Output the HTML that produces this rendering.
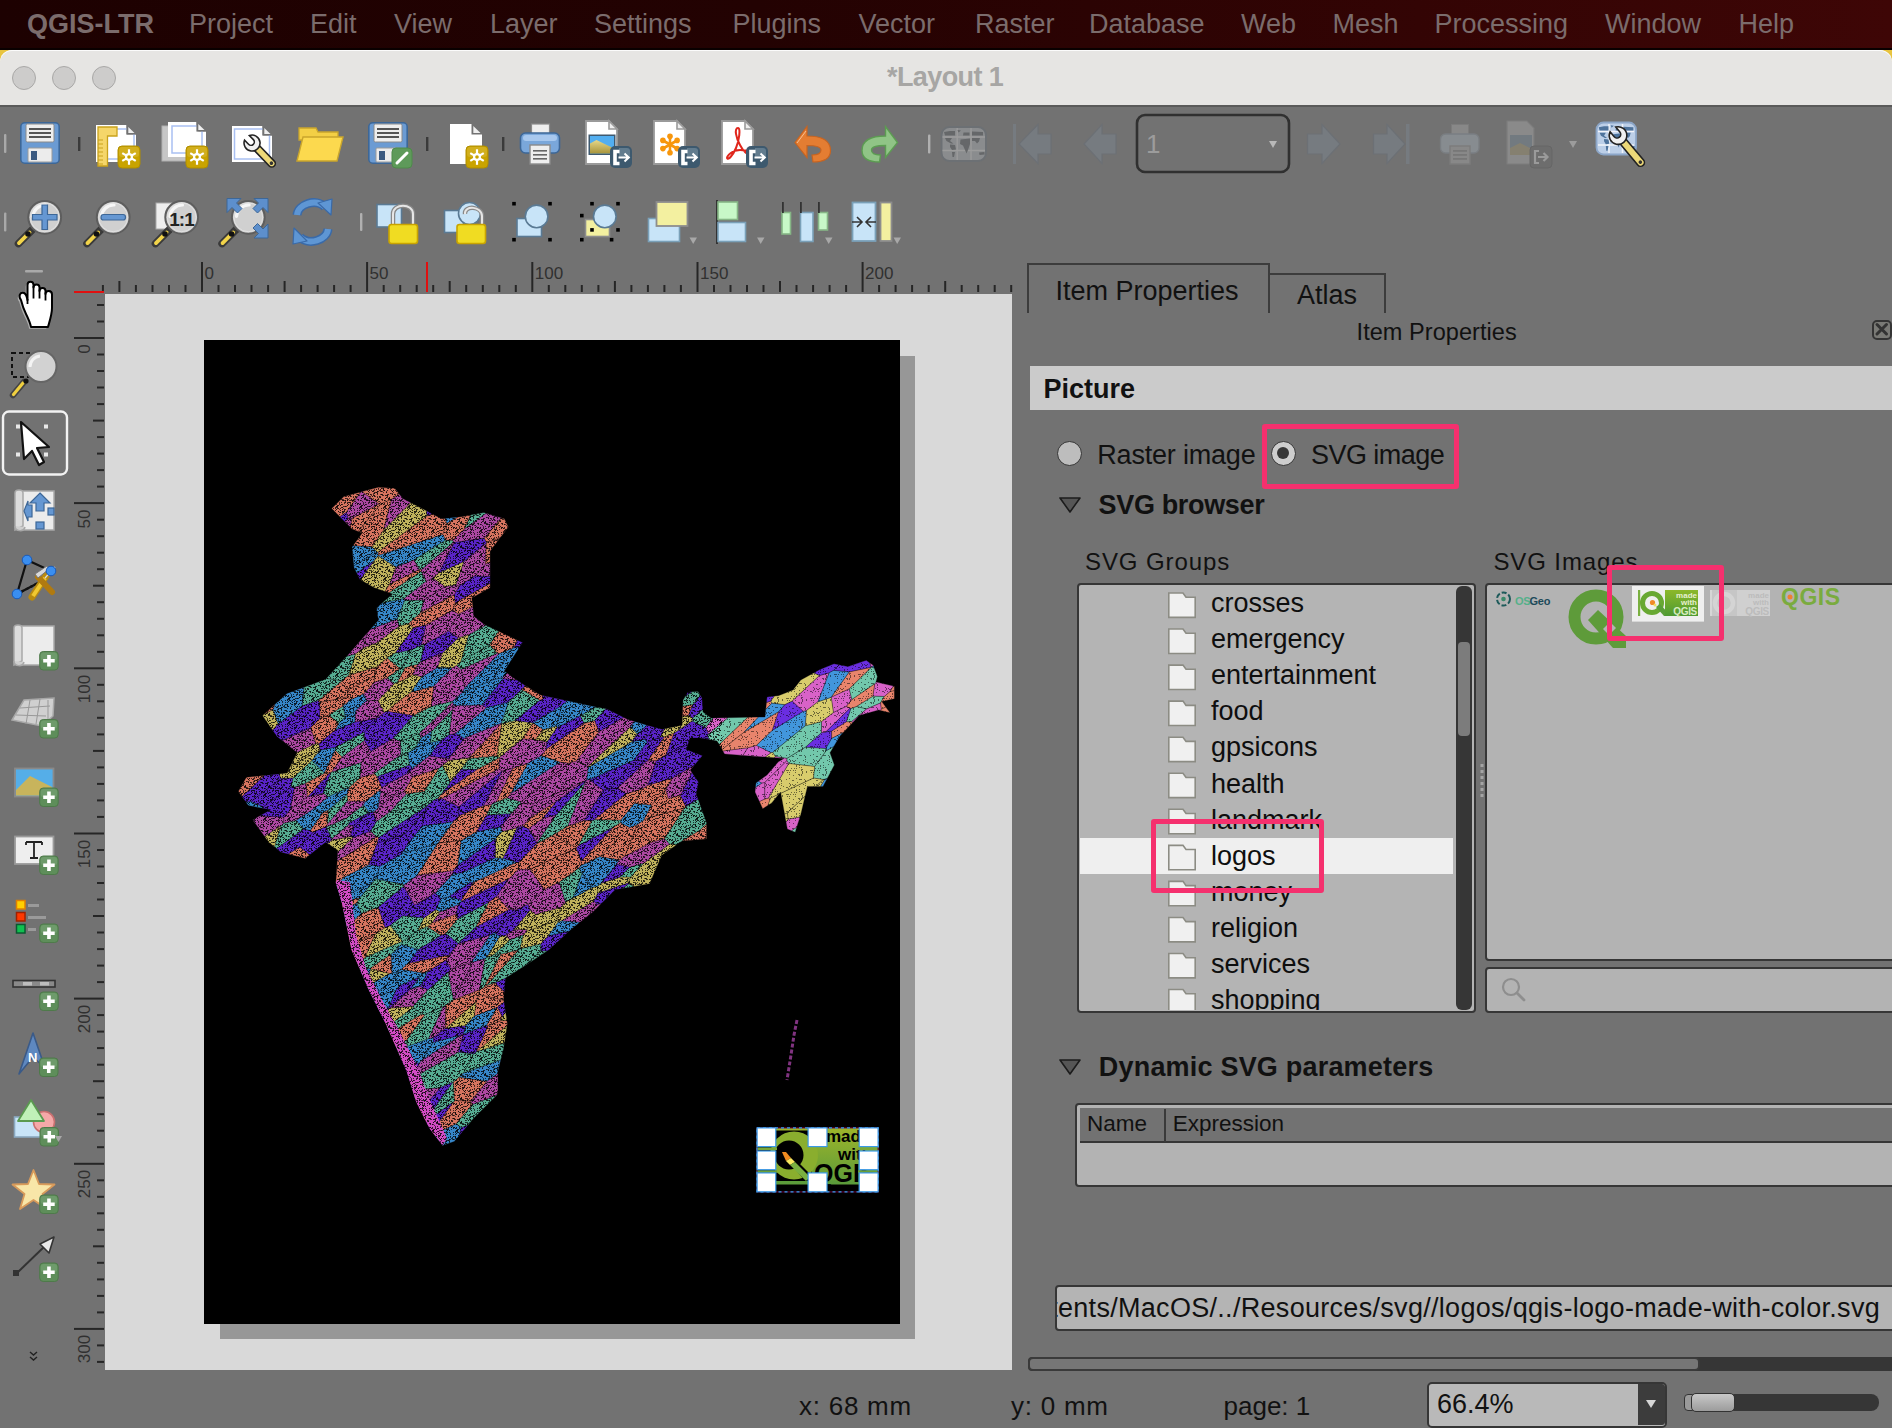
<!DOCTYPE html>
<html><head><meta charset="utf-8"><style>
html,body{margin:0;padding:0;width:1892px;height:1428px;overflow:hidden;background:#727272;}
body{position:relative;font-family:"Liberation Sans", sans-serif;}
.t{position:absolute;white-space:nowrap;line-height:1;}
.a{position:absolute;}
svg.a{overflow:visible;}
</style></head><body>

<div class="a" style="left:0px;top:0px;width:1892px;height:50px;background:linear-gradient(90deg,#1d0101 0%,#230202 40%,#330404 75%,#3e0606 100%);"></div>
<div class="a" style="left:0px;top:48px;width:1892px;height:2px;background:#0a0000;"></div>
<div class="t" style="left:27.0px;top:10.5px;font-size:27px;color:#7b6c6c;font-weight:bold;">QGIS-LTR</div>
<div class="t" style="left:189.0px;top:10.5px;font-size:27px;color:#7b6c6c;font-weight:normal;">Project</div>
<div class="t" style="left:310.0px;top:10.5px;font-size:27px;color:#7b6c6c;font-weight:normal;">Edit</div>
<div class="t" style="left:394.0px;top:10.5px;font-size:27px;color:#7b6c6c;font-weight:normal;">View</div>
<div class="t" style="left:490.0px;top:10.5px;font-size:27px;color:#7b6c6c;font-weight:normal;">Layer</div>
<div class="t" style="left:594.0px;top:10.5px;font-size:27px;color:#7b6c6c;font-weight:normal;">Settings</div>
<div class="t" style="left:732.5px;top:10.5px;font-size:27px;color:#7b6c6c;font-weight:normal;">Plugins</div>
<div class="t" style="left:858.5px;top:10.5px;font-size:27px;color:#7b6c6c;font-weight:normal;">Vector</div>
<div class="t" style="left:975.0px;top:10.5px;font-size:27px;color:#7b6c6c;font-weight:normal;">Raster</div>
<div class="t" style="left:1089.0px;top:10.5px;font-size:27px;color:#7b6c6c;font-weight:normal;">Database</div>
<div class="t" style="left:1241.0px;top:10.5px;font-size:27px;color:#7b6c6c;font-weight:normal;">Web</div>
<div class="t" style="left:1332.5px;top:10.5px;font-size:27px;color:#7b6c6c;font-weight:normal;">Mesh</div>
<div class="t" style="left:1434.5px;top:10.5px;font-size:27px;color:#7b6c6c;font-weight:normal;">Processing</div>
<div class="t" style="left:1605.0px;top:10.5px;font-size:27px;color:#7b6c6c;font-weight:normal;">Window</div>
<div class="t" style="left:1738.5px;top:10.5px;font-size:27px;color:#7b6c6c;font-weight:normal;">Help</div>
<div class="a" style="left:0px;top:50px;width:20px;height:20px;background:#e8c440;"></div>
<div class="a" style="left:1872px;top:50px;width:20px;height:20px;background:#e8c440;"></div>
<div class="a" style="left:0px;top:50px;width:1892px;height:56px;background:#e6e5e3;border-radius:12px 12px 0 0;box-shadow:inset 0 1px 0 #fbfbfb;"></div>
<div class="a" style="left:12px;top:66px;width:22px;height:22px;background:#cdcccb;border:1px solid #a9a8a7;border-radius:50%;"></div>
<div class="a" style="left:52px;top:66px;width:22px;height:22px;background:#cdcccb;border:1px solid #a9a8a7;border-radius:50%;"></div>
<div class="a" style="left:92px;top:66px;width:22px;height:22px;background:#cdcccb;border:1px solid #a9a8a7;border-radius:50%;"></div>
<div class="t" style="left:887.0px;top:64.0px;font-size:27px;color:#a7a6a4;font-weight:bold;letter-spacing:-0.6px;">*Layout 1</div>
<div class="a" style="left:0px;top:105px;width:1892px;height:2px;background:#5a5a5a;"></div>
<svg class="a" style="left:0;top:0" width="1892" height="260"><rect x="4" y="134" width="2.4" height="19" rx="1" fill="#a9a9a9"/>
<g transform="translate(20,122)">
<rect x="0.8" y="0.8" width="38.4" height="40.4" rx="4" fill="#6b9bd3" stroke="#3d6797" stroke-width="1.6"/>
<rect x="6" y="2" width="28" height="18" rx="1.5" fill="#eeeeee" stroke="#8a8a8a" stroke-width="1"/>
<rect x="9" y="6" width="22" height="2" fill="#555"/><rect x="9" y="10" width="22" height="2" fill="#555"/><rect x="9" y="14" width="22" height="2" fill="#555"/>
<rect x="8" y="26" width="24" height="14" rx="1" fill="#ececec" stroke="#9a9a9a" stroke-width="1"/>
<rect x="11" y="29" width="6" height="9" fill="#3b5a80"/>
</g>
<rect x="78" y="137" width="2.4" height="14" fill="#3a3a3a"/>
<path d="M96,125 L126.5,125 L126.5,134.5 L136,134.5 L136,162 L96,162 Z" fill="#ffffff"/><path d="M128.3,127 L134.5,133.0 L128.3,133.0 Z" fill="#eeeeee"/>
<rect x="106" y="129" width="28" height="30" fill="none" stroke="#a9c0f2" stroke-width="1.5"/>
<rect x="126.5" y="124" width="10.5" height="10.5" fill="#727272"/><path d="M128.3,127 L134.5,133.0 L128.3,133.0 Z" fill="#eeeeee"/>
<path d="M98,127 L117,127 L117,136 L107.5,136 L107.5,166 L98,166 Z" fill="#f5d66a" stroke="#c9a21c" stroke-width="1.3"/>
<line x1="98" y1="140" x2="103" y2="140" stroke="#c9a21c" stroke-width="1"/><line x1="98" y1="144" x2="103" y2="144" stroke="#c9a21c" stroke-width="1"/><line x1="98" y1="148" x2="103" y2="148" stroke="#c9a21c" stroke-width="1"/><line x1="98" y1="152" x2="103" y2="152" stroke="#c9a21c" stroke-width="1"/><line x1="98" y1="156" x2="103" y2="156" stroke="#c9a21c" stroke-width="1"/><line x1="98" y1="160" x2="103" y2="160" stroke="#c9a21c" stroke-width="1"/><line x1="98" y1="164" x2="103" y2="164" stroke="#c9a21c" stroke-width="1"/>
<rect x="118" y="146" width="22" height="22" rx="4" fill="#c9a300" stroke="#b08e00" stroke-width="1"/><rect x="119" y="147" width="20" height="10.0" rx="3" fill="#d9b830" opacity="0.6"/><line x1="129.0" y1="157.0" x2="135.7549998743513" y2="160.8999970125006" stroke="#fff" stroke-width="2.2"/><line x1="129.0" y1="157.0" x2="129.0000103490002" y2="164.79999999999313" stroke="#fff" stroke-width="2.2"/><line x1="129.0" y1="157.0" x2="122.24501047466472" y2="160.9000149374856" stroke="#fff" stroke-width="2.2"/><line x1="129.0" y1="157.0" x2="122.24498977668019" y2="153.10002091251187" stroke="#fff" stroke-width="2.2"/><line x1="129.0" y1="157.0" x2="128.9999689529994" y2="149.20000000006178" stroke="#fff" stroke-width="2.2"/><line x1="129.0" y1="157.0" x2="135.75497917627166" y2="153.0999671375569" stroke="#fff" stroke-width="2.2"/><circle cx="129.0" cy="157.0" r="4" fill="#fff"/><circle cx="129.0" cy="157.0" r="1.8" fill="#c9a300"/>
<rect x="162" y="126" width="36" height="35" fill="#c6c6c6" stroke="#b0b0b0"/>
<path d="M168,122 L196.5,122 L196.5,131.5 L206,131.5 L206,157 L168,157 Z" fill="#ffffff"/><path d="M198.3,124 L204.5,130.0 L198.3,130.0 Z" fill="#eeeeee"/>
<rect x="172" y="126" width="30" height="27" fill="none" stroke="#a9c0f2" stroke-width="1.5"/>
<rect x="196.5" y="121" width="10.5" height="10.5" fill="#727272"/><path d="M198.3,124 L204.5,130.0 L198.3,130.0 Z" fill="#eeeeee"/>
<rect x="186" y="146" width="22" height="22" rx="4" fill="#c9a300" stroke="#b08e00" stroke-width="1"/><rect x="187" y="147" width="20" height="10.0" rx="3" fill="#d9b830" opacity="0.6"/><line x1="197.0" y1="157.0" x2="203.7549998743513" y2="160.8999970125006" stroke="#fff" stroke-width="2.2"/><line x1="197.0" y1="157.0" x2="197.0000103490002" y2="164.79999999999313" stroke="#fff" stroke-width="2.2"/><line x1="197.0" y1="157.0" x2="190.24501047466472" y2="160.9000149374856" stroke="#fff" stroke-width="2.2"/><line x1="197.0" y1="157.0" x2="190.2449897766802" y2="153.10002091251187" stroke="#fff" stroke-width="2.2"/><line x1="197.0" y1="157.0" x2="196.9999689529994" y2="149.20000000006178" stroke="#fff" stroke-width="2.2"/><line x1="197.0" y1="157.0" x2="203.75497917627166" y2="153.0999671375569" stroke="#fff" stroke-width="2.2"/><circle cx="197.0" cy="157.0" r="4" fill="#fff"/><circle cx="197.0" cy="157.0" r="1.8" fill="#c9a300"/>
<path d="M232,126 L262.5,126 L262.5,135.5 L272,135.5 L272,162 L232,162 Z" fill="#ffffff"/><path d="M264.3,128 L270.5,134.0 L264.3,134.0 Z" fill="#eeeeee"/>
<rect x="234.5" y="129" width="35" height="30" fill="none" stroke="#a9c0f2" stroke-width="1.5"/>
<rect x="262.5" y="125" width="10.5" height="10.5" fill="#727272"/><path d="M264.3,128 L270.5,134.0 L264.3,134.0 Z" fill="#eeeeee"/>
<g transform="translate(252,143) rotate(46)"><rect x="4.40" y="-3.50" width="27.60" height="7" rx="3.50" fill="#ecd878" stroke="#222" stroke-width="1.6"/><rect x="4.80" y="-3.50" width="3.2" height="7" fill="#333"/><circle cx="28.00" cy="0" r="1.8" fill="#333"/><path d="M-7.20,-3.36 A8,8 0 1 1 -7.20,3.36 L-1.50,3.36 A3.36,3.36 0 0 0 -1.50,-3.36 Z" fill="#f0f0f0" stroke="#222" stroke-width="1.6"/></g>
<path d="M299,128 L316,128 L318,132 L338,132 L338,140 L299,140 Z" fill="#f3cf45" stroke="#c9a52c" stroke-width="1.3"/>
<path d="M297,161 L303,137 L343,137 L337,161 Z" fill="#fcd94e" stroke="#c9a52c" stroke-width="1.4"/>
<g transform="translate(368,122)">
<rect x="0.8" y="0.8" width="38.4" height="40.4" rx="4" fill="#6b9bd3" stroke="#3d6797" stroke-width="1.6"/>
<rect x="6" y="2" width="28" height="18" rx="1.5" fill="#eeeeee" stroke="#8a8a8a" stroke-width="1"/>
<rect x="9" y="6" width="22" height="2" fill="#555"/><rect x="9" y="10" width="22" height="2" fill="#555"/><rect x="9" y="14" width="22" height="2" fill="#555"/>
<rect x="8" y="26" width="24" height="14" rx="1" fill="#ececec" stroke="#9a9a9a" stroke-width="1"/>
<rect x="11" y="29" width="6" height="9" fill="#3b5a80"/>
</g>
<rect x="392" y="148" width="20" height="20" rx="4" fill="#5e9a5a" stroke="#4e8a4a"/><line x1="397" y1="163" x2="407" y2="153" stroke="#fff" stroke-width="3" stroke-linecap="round"/>
<rect x="426" y="137" width="2.4" height="14" fill="#3a3a3a"/>
<path d="M450,124 L471.5,124 L471.5,134.5 L482,134.5 L482,164 L450,164 Z" fill="#ffffff"/><path d="M473.3,126 L480.5,133.0 L473.3,133.0 Z" fill="#eeeeee"/>
<rect x="466" y="146" width="22" height="22" rx="4" fill="#c9a300" stroke="#b08e00" stroke-width="1"/><rect x="467" y="147" width="20" height="10.0" rx="3" fill="#d9b830" opacity="0.6"/><line x1="477.0" y1="157.0" x2="483.7549998743513" y2="160.8999970125006" stroke="#fff" stroke-width="2.2"/><line x1="477.0" y1="157.0" x2="477.0000103490002" y2="164.79999999999313" stroke="#fff" stroke-width="2.2"/><line x1="477.0" y1="157.0" x2="470.2450104746647" y2="160.9000149374856" stroke="#fff" stroke-width="2.2"/><line x1="477.0" y1="157.0" x2="470.2449897766802" y2="153.10002091251187" stroke="#fff" stroke-width="2.2"/><line x1="477.0" y1="157.0" x2="476.99996895299944" y2="149.20000000006178" stroke="#fff" stroke-width="2.2"/><line x1="477.0" y1="157.0" x2="483.75497917627166" y2="153.0999671375569" stroke="#fff" stroke-width="2.2"/><circle cx="477.0" cy="157.0" r="4" fill="#fff"/><circle cx="477.0" cy="157.0" r="1.8" fill="#c9a300"/>
<rect x="502" y="137" width="2.4" height="14" fill="#3a3a3a"/>
<rect x="531.5" y="124" width="18" height="13" fill="#eeeeee" stroke="#8a8a8a" stroke-width="1.2"/>
<rect x="520.5" y="133" width="39" height="20" rx="5" fill="#7aa7da" stroke="#3d6797" stroke-width="1.6"/>
<rect x="523" y="135" width="34" height="6" rx="3" fill="#a8c8ee"/>
<rect x="530" y="145" width="20" height="19" fill="#eeeeee" stroke="#8a8a8a" stroke-width="1.4"/>
<rect x="533" y="150" width="14" height="1.6" fill="#666"/><rect x="533" y="154" width="14" height="1.6" fill="#666"/><rect x="533" y="158" width="14" height="1.6" fill="#666"/>
<path d="M586,121 L609,121 L617,129 L617,164 L586,164 Z" fill="#ffffff" stroke="#9a9a9a" stroke-width="1.8"/><path d="M609,121 L609,129 L617,129 Z" fill="#eeeeee" stroke="#9a9a9a" stroke-width="1.6"/>
<defs><linearGradient id="sand" x1="0" y1="0" x2="0" y2="1"><stop offset="0" stop-color="#e6d888"/><stop offset="1" stop-color="#a8943c"/></linearGradient></defs><rect x="588.5" y="134.5" width="27" height="20.5" fill="#3e596f"/><rect x="590" y="136" width="24" height="17.5" fill="#52aef0"/><path d="M590,143.5 L596.5,140 L614,148.5 L614,153.5 L590,153.5 Z" fill="url(#sand)"/>
<rect x="610" y="146" width="22" height="22" rx="5" fill="#3d596e"/><path d="M619,148 L627,148 Q630,148 630,151 L630,158 L619,158 Z" fill="#6f889a" opacity="0.75"/><path d="M619.5,151.5 L615,151.5 L615,163.5 L619.5,163.5" fill="none" stroke="#fff" stroke-width="3.6"/><path d="M618.5,157.5 L628.5,157.5 M624.5,153.5 L628.8,157.5 L624.5,161.5" fill="none" stroke="#fff" stroke-width="2"/>
<path d="M654,121 L677,121 L685,129 L685,164 L654,164 Z" fill="#ffffff" stroke="#9a9a9a" stroke-width="1.8"/><path d="M677,121 L677,129 L685,129 Z" fill="#eeeeee" stroke="#9a9a9a" stroke-width="1.6"/>
<line x1="670" y1="144.5" x2="670.00" y2="135.50" stroke="#f7960c" stroke-width="2.6"/><circle cx="670.00" cy="136.30" r="2.8" fill="#f7960c"/>
<line x1="670" y1="144.5" x2="677.79" y2="140.00" stroke="#f7960c" stroke-width="2.6"/><circle cx="677.10" cy="140.40" r="2.8" fill="#f7960c"/>
<line x1="670" y1="144.5" x2="677.79" y2="149.00" stroke="#f7960c" stroke-width="2.6"/><circle cx="677.10" cy="148.60" r="2.8" fill="#f7960c"/>
<line x1="670" y1="144.5" x2="670.00" y2="153.50" stroke="#f7960c" stroke-width="2.6"/><circle cx="670.00" cy="152.70" r="2.8" fill="#f7960c"/>
<line x1="670" y1="144.5" x2="662.21" y2="149.00" stroke="#f7960c" stroke-width="2.6"/><circle cx="662.90" cy="148.60" r="2.8" fill="#f7960c"/>
<line x1="670" y1="144.5" x2="662.21" y2="140.00" stroke="#f7960c" stroke-width="2.6"/><circle cx="662.90" cy="140.40" r="2.8" fill="#f7960c"/>
<rect x="678" y="146" width="22" height="22" rx="5" fill="#3d596e"/><path d="M687,148 L695,148 Q698,148 698,151 L698,158 L687,158 Z" fill="#6f889a" opacity="0.75"/><path d="M687.5,151.5 L683,151.5 L683,163.5 L687.5,163.5" fill="none" stroke="#fff" stroke-width="3.6"/><path d="M686.5,157.5 L696.5,157.5 M692.5,153.5 L696.8,157.5 L692.5,161.5" fill="none" stroke="#fff" stroke-width="2"/>
<path d="M722,121 L745,121 L753,129 L753,164 L722,164 Z" fill="#ffffff" stroke="#9a9a9a" stroke-width="1.8"/><path d="M745,121 L745,129 L753,129 Z" fill="#eeeeee" stroke="#9a9a9a" stroke-width="1.6"/>
<path d="M738,128 C734,128 736,138 740,145 C743,151 748,156 751,155 C754,154 749,150 740,150 C732,150 727,156 727,158 C728,161 733,155 736,148 C739,141 741,128 738,128 Z" fill="none" stroke="#e0261c" stroke-width="2"/>
<rect x="746" y="146" width="22" height="22" rx="5" fill="#3d596e"/><path d="M755,148 L763,148 Q766,148 766,151 L766,158 L755,158 Z" fill="#6f889a" opacity="0.75"/><path d="M755.5,151.5 L751,151.5 L751,163.5 L755.5,163.5" fill="none" stroke="#fff" stroke-width="3.6"/><path d="M754.5,157.5 L764.5,157.5 M760.5,153.5 L764.8,157.5 L760.5,161.5" fill="none" stroke="#fff" stroke-width="2"/>
<path d="M795,142.5 L807,126.5 L807,136 C822,136 830.5,141 830.5,150.5 C830.5,158 824,162 813,162 L812,155 C818,155 821,153 821,150 C821,146.5 815,145.5 807,145.5 L807,157.5 Z" fill="#e47d32" stroke="#c86420" stroke-width="1.2"/>
<path d="M797,143 L806,131" stroke="#f8c090" stroke-width="1"/>
<path d="M897.5,142.5 L885.5,126.5 L885.5,136 C870.5,136 862,141 862,150.5 C862,158 868.5,162 879.5,162 L880.5,155 C874.5,155 871.5,153 871.5,150 C871.5,146.5 877.5,145.5 885.5,145.5 L885.5,157.5 Z" fill="#90c486" stroke="#5c9c52" stroke-width="1.4"/>
<rect x="928" y="134.5" width="2.4" height="19" rx="1" fill="#b0b0b0"/>
<rect x="941.5" y="127" width="44.5" height="34" rx="8" fill="#8a8c8e" stroke="#6c7074" stroke-width="2"/>
<line x1="957.2" y1="128" x2="957.2" y2="160" stroke="#9c9c9c" stroke-width="1.3"/><line x1="971" y1="128" x2="971" y2="160" stroke="#9c9c9c" stroke-width="1.3"/><line x1="942.5" y1="137" x2="985" y2="137" stroke="#9c9c9c" stroke-width="1.3"/><line x1="942.5" y1="150.5" x2="985" y2="150.5" stroke="#9c9c9c" stroke-width="1.3"/>
<path d="M944,132 L950,131 L955,131 L955,135.5 L945,135.5 Z M945,138 L952,138 L950,141 L953.5,143.5 L951,143.5 L946.5,141 Z M950,144.5 L955,145 L956,149.5 L952,150 L950,147 Z M952,152 L955,152 L954,157 L952.5,157 Z M957.5,130 L961,130.5 L958.5,132.5 Z M963.5,132.5 L969.5,132.5 L969.5,135.5 L963,135.5 Z M972,131.5 L983,132 L983,135.5 L972,135.5 Z M972,138 L980,138 L979,141.5 L977,143.5 L975,141 L972,141 Z M960.5,139.5 L970,138.5 L970,144 L968,150 L966.5,153.5 L965,150 L963,145.5 L960,144 Z M979,152.5 L984.5,152 L984.5,154.5 L979.5,155 Z" fill="#656769"/>
<rect x="1013" y="124" width="3" height="40" fill="#767b80"/><path d="M1019,144 L1038,124.5 L1038,134 L1051,134 L1051,154 L1038,154 L1038,163.5 Z" fill="#767b80" stroke="#6c7075" stroke-width="1.2"/>
<path d="M1084,144 L1102,124.5 L1102,134 L1116,134 L1116,154 L1102,154 L1102,163.5 Z" fill="#767b80" stroke="#6c7075" stroke-width="1.2"/>
<rect x="1137" y="115" width="152" height="57" rx="8" fill="none" stroke="#303030" stroke-width="2.6"/>
<path d="M1269,141 L1277,141 L1273,148 Z" fill="#b8b8b8"/>
<path d="M1340,144 L1322,124.5 L1322,134 L1307.5,134 L1307.5,154 L1322,154 L1322,163.5 Z" fill="#767b80" stroke="#6c7075" stroke-width="1.2"/>
<path d="M1405,144 L1387,124.5 L1387,134 L1373.5,134 L1373.5,154 L1387,154 L1387,163.5 Z" fill="#767b80" stroke="#6c7075" stroke-width="1.2"/><rect x="1406" y="124" width="3.5" height="40" fill="#767b80"/>
<rect x="1451.5" y="124.5" width="17" height="12" fill="#888" stroke="#7c7c7c"/><rect x="1440.5" y="134" width="38.5" height="19" rx="5" fill="#878c90" stroke="#7a7e82" stroke-width="1.4"/><rect x="1450" y="146" width="20" height="18" fill="#888" stroke="#7c7c7c" stroke-width="1.4"/><rect x="1453" y="150" width="14" height="1.8" fill="#777"/><rect x="1453" y="154" width="14" height="1.8" fill="#777"/><rect x="1453" y="158" width="14" height="1.8" fill="#777"/>
<path d="M1507,121 L1527,121 L1534,128 L1534,164 L1507,164 Z" fill="#8a8a8a" stroke="#7c7c7c" stroke-width="1.2"/><rect x="1510" y="135" width="22" height="20" fill="#727a80"/><path d="M1510,148 L1520,143 L1532,149 L1532,155 L1510,155 Z" fill="#858070"/>
<rect x="1530" y="146" width="22" height="22" rx="4" fill="#6d6d6d" stroke="#666"/><path d="M1539,151 L1535,151 L1535,163 L1539,163 M1538,157 L1547,157 M1543.5,153 L1547.5,157 L1543.5,161" fill="none" stroke="#9a9a9a" stroke-width="2.2"/>
<path d="M1569,141 L1577,141 L1573,148 Z" fill="#9c9c9c"/>
<rect x="1596.5" y="122.5" width="39.5" height="32" rx="7" fill="#bccfe8" stroke="#8ca6c8" stroke-width="1.8"/>
<line x1="1609" y1="124" x2="1609" y2="153" stroke="#f2f4fa" stroke-width="1.5"/><line x1="1622.5" y1="124" x2="1622.5" y2="153" stroke="#f2f4fa" stroke-width="1.5"/><line x1="1598" y1="131.5" x2="1634" y2="131.5" stroke="#f2f4fa" stroke-width="1.5"/><line x1="1598" y1="145" x2="1634" y2="145" stroke="#f2f4fa" stroke-width="1.5"/>
<g transform="translate(1596.5,122.5) scale(0.8876,0.9412) translate(-941.5,-127)"><path d="M944,132 L950,131 L955,131 L955,135.5 L945,135.5 Z M945,138 L952,138 L950,141 L953.5,143.5 L951,143.5 L946.5,141 Z M950,144.5 L955,145 L956,149.5 L952,150 L950,147 Z M952,152 L955,152 L954,157 L952.5,157 Z M957.5,130 L961,130.5 L958.5,132.5 Z M963.5,132.5 L969.5,132.5 L969.5,135.5 L963,135.5 Z M972,131.5 L983,132 L983,135.5 L972,135.5 Z M972,138 L980,138 L979,141.5 L977,143.5 L975,141 L972,141 Z M960.5,139.5 L970,138.5 L970,144 L968,150 L966.5,153.5 L965,150 L963,145.5 L960,144 Z M979,152.5 L984.5,152 L984.5,154.5 L979.5,155 Z" fill="#4e739c"/></g>
<g transform="translate(1618,135.5) rotate(50)"><rect x="4.84" y="-3.75" width="34.16" height="7.5" rx="3.75" fill="#ecd878" stroke="#222" stroke-width="1.6"/><rect x="5.28" y="-3.75" width="3.2" height="7.5" fill="#333"/><circle cx="34.75" cy="0" r="1.8" fill="#333"/><path d="M-7.92,-3.70 A8.8,8.8 0 1 1 -7.92,3.70 L-1.50,3.70 A3.696,3.696 0 0 0 -1.50,-3.70 Z" fill="#f0f0f0" stroke="#222" stroke-width="1.6"/></g><rect x="4" y="212.5" width="2.4" height="19" rx="1" fill="#a9a9a9"/>
<line x1="32.52373800000001" y1="229.47626200000002" x2="18.460000000000004" y2="243.54000000000002" stroke="#3a3a3a" stroke-width="7.5" stroke-linecap="round"/>
<line x1="29.52373800000001" y1="232.47626200000002" x2="18.960000000000004" y2="243.04000000000002" stroke="#f2d44a" stroke-width="3.8" stroke-linecap="round"/>
<circle cx="27.972000000000005" cy="234.02800000000002" r="2.8" fill="#111"/>
<circle cx="44.7" cy="217.3" r="16.4" fill="#d0d0d0" stroke="#5e5e5e" stroke-width="2"/>
<circle cx="44.7" cy="217.3" r="14.399999999999999" fill="none" stroke="#e2e2e2" stroke-width="1"/>
<path d="M32.892,216.48000000000002 A12.299999999999999,12.299999999999999 0 0 1 45.52,205.0" stroke="#f6f6f6" stroke-width="3.2" fill="none" stroke-linecap="round"/>
<path d="M42,205 L47.5,205 L47.5,214.5 L57,214.5 L57,220 L47.5,220 L47.5,229.5 L42,229.5 L42,220 L32.5,220 L32.5,214.5 L42,214.5 Z" fill="#6597d2" stroke="#3d6797" stroke-width="1.2"/>
<line x1="101.02373800000001" y1="229.47626200000002" x2="86.96000000000001" y2="243.54000000000002" stroke="#3a3a3a" stroke-width="7.5" stroke-linecap="round"/>
<line x1="98.02373800000001" y1="232.47626200000002" x2="87.46000000000001" y2="243.04000000000002" stroke="#f2d44a" stroke-width="3.8" stroke-linecap="round"/>
<circle cx="96.47200000000001" cy="234.02800000000002" r="2.8" fill="#111"/>
<circle cx="113.2" cy="217.3" r="16.4" fill="#d0d0d0" stroke="#5e5e5e" stroke-width="2"/>
<circle cx="113.2" cy="217.3" r="14.399999999999999" fill="none" stroke="#e2e2e2" stroke-width="1"/>
<path d="M101.39200000000001,216.48000000000002 A12.299999999999999,12.299999999999999 0 0 1 114.02,205.0" stroke="#f6f6f6" stroke-width="3.2" fill="none" stroke-linecap="round"/>
<rect x="101" y="214.5" width="24.5" height="5.5" rx="2.5" fill="#6597d2" stroke="#3d6797" stroke-width="1.2"/>
<rect x="156" y="203" width="16" height="26" fill="#eeeeee" stroke="#aaa"/>
<line x1="169.52373799999998" y1="229.47626200000002" x2="155.45999999999998" y2="243.54000000000002" stroke="#3a3a3a" stroke-width="7.5" stroke-linecap="round"/>
<line x1="166.52373799999998" y1="232.47626200000002" x2="155.95999999999998" y2="243.04000000000002" stroke="#f2d44a" stroke-width="3.8" stroke-linecap="round"/>
<circle cx="164.97199999999998" cy="234.02800000000002" r="2.8" fill="#111"/>
<circle cx="181.7" cy="217.3" r="16.4" fill="#d0d0d0" stroke="#5e5e5e" stroke-width="2"/>
<circle cx="181.7" cy="217.3" r="14.399999999999999" fill="none" stroke="#e2e2e2" stroke-width="1"/>
<path d="M169.892,216.48000000000002 A12.299999999999999,12.299999999999999 0 0 1 182.51999999999998,205.0" stroke="#f6f6f6" stroke-width="3.2" fill="none" stroke-linecap="round"/>
<text x="181.5" y="225.5" text-anchor="middle" font-family="Liberation Sans" font-weight="bold" font-size="19" fill="#222" letter-spacing="-1">1:1</text>
<line x1="236.123738" y1="229.47626200000002" x2="222.06" y2="243.54000000000002" stroke="#3a3a3a" stroke-width="7.5" stroke-linecap="round"/>
<line x1="233.123738" y1="232.47626200000002" x2="222.56" y2="243.04000000000002" stroke="#f2d44a" stroke-width="3.8" stroke-linecap="round"/>
<circle cx="231.572" cy="234.02800000000002" r="2.8" fill="#111"/>
<circle cx="248.3" cy="217.3" r="16.4" fill="#d0d0d0" stroke="#5e5e5e" stroke-width="2"/>
<circle cx="248.3" cy="217.3" r="14.399999999999999" fill="none" stroke="#e2e2e2" stroke-width="1"/>
<path d="M236.49200000000002,216.48000000000002 A12.299999999999999,12.299999999999999 0 0 1 249.12,205.0" stroke="#f6f6f6" stroke-width="3.2" fill="none" stroke-linecap="round"/>
<path d="M227,198.5 L241,198.5 L236.5,203 L242,208.5 L237.5,213 L232,207.5 L227,212.5 Z" fill="#5d8fcc" stroke="#3d6797" stroke-width="1"/>
<path d="M268,198.5 L254,198.5 L258.5,203 L253,208.5 L257.5,213 L263,207.5 L268,212.5 Z" fill="#5d8fcc" stroke="#3d6797" stroke-width="1"/>
<path d="M268,238 L254,238 L258.5,233.5 L253,228 L257.5,223.5 L263,229 L268,224 Z" fill="#5d8fcc" stroke="#3d6797" stroke-width="1"/>
<path d="M297,215 C298,204 316,198 325,207" stroke="#3a6aa8" stroke-width="9" fill="none"/><path d="M297,215 C298,204 316,198 325,207" stroke="#5e96d4" stroke-width="6" fill="none"/>
<path d="M318,203 L332,199 L331,215 Z" fill="#5e96d4" stroke="#3a6aa8" stroke-width="1.2" stroke-linejoin="round"/>
<path d="M328,229 C327,240 309,246 300,237" stroke="#3a6aa8" stroke-width="9" fill="none"/><path d="M328,229 C327,240 309,246 300,237" stroke="#5e96d4" stroke-width="6" fill="none"/>
<path d="M307,241 L293,244 L294,228 Z" fill="#5e96d4" stroke="#3a6aa8" stroke-width="1.2" stroke-linejoin="round"/>
<rect x="360" y="213" width="2.4" height="18" rx="1" fill="#b0b0b0"/>
<rect x="377" y="204.5" width="24.5" height="22.5" fill="#c8e4f8" stroke="#5a7a94" stroke-width="1.6"/>
<path d="M393,225 L393,214 C393,203 413,203 413,214 L413,225" fill="none" stroke="#888" stroke-width="4.5"/><path d="M393,225 L393,214 C393,203 413,203 413,214 L413,225" fill="none" stroke="#e6e6e6" stroke-width="2"/>
<rect x="389" y="224.5" width="28.5" height="19" rx="2.5" fill="#f0dc22" stroke="#c9a400" stroke-width="1.6"/>
<rect x="444.5" y="210.5" width="19" height="22" fill="#c8e4f8" stroke="#5a7a94" stroke-width="1.6"/>
<circle cx="469.5" cy="213.5" r="11" fill="#c8e4f8" stroke="#5a7a94" stroke-width="1.6"/>
<path d="M482,225 L482,216 C482,206 464,205 465,214" fill="none" stroke="#888" stroke-width="4.5"/><path d="M482,225 L482,216 C482,206 464,205 465,214" fill="none" stroke="#e6e6e6" stroke-width="2"/>
<rect x="457" y="224.5" width="28.5" height="19" rx="2.5" fill="#f0dc22" stroke="#c9a400" stroke-width="1.6"/>
<rect x="512.2" y="201.89999999999998" width="3.6" height="3.6" fill="#000"/>
<rect x="548.2" y="201.89999999999998" width="3.6" height="3.6" fill="#000"/>
<rect x="512.2" y="237.89999999999998" width="3.6" height="3.6" fill="#000"/>
<rect x="548.2" y="237.89999999999998" width="3.6" height="3.6" fill="#000"/>
<rect x="517" y="218.5" width="24.5" height="18" fill="#c8e4f8" stroke="#5a7a94" stroke-width="1.6"/>
<circle cx="536.6" cy="216.4" r="11.3" fill="#c8e4f8" stroke="#5a7a94" stroke-width="1.6"/>
<rect x="585.5" y="219.5" width="24" height="17" fill="#f3f0a0" stroke="#8d8d8d" stroke-width="1.6"/>
<circle cx="604.8" cy="216.4" r="11.3" fill="#c8e4f8" stroke="#5a7a94" stroke-width="1.6"/>
<rect x="590.2" y="201.89999999999998" width="3.6" height="3.6" fill="#000"/>
<rect x="616.2" y="201.89999999999998" width="3.6" height="3.6" fill="#000"/>
<rect x="580.0" y="213.79999999999998" width="3.6" height="3.6" fill="#000"/>
<rect x="590.2" y="228.1" width="3.6" height="3.6" fill="#000"/>
<rect x="616.2" y="228.1" width="3.6" height="3.6" fill="#000"/>
<rect x="580.0" y="237.89999999999998" width="3.6" height="3.6" fill="#000"/>
<rect x="609.8000000000001" y="237.89999999999998" width="3.6" height="3.6" fill="#000"/>
<rect x="648.5" y="218.5" width="31" height="23" fill="#c8e4f8" stroke="#7aa0b8" stroke-width="1.6"/>
<rect x="656.5" y="202" width="31" height="24" fill="#f3f0a0" stroke="#8d8d8d" stroke-width="1.8"/>
<path d="M689.5,237.5 L697,237.5 L693.2,244 Z" fill="#a8a8a8"/>
<rect x="716" y="200" width="2" height="44" fill="#333"/>
<rect x="718" y="202" width="19.5" height="17.5" fill="#c8f8c8" stroke="#86b686" stroke-width="1.6"/>
<rect x="718" y="222.5" width="27.5" height="19" fill="#c8e4f8" stroke="#7aa0b8" stroke-width="1.6"/>
<path d="M757,237.5 L764.5,237.5 L760.7,244 Z" fill="#a8a8a8"/>
<rect x="782" y="212.5" width="8.5" height="21.5" fill="#c8f8c8" stroke="#86b686" stroke-width="1.6"/>
<rect x="800.5" y="212.5" width="12.5" height="29" fill="#c8e4f8" stroke="#7aa0b8" stroke-width="1.6"/>
<rect x="818.5" y="212.5" width="9" height="17.5" fill="#c8f8c8" stroke="#86b686" stroke-width="1.6"/>
<rect x="782" y="202" width="1.8" height="11" fill="#333"/><rect x="800" y="202" width="1.8" height="11" fill="#333"/><rect x="818" y="202" width="1.8" height="11" fill="#333"/>
<path d="M825,237.5 L832.5,237.5 L828.7,244 Z" fill="#a8a8a8"/>
<rect x="852.5" y="202.5" width="23" height="38.5" fill="#c8e4f8" stroke="#7aa0b8" stroke-width="1.8"/>
<rect x="880.5" y="202.5" width="11" height="38.5" fill="#f3f0a0" stroke="#8d8d8d" stroke-width="1.8"/>
<path d="M852,222 L862,222 M857,217 L862,222 L857,227 M876,222 L866,222 M871,217 L866,222 L871,227" fill="none" stroke="#333" stroke-width="1.6"/>
<path d="M893.5,237.5 L901,237.5 L897.2,244 Z" fill="#a8a8a8"/></svg><div class="t" style="left:1146px;top:130.5px;font-size:26px;color:#9c9c9c;">1</div>
<div class="a" style="left:105px;top:294px;width:907px;height:1076px;background:#d9d9d9;"></div>
<div class="a" style="left:220px;top:356px;width:695px;height:983px;background:#979797;"></div>
<div class="a" style="left:204px;top:340px;width:696px;height:984px;background:#000;"></div>
<svg class="a" style="left:0;top:0" width="1892" height="1428">
<defs><pattern id="tex" width="24" height="24" patternUnits="userSpaceOnUse"><rect x="0" y="0" width="1" height="1" fill="#000" opacity="0.64"/><rect x="3" y="0" width="1" height="1" fill="#000" opacity="0.72"/><rect x="5" y="0" width="1" height="1" fill="#000" opacity="0.84"/><rect x="6" y="0" width="1" height="1" fill="#000" opacity="0.71"/><rect x="12" y="0" width="1" height="1" fill="#000" opacity="0.81"/><rect x="14" y="0" width="1" height="1" fill="#000" opacity="0.55"/><rect x="16" y="0" width="1" height="1" fill="#000" opacity="0.68"/><rect x="21" y="0" width="1" height="1" fill="#000" opacity="0.83"/><rect x="23" y="0" width="1" height="1" fill="#000" opacity="0.81"/><rect x="1" y="1" width="1" height="1" fill="#000" opacity="0.80"/><rect x="2" y="1" width="1" height="1" fill="#000" opacity="0.85"/><rect x="4" y="1" width="1" height="1" fill="#000" opacity="0.88"/><rect x="11" y="1" width="1" height="1" fill="#000" opacity="0.89"/><rect x="14" y="1" width="1" height="1" fill="#000" opacity="0.83"/><rect x="15" y="1" width="1" height="1" fill="#000" opacity="0.90"/><rect x="16" y="1" width="1" height="1" fill="#000" opacity="0.77"/><rect x="19" y="1" width="1" height="1" fill="#000" opacity="0.62"/><rect x="0" y="2" width="1" height="1" fill="#000" opacity="0.89"/><rect x="1" y="2" width="1" height="1" fill="#000" opacity="0.94"/><rect x="7" y="2" width="1" height="1" fill="#000" opacity="0.70"/><rect x="8" y="2" width="1" height="1" fill="#000" opacity="0.63"/><rect x="9" y="2" width="1" height="1" fill="#000" opacity="0.89"/><rect x="10" y="2" width="1" height="1" fill="#000" opacity="0.67"/><rect x="15" y="2" width="1" height="1" fill="#000" opacity="0.77"/><rect x="17" y="2" width="1" height="1" fill="#000" opacity="0.82"/><rect x="0" y="3" width="1" height="1" fill="#000" opacity="0.75"/><rect x="1" y="3" width="1" height="1" fill="#000" opacity="0.74"/><rect x="5" y="3" width="1" height="1" fill="#000" opacity="0.76"/><rect x="6" y="3" width="1" height="1" fill="#000" opacity="0.85"/><rect x="14" y="3" width="1" height="1" fill="#000" opacity="0.77"/><rect x="23" y="3" width="1" height="1" fill="#000" opacity="0.74"/><rect x="1" y="4" width="1" height="1" fill="#000" opacity="0.78"/><rect x="2" y="4" width="1" height="1" fill="#000" opacity="0.80"/><rect x="4" y="4" width="1" height="1" fill="#000" opacity="0.73"/><rect x="7" y="4" width="1" height="1" fill="#000" opacity="0.62"/><rect x="12" y="4" width="1" height="1" fill="#000" opacity="0.92"/><rect x="13" y="4" width="1" height="1" fill="#000" opacity="0.61"/><rect x="14" y="4" width="1" height="1" fill="#000" opacity="0.69"/><rect x="15" y="4" width="1" height="1" fill="#000" opacity="0.76"/><rect x="17" y="4" width="1" height="1" fill="#000" opacity="0.72"/><rect x="21" y="4" width="1" height="1" fill="#000" opacity="0.76"/><rect x="23" y="4" width="1" height="1" fill="#000" opacity="0.79"/><rect x="0" y="5" width="1" height="1" fill="#000" opacity="0.86"/><rect x="3" y="5" width="1" height="1" fill="#000" opacity="0.58"/><rect x="6" y="5" width="1" height="1" fill="#000" opacity="0.82"/><rect x="8" y="5" width="1" height="1" fill="#000" opacity="0.83"/><rect x="9" y="5" width="1" height="1" fill="#000" opacity="0.70"/><rect x="14" y="5" width="1" height="1" fill="#000" opacity="0.73"/><rect x="18" y="5" width="1" height="1" fill="#000" opacity="0.69"/><rect x="4" y="6" width="1" height="1" fill="#000" opacity="0.82"/><rect x="8" y="6" width="1" height="1" fill="#000" opacity="0.76"/><rect x="15" y="6" width="1" height="1" fill="#000" opacity="0.90"/><rect x="18" y="6" width="1" height="1" fill="#000" opacity="0.60"/><rect x="21" y="6" width="1" height="1" fill="#000" opacity="0.70"/><rect x="23" y="6" width="1" height="1" fill="#000" opacity="0.74"/><rect x="2" y="7" width="1" height="1" fill="#000" opacity="0.87"/><rect x="6" y="7" width="1" height="1" fill="#000" opacity="0.90"/><rect x="7" y="7" width="1" height="1" fill="#000" opacity="0.77"/><rect x="8" y="7" width="1" height="1" fill="#000" opacity="0.80"/><rect x="11" y="7" width="1" height="1" fill="#000" opacity="0.80"/><rect x="13" y="7" width="1" height="1" fill="#000" opacity="0.72"/><rect x="3" y="8" width="1" height="1" fill="#000" opacity="0.61"/><rect x="4" y="8" width="1" height="1" fill="#000" opacity="0.89"/><rect x="6" y="8" width="1" height="1" fill="#000" opacity="0.66"/><rect x="7" y="8" width="1" height="1" fill="#000" opacity="0.79"/><rect x="10" y="8" width="1" height="1" fill="#000" opacity="0.90"/><rect x="18" y="8" width="1" height="1" fill="#000" opacity="0.75"/><rect x="21" y="8" width="1" height="1" fill="#000" opacity="0.82"/><rect x="22" y="8" width="1" height="1" fill="#000" opacity="0.60"/><rect x="23" y="8" width="1" height="1" fill="#000" opacity="0.87"/><rect x="6" y="9" width="1" height="1" fill="#000" opacity="0.64"/><rect x="14" y="9" width="1" height="1" fill="#000" opacity="0.62"/><rect x="16" y="9" width="1" height="1" fill="#000" opacity="0.83"/><rect x="18" y="9" width="1" height="1" fill="#000" opacity="0.57"/><rect x="20" y="9" width="1" height="1" fill="#000" opacity="0.73"/><rect x="23" y="9" width="1" height="1" fill="#000" opacity="0.93"/><rect x="0" y="10" width="1" height="1" fill="#000" opacity="0.93"/><rect x="3" y="10" width="1" height="1" fill="#000" opacity="0.73"/><rect x="7" y="10" width="1" height="1" fill="#000" opacity="0.71"/><rect x="9" y="10" width="1" height="1" fill="#000" opacity="0.88"/><rect x="11" y="10" width="1" height="1" fill="#000" opacity="0.64"/><rect x="13" y="10" width="1" height="1" fill="#000" opacity="0.65"/><rect x="14" y="10" width="1" height="1" fill="#000" opacity="0.65"/><rect x="19" y="10" width="1" height="1" fill="#000" opacity="0.68"/><rect x="20" y="10" width="1" height="1" fill="#000" opacity="0.65"/><rect x="23" y="10" width="1" height="1" fill="#000" opacity="0.69"/><rect x="2" y="11" width="1" height="1" fill="#000" opacity="0.58"/><rect x="8" y="11" width="1" height="1" fill="#000" opacity="0.93"/><rect x="12" y="11" width="1" height="1" fill="#000" opacity="0.78"/><rect x="13" y="11" width="1" height="1" fill="#000" opacity="0.76"/><rect x="17" y="11" width="1" height="1" fill="#000" opacity="0.90"/><rect x="18" y="11" width="1" height="1" fill="#000" opacity="0.64"/><rect x="20" y="11" width="1" height="1" fill="#000" opacity="0.60"/><rect x="21" y="11" width="1" height="1" fill="#000" opacity="0.87"/><rect x="22" y="11" width="1" height="1" fill="#000" opacity="0.57"/><rect x="2" y="12" width="1" height="1" fill="#000" opacity="0.90"/><rect x="9" y="12" width="1" height="1" fill="#000" opacity="0.58"/><rect x="14" y="12" width="1" height="1" fill="#000" opacity="0.70"/><rect x="15" y="12" width="1" height="1" fill="#000" opacity="0.70"/><rect x="16" y="12" width="1" height="1" fill="#000" opacity="0.88"/><rect x="17" y="12" width="1" height="1" fill="#000" opacity="0.63"/><rect x="23" y="12" width="1" height="1" fill="#000" opacity="0.61"/><rect x="6" y="13" width="1" height="1" fill="#000" opacity="0.81"/><rect x="7" y="13" width="1" height="1" fill="#000" opacity="0.58"/><rect x="8" y="13" width="1" height="1" fill="#000" opacity="0.60"/><rect x="13" y="13" width="1" height="1" fill="#000" opacity="0.57"/><rect x="14" y="13" width="1" height="1" fill="#000" opacity="0.89"/><rect x="17" y="13" width="1" height="1" fill="#000" opacity="0.85"/><rect x="3" y="14" width="1" height="1" fill="#000" opacity="0.70"/><rect x="4" y="14" width="1" height="1" fill="#000" opacity="0.70"/><rect x="8" y="14" width="1" height="1" fill="#000" opacity="0.87"/><rect x="10" y="14" width="1" height="1" fill="#000" opacity="0.86"/><rect x="11" y="14" width="1" height="1" fill="#000" opacity="0.63"/><rect x="13" y="14" width="1" height="1" fill="#000" opacity="0.60"/><rect x="17" y="14" width="1" height="1" fill="#000" opacity="0.66"/><rect x="20" y="14" width="1" height="1" fill="#000" opacity="0.55"/><rect x="21" y="14" width="1" height="1" fill="#000" opacity="0.92"/><rect x="22" y="14" width="1" height="1" fill="#000" opacity="0.77"/><rect x="1" y="15" width="1" height="1" fill="#000" opacity="0.81"/><rect x="2" y="15" width="1" height="1" fill="#000" opacity="0.75"/><rect x="3" y="15" width="1" height="1" fill="#000" opacity="0.90"/><rect x="11" y="15" width="1" height="1" fill="#000" opacity="0.59"/><rect x="13" y="15" width="1" height="1" fill="#000" opacity="0.79"/><rect x="14" y="15" width="1" height="1" fill="#000" opacity="0.82"/><rect x="22" y="15" width="1" height="1" fill="#000" opacity="0.68"/><rect x="23" y="15" width="1" height="1" fill="#000" opacity="0.64"/><rect x="3" y="16" width="1" height="1" fill="#000" opacity="0.71"/><rect x="9" y="16" width="1" height="1" fill="#000" opacity="0.76"/><rect x="10" y="16" width="1" height="1" fill="#000" opacity="0.62"/><rect x="12" y="16" width="1" height="1" fill="#000" opacity="0.87"/><rect x="14" y="16" width="1" height="1" fill="#000" opacity="0.80"/><rect x="15" y="16" width="1" height="1" fill="#000" opacity="0.58"/><rect x="17" y="16" width="1" height="1" fill="#000" opacity="0.60"/><rect x="19" y="16" width="1" height="1" fill="#000" opacity="0.87"/><rect x="20" y="16" width="1" height="1" fill="#000" opacity="0.57"/><rect x="2" y="17" width="1" height="1" fill="#000" opacity="0.81"/><rect x="3" y="17" width="1" height="1" fill="#000" opacity="0.55"/><rect x="5" y="17" width="1" height="1" fill="#000" opacity="0.85"/><rect x="17" y="17" width="1" height="1" fill="#000" opacity="0.73"/><rect x="19" y="17" width="1" height="1" fill="#000" opacity="0.64"/><rect x="20" y="17" width="1" height="1" fill="#000" opacity="0.87"/><rect x="1" y="18" width="1" height="1" fill="#000" opacity="0.90"/><rect x="4" y="18" width="1" height="1" fill="#000" opacity="0.85"/><rect x="5" y="18" width="1" height="1" fill="#000" opacity="0.93"/><rect x="9" y="18" width="1" height="1" fill="#000" opacity="0.75"/><rect x="10" y="18" width="1" height="1" fill="#000" opacity="0.66"/><rect x="11" y="18" width="1" height="1" fill="#000" opacity="0.62"/><rect x="13" y="18" width="1" height="1" fill="#000" opacity="0.56"/><rect x="18" y="18" width="1" height="1" fill="#000" opacity="0.60"/><rect x="4" y="19" width="1" height="1" fill="#000" opacity="0.78"/><rect x="5" y="19" width="1" height="1" fill="#000" opacity="0.74"/><rect x="6" y="19" width="1" height="1" fill="#000" opacity="0.74"/><rect x="7" y="19" width="1" height="1" fill="#000" opacity="0.55"/><rect x="11" y="19" width="1" height="1" fill="#000" opacity="0.75"/><rect x="12" y="19" width="1" height="1" fill="#000" opacity="0.58"/><rect x="15" y="19" width="1" height="1" fill="#000" opacity="0.84"/><rect x="17" y="19" width="1" height="1" fill="#000" opacity="0.64"/><rect x="18" y="19" width="1" height="1" fill="#000" opacity="0.79"/><rect x="21" y="19" width="1" height="1" fill="#000" opacity="0.66"/><rect x="22" y="19" width="1" height="1" fill="#000" opacity="0.85"/><rect x="0" y="20" width="1" height="1" fill="#000" opacity="0.90"/><rect x="1" y="20" width="1" height="1" fill="#000" opacity="0.56"/><rect x="6" y="20" width="1" height="1" fill="#000" opacity="0.79"/><rect x="7" y="20" width="1" height="1" fill="#000" opacity="0.88"/><rect x="8" y="20" width="1" height="1" fill="#000" opacity="0.59"/><rect x="9" y="20" width="1" height="1" fill="#000" opacity="0.88"/><rect x="11" y="20" width="1" height="1" fill="#000" opacity="0.95"/><rect x="13" y="20" width="1" height="1" fill="#000" opacity="0.57"/><rect x="14" y="20" width="1" height="1" fill="#000" opacity="0.72"/><rect x="15" y="20" width="1" height="1" fill="#000" opacity="0.62"/><rect x="16" y="20" width="1" height="1" fill="#000" opacity="0.90"/><rect x="17" y="20" width="1" height="1" fill="#000" opacity="0.92"/><rect x="22" y="20" width="1" height="1" fill="#000" opacity="0.65"/><rect x="2" y="21" width="1" height="1" fill="#000" opacity="0.59"/><rect x="9" y="21" width="1" height="1" fill="#000" opacity="0.60"/><rect x="16" y="21" width="1" height="1" fill="#000" opacity="0.70"/><rect x="18" y="21" width="1" height="1" fill="#000" opacity="0.60"/><rect x="19" y="21" width="1" height="1" fill="#000" opacity="0.75"/><rect x="3" y="22" width="1" height="1" fill="#000" opacity="0.59"/><rect x="5" y="22" width="1" height="1" fill="#000" opacity="0.72"/><rect x="8" y="22" width="1" height="1" fill="#000" opacity="0.66"/><rect x="9" y="22" width="1" height="1" fill="#000" opacity="0.82"/><rect x="11" y="22" width="1" height="1" fill="#000" opacity="0.66"/><rect x="12" y="22" width="1" height="1" fill="#000" opacity="0.79"/><rect x="13" y="22" width="1" height="1" fill="#000" opacity="0.90"/><rect x="14" y="22" width="1" height="1" fill="#000" opacity="0.81"/><rect x="20" y="22" width="1" height="1" fill="#000" opacity="0.68"/><rect x="0" y="23" width="1" height="1" fill="#000" opacity="0.81"/><rect x="3" y="23" width="1" height="1" fill="#000" opacity="0.69"/><rect x="8" y="23" width="1" height="1" fill="#000" opacity="0.68"/><rect x="11" y="23" width="1" height="1" fill="#000" opacity="0.82"/><rect x="14" y="23" width="1" height="1" fill="#000" opacity="0.62"/><rect x="16" y="23" width="1" height="1" fill="#000" opacity="0.86"/><rect x="19" y="23" width="1" height="1" fill="#000" opacity="0.92"/><rect x="21" y="23" width="1" height="1" fill="#000" opacity="0.83"/><rect x="22" y="23" width="1" height="1" fill="#000" opacity="0.90"/></pattern>
<pattern id="tex2" width="24" height="24" patternUnits="userSpaceOnUse"><rect x="2" y="0" width="1" height="1" fill="#000" opacity="0.5"/><rect x="4" y="0" width="1" height="1" fill="#000" opacity="0.5"/><rect x="23" y="0" width="1" height="1" fill="#000" opacity="0.5"/><rect x="9" y="1" width="1" height="1" fill="#000" opacity="0.5"/><rect x="10" y="1" width="1" height="1" fill="#000" opacity="0.5"/><rect x="1" y="2" width="1" height="1" fill="#000" opacity="0.5"/><rect x="3" y="2" width="1" height="1" fill="#000" opacity="0.5"/><rect x="9" y="2" width="1" height="1" fill="#000" opacity="0.5"/><rect x="18" y="2" width="1" height="1" fill="#000" opacity="0.5"/><rect x="19" y="2" width="1" height="1" fill="#000" opacity="0.5"/><rect x="20" y="2" width="1" height="1" fill="#000" opacity="0.5"/><rect x="22" y="2" width="1" height="1" fill="#000" opacity="0.5"/><rect x="10" y="3" width="1" height="1" fill="#000" opacity="0.5"/><rect x="14" y="3" width="1" height="1" fill="#000" opacity="0.5"/><rect x="3" y="4" width="1" height="1" fill="#000" opacity="0.5"/><rect x="10" y="4" width="1" height="1" fill="#000" opacity="0.5"/><rect x="14" y="4" width="1" height="1" fill="#000" opacity="0.5"/><rect x="19" y="4" width="1" height="1" fill="#000" opacity="0.5"/><rect x="21" y="4" width="1" height="1" fill="#000" opacity="0.5"/><rect x="10" y="5" width="1" height="1" fill="#000" opacity="0.5"/><rect x="6" y="6" width="1" height="1" fill="#000" opacity="0.5"/><rect x="7" y="6" width="1" height="1" fill="#000" opacity="0.5"/><rect x="9" y="6" width="1" height="1" fill="#000" opacity="0.5"/><rect x="21" y="6" width="1" height="1" fill="#000" opacity="0.5"/><rect x="1" y="7" width="1" height="1" fill="#000" opacity="0.5"/><rect x="7" y="7" width="1" height="1" fill="#000" opacity="0.5"/><rect x="9" y="7" width="1" height="1" fill="#000" opacity="0.5"/><rect x="4" y="10" width="1" height="1" fill="#000" opacity="0.5"/><rect x="21" y="10" width="1" height="1" fill="#000" opacity="0.5"/><rect x="7" y="11" width="1" height="1" fill="#000" opacity="0.5"/><rect x="8" y="11" width="1" height="1" fill="#000" opacity="0.5"/><rect x="9" y="11" width="1" height="1" fill="#000" opacity="0.5"/><rect x="12" y="11" width="1" height="1" fill="#000" opacity="0.5"/><rect x="18" y="11" width="1" height="1" fill="#000" opacity="0.5"/><rect x="0" y="12" width="1" height="1" fill="#000" opacity="0.5"/><rect x="1" y="12" width="1" height="1" fill="#000" opacity="0.5"/><rect x="13" y="12" width="1" height="1" fill="#000" opacity="0.5"/><rect x="13" y="13" width="1" height="1" fill="#000" opacity="0.5"/><rect x="5" y="14" width="1" height="1" fill="#000" opacity="0.5"/><rect x="13" y="15" width="1" height="1" fill="#000" opacity="0.5"/><rect x="21" y="15" width="1" height="1" fill="#000" opacity="0.5"/><rect x="0" y="16" width="1" height="1" fill="#000" opacity="0.5"/><rect x="3" y="16" width="1" height="1" fill="#000" opacity="0.5"/><rect x="11" y="16" width="1" height="1" fill="#000" opacity="0.5"/><rect x="22" y="16" width="1" height="1" fill="#000" opacity="0.5"/><rect x="1" y="17" width="1" height="1" fill="#000" opacity="0.5"/><rect x="2" y="17" width="1" height="1" fill="#000" opacity="0.5"/><rect x="13" y="17" width="1" height="1" fill="#000" opacity="0.5"/><rect x="22" y="17" width="1" height="1" fill="#000" opacity="0.5"/><rect x="7" y="18" width="1" height="1" fill="#000" opacity="0.5"/><rect x="15" y="18" width="1" height="1" fill="#000" opacity="0.5"/><rect x="21" y="18" width="1" height="1" fill="#000" opacity="0.5"/><rect x="2" y="19" width="1" height="1" fill="#000" opacity="0.5"/><rect x="18" y="19" width="1" height="1" fill="#000" opacity="0.5"/><rect x="19" y="19" width="1" height="1" fill="#000" opacity="0.5"/><rect x="23" y="19" width="1" height="1" fill="#000" opacity="0.5"/><rect x="12" y="20" width="1" height="1" fill="#000" opacity="0.5"/><rect x="20" y="20" width="1" height="1" fill="#000" opacity="0.5"/><rect x="4" y="21" width="1" height="1" fill="#000" opacity="0.5"/><rect x="7" y="21" width="1" height="1" fill="#000" opacity="0.5"/><rect x="4" y="22" width="1" height="1" fill="#000" opacity="0.5"/><rect x="7" y="23" width="1" height="1" fill="#000" opacity="0.5"/><rect x="9" y="23" width="1" height="1" fill="#000" opacity="0.5"/></pattern>
<clipPath id="indm"><polygon points="352.0,528.9 362.2,533.0 352.0,547.2 354.0,567.5 360.1,579.7 374.3,587.8 392.6,593.9 376.4,608.1 378.4,620.3 362.2,638.6 350.0,652.8 325.6,679.2 287.0,693.4 262.6,715.7 276.9,736.6 297.2,752.8 287.0,773.1 246.4,777.2 238.3,791.4 248.4,805.6 270.8,809.7 252.5,819.8 268.7,842.2 280.9,852.3 305.3,858.4 325.6,842.2 337.8,850.3 335.8,882.8 341.9,903.1 351.4,949.5 368.5,989.4 385.7,1023.7 406.6,1071.2 416.1,1101.7 429.4,1128.3 442.7,1145.4 454.2,1141.6 473.2,1118.8 482.7,1109.3 497.9,1094.1 497.9,1071.2 503.6,1048.4 507.4,1023.7 503.6,998.9 505.5,978.0 526.5,964.7 549.3,949.5 572.1,928.5 592.8,912.1 615.1,889.8 649.6,883.7 661.8,855.2 682.1,841.0 706.5,839.0 706.5,822.7 696.3,794.3 698.4,782.1 690.3,770.0 702.4,755.7 686.2,749.6 690.0,738.0 700.0,738.0 717.0,741.0 722.0,749.6 722.0,717.8 711.0,718.0 703.0,712.0 702.0,698.0 698.0,691.5 688.0,692.0 683.0,700.0 682.1,725.3 661.8,729.3 647.6,725.3 627.3,719.2 607.0,709.0 586.7,705.0 540.0,694.8 512.4,677.2 504.3,671.0 522.6,642.6 484.0,624.3 473.9,616.2 471.8,597.9 490.1,587.8 490.1,551.2 508.4,526.9 504.3,518.7 484.0,512.6 461.7,516.7 441.4,518.7 402.8,498.4 394.7,488.3 378.4,487.3 343.9,496.4 331.7,508.6"/></clipPath><clipPath id="indn"><polygon points="724.6,754.0 784.0,758.4 778.4,761.7 767.0,775.0 756.0,783.0 755.0,792.0 762.7,808.8 771.7,803.0 780.6,792.0 787.3,829.0 795.2,832.3 800.8,814.4 807.5,786.4 823.0,786.4 834.4,765.0 830.0,752.8 840.0,736.0 859.2,715.6 878.8,710.0 890.0,712.8 881.7,701.6 894.3,698.8 894.3,686.2 876.0,682.0 877.4,676.4 873.2,665.2 866.2,660.3 848.0,666.6 834.0,663.8 820.0,669.4 800.8,680.0 793.0,690.0 778.4,695.7 767.0,697.0 765.0,717.0 722.0,717.8 722.0,749.6"/></clipPath></defs>
<polygon points="331.7,508.6 352.0,528.9 362.2,533.0 352.0,547.2 354.0,567.5 360.1,579.7 374.3,587.8 392.6,593.9 376.4,608.1 378.4,620.3 362.2,638.6 350.0,652.8 325.6,679.2 287.0,693.4 262.6,715.7 276.9,736.6 297.2,752.8 287.0,773.1 246.4,777.2 238.3,791.4 248.4,805.6 270.8,809.7 252.5,819.8 268.7,842.2 280.9,852.3 305.3,858.4 325.6,842.2 337.8,850.3 335.8,882.8 341.9,903.1 351.4,949.5 368.5,989.4 385.7,1023.7 406.6,1071.2 416.1,1101.7 429.4,1128.3 442.7,1145.4 454.2,1141.6 473.2,1118.8 482.7,1109.3 497.9,1094.1 497.9,1071.2 503.6,1048.4 507.4,1023.7 503.6,998.9 505.5,978.0 526.5,964.7 549.3,949.5 572.1,928.5 592.8,912.1 615.1,889.8 649.6,883.7 661.8,855.2 682.1,841.0 706.5,839.0 706.5,822.7 696.3,794.3 698.4,782.1 690.3,770.0 702.4,755.7 686.2,749.6 690.0,738.0 700.0,738.0 717.0,741.0 724.6,754.0 784.0,758.4 778.4,761.7 767.0,775.0 756.0,783.0 755.0,792.0 762.7,808.8 771.7,803.0 780.6,792.0 787.3,829.0 795.2,832.3 800.8,814.4 807.5,786.4 823.0,786.4 834.4,765.0 830.0,752.8 840.0,736.0 859.2,715.6 878.8,710.0 890.0,712.8 881.7,701.6 894.3,698.8 894.3,686.2 876.0,682.0 877.4,676.4 873.2,665.2 866.2,660.3 848.0,666.6 834.0,663.8 820.0,669.4 800.8,680.0 793.0,690.0 778.4,695.7 767.0,697.0 765.0,717.0 711.0,718.0 703.0,712.0 702.0,698.0 698.0,691.5 688.0,692.0 683.0,700.0 682.1,725.3 661.8,729.3 647.6,725.3 627.3,719.2 607.0,709.0 586.7,705.0 540.0,694.8 512.4,677.2 504.3,671.0 522.6,642.6 484.0,624.3 473.9,616.2 471.8,597.9 490.1,587.8 490.1,551.2 508.4,526.9 504.3,518.7 484.0,512.6 461.7,516.7 441.4,518.7 402.8,498.4 394.7,488.3 378.4,487.3 343.9,496.4" fill="#222"/>
<polygon points="644.4,739.2 647.2,742.3 660.4,737.0 664.8,728.7 661.8,729.3 655.7,727.6" fill="#5a24c8" stroke="#000" stroke-opacity="0.3" stroke-width="1"/>
<polygon points="433.9,686.0 410.7,692.2 394.1,704.8 386.8,711.3 413.3,715.8 431.3,706.4" fill="#d6745f" stroke="#000" stroke-opacity="0.3" stroke-width="1"/>
<polygon points="826.0,750.8 814.6,766.5 813.4,778.0 823.2,779.6 824.6,779.3 827.1,778.4 827.5,778.0 834.4,765.0 830.0,752.8 833.8,746.4" fill="#72c8ac" stroke="#000" stroke-opacity="0.3" stroke-width="1"/>
<polygon points="586.7,780.0 588.4,767.3 588.0,766.6 576.4,760.9 568.4,763.2 520.7,801.9 520.0,803.7 533.1,803.7 583.5,781.9" fill="#ac48a2" stroke="#000" stroke-opacity="0.3" stroke-width="1"/>
<polygon points="428.7,1038.5 407.0,1046.4 400.1,1056.4 401.1,1058.7 419.0,1063.4 422.3,1060.0 433.4,1042.2 433.6,1037.6" fill="#3686c8" stroke="#000" stroke-opacity="0.3" stroke-width="1"/>
<polygon points="427.6,805.4 433.5,800.3 424.7,791.3 406.2,794.1 390.3,811.4" fill="#56ac92" stroke="#000" stroke-opacity="0.3" stroke-width="1"/>
<polygon points="346.2,512.2 348.1,518.8 352.1,518.4 379.2,503.9 362.0,491.6 360.8,492.0" fill="#ac48a2" stroke="#000" stroke-opacity="0.3" stroke-width="1"/>
<polygon points="650.1,817.3 668.4,798.6 665.6,789.8 651.4,805.1 643.4,820.3" fill="#d6745f" stroke="#000" stroke-opacity="0.3" stroke-width="1"/>
<polygon points="536.9,843.7 552.2,835.7 567.8,826.3 585.7,781.5 555.9,815.2 537.0,842.7" fill="#56ac92" stroke="#000" stroke-opacity="0.3" stroke-width="1"/>
<polygon points="362.7,648.6 378.0,642.3 399.4,626.0 397.2,618.9 370.5,629.3 367.1,633.1" fill="#ac48a2" stroke="#000" stroke-opacity="0.3" stroke-width="1"/>
<polygon points="361.5,913.3 356.9,902.7 343.4,910.3 346.9,927.6" fill="#3686c8" stroke="#000" stroke-opacity="0.3" stroke-width="1"/>
<polygon points="474.9,575.9 485.5,564.2 486.4,543.1 463.8,561.6 455.8,585.1 459.0,586.2" fill="#ac48a2" stroke="#000" stroke-opacity="0.3" stroke-width="1"/>
<polygon points="410.9,502.7 402.8,498.4 399.5,494.3 391.5,499.2 383.4,530.3" fill="#ac48a2" stroke="#000" stroke-opacity="0.3" stroke-width="1"/>
<polygon points="805.4,747.2 825.8,748.6 831.7,738.4 831.7,731.0 825.8,731.9 821.3,732.7" fill="#6a2ee0" stroke="#000" stroke-opacity="0.3" stroke-width="1"/>
<polygon points="446.8,523.5 458.2,517.0 444.8,518.4" fill="#3686c8" stroke="#000" stroke-opacity="0.3" stroke-width="1"/>
<polygon points="496.5,1095.1 471.9,1104.7 456.0,1123.7 461.4,1127.7 467.9,1125.2 473.2,1118.8 482.7,1109.3 496.8,1095.2" fill="#56ac92" stroke="#000" stroke-opacity="0.3" stroke-width="1"/>
<polygon points="454.2,1097.2 453.5,1081.9 452.7,1082.3 432.8,1110.1" fill="#56ac92" stroke="#000" stroke-opacity="0.3" stroke-width="1"/>
<polygon points="368.2,985.6 390.3,973.6 370.6,968.8 366.7,985.2 366.9,985.7" fill="#c0b25c" stroke="#000" stroke-opacity="0.3" stroke-width="1"/>
<polygon points="496.5,1095.1 497.9,1093.2 497.9,1073.3 486.5,1081.6 470.8,1101.1 471.9,1104.7" fill="#ac48a2" stroke="#000" stroke-opacity="0.3" stroke-width="1"/>
<polygon points="380.9,504.0 379.2,503.9 352.1,518.4 349.9,526.8 352.0,528.9 358.2,531.4" fill="#d6745f" stroke="#000" stroke-opacity="0.3" stroke-width="1"/>
<polygon points="445.8,540.0 442.8,534.4 378.5,555.2 378.2,556.1 396.0,567.3 413.8,560.1" fill="#3686c8" stroke="#000" stroke-opacity="0.3" stroke-width="1"/>
<polygon points="851.8,721.6 846.3,721.7 831.7,731.0 831.7,738.4 843.2,732.6 852.6,722.7" fill="#e8846c" stroke="#000" stroke-opacity="0.3" stroke-width="1"/>
<polygon points="299.5,846.9 288.1,854.1 305.3,858.4 309.8,854.8" fill="#d6745f" stroke="#000" stroke-opacity="0.3" stroke-width="1"/>
<polygon points="833.6,670.4 849.1,672.0 871.0,667.4 870.0,663.0 866.2,660.3 848.0,666.6 839.2,664.8" fill="#6a2ee0" stroke="#000" stroke-opacity="0.3" stroke-width="1"/>
<polygon points="338.7,723.5 345.3,717.0 343.2,706.0 328.7,714.9" fill="#56ac92" stroke="#000" stroke-opacity="0.3" stroke-width="1"/>
<polygon points="874.7,683.7 872.8,696.2 884.3,696.5 890.2,691.5 893.5,686.0 876.3,682.1" fill="#d862c8" stroke="#000" stroke-opacity="0.3" stroke-width="1"/>
<polygon points="519.1,862.0 516.7,862.3 473.4,882.3 461.2,900.2 461.2,901.5 508.6,879.3 518.2,869.6" fill="#d6745f" stroke="#000" stroke-opacity="0.3" stroke-width="1"/>
<polygon points="486.5,957.8 494.1,954.6 510.3,939.8 505.6,935.4 499.7,936.4" fill="#c0b25c" stroke="#000" stroke-opacity="0.3" stroke-width="1"/>
<polygon points="368.2,985.6 367.6,987.4 368.5,989.4 372.5,997.4 373.1,996.9 395.1,976.4 397.1,972.4 391.8,973.0 390.3,973.6" fill="#3686c8" stroke="#000" stroke-opacity="0.3" stroke-width="1"/>
<polygon points="543.3,818.1 556.6,801.2 533.0,815.9 522.3,825.9 528.5,828.8" fill="#d6745f" stroke="#000" stroke-opacity="0.3" stroke-width="1"/>
<polygon points="422.2,826.3 453.4,821.7 458.6,816.2 459.0,806.8 441.8,798.4 437.0,798.7 433.5,800.3 427.6,805.4 426.9,806.2 425.4,810.3" fill="#5a24c8" stroke="#000" stroke-opacity="0.3" stroke-width="1"/>
<polygon points="461.2,901.5 458.4,904.8 456.0,914.0 457.6,919.2 488.6,902.5 496.7,896.2 508.6,879.3" fill="#5a24c8" stroke="#000" stroke-opacity="0.3" stroke-width="1"/>
<polygon points="528.5,828.8 522.3,825.9 516.9,827.8 502.8,858.4 516.7,862.3 519.1,862.0 536.9,843.7 537.0,842.7" fill="#5a24c8" stroke="#000" stroke-opacity="0.3" stroke-width="1"/>
<polygon points="463.8,561.6 438.8,572.7 432.8,577.9 445.2,586.7 455.8,585.1" fill="#c0b25c" stroke="#000" stroke-opacity="0.3" stroke-width="1"/>
<polygon points="632.2,741.5 588.4,767.3 586.7,780.0 586.7,780.0 589.4,779.9 633.7,760.3 647.2,742.3 644.4,739.2" fill="#3686c8" stroke="#000" stroke-opacity="0.3" stroke-width="1"/>
<polygon points="471.8,962.1 450.7,968.9 447.9,972.6 453.4,1000.0 453.5,999.9 473.2,962.1" fill="#ac48a2" stroke="#000" stroke-opacity="0.3" stroke-width="1"/>
<polygon points="880.5,703.0 884.3,696.5 872.8,696.2 856.3,706.5 866.6,709.0" fill="#72c8ac" stroke="#000" stroke-opacity="0.3" stroke-width="1"/>
<polygon points="507.0,798.0 511.0,793.3 528.0,763.3 512.6,768.5 495.9,802.5" fill="#d6745f" stroke="#000" stroke-opacity="0.3" stroke-width="1"/>
<polygon points="791.5,830.7 795.2,832.3 796.8,827.1" fill="#72c8ac" stroke="#000" stroke-opacity="0.3" stroke-width="1"/>
<polygon points="584.0,723.3 546.2,749.1 541.7,755.7 560.1,762.2 568.4,763.2 576.4,760.9 599.0,731.8 594.7,720.5" fill="#d6745f" stroke="#000" stroke-opacity="0.3" stroke-width="1"/>
<polygon points="374.0,773.8 360.0,777.6 348.9,787.7 347.1,794.3 347.6,801.1 365.5,801.6 379.4,790.6 381.8,787.6 377.2,776.4" fill="#d6745f" stroke="#000" stroke-opacity="0.3" stroke-width="1"/>
<polygon points="364.4,740.6 364.6,731.9 335.5,747.1 335.2,750.2 342.0,757.1" fill="#56ac92" stroke="#000" stroke-opacity="0.3" stroke-width="1"/>
<polygon points="455.8,733.3 486.6,707.8 482.1,704.9 454.0,705.6 452.3,709.7 448.8,735.1" fill="#ac48a2" stroke="#000" stroke-opacity="0.3" stroke-width="1"/>
<polygon points="347.6,801.1 347.1,794.3 328.2,810.1 327.2,824.4" fill="#56ac92" stroke="#000" stroke-opacity="0.3" stroke-width="1"/>
<polygon points="442.4,653.0 437.6,667.4 451.9,667.9 456.9,665.6 460.8,661.7 469.1,634.6 458.3,637.8" fill="#c0b25c" stroke="#000" stroke-opacity="0.3" stroke-width="1"/>
<polygon points="442.5,765.8 450.4,782.0 461.2,769.5 469.0,758.7 468.8,757.8 448.7,760.4" fill="#c0b25c" stroke="#000" stroke-opacity="0.3" stroke-width="1"/>
<polygon points="400.9,668.2 412.4,649.4 395.1,653.0 387.2,657.7 387.0,657.9 400.1,668.7" fill="#56ac92" stroke="#000" stroke-opacity="0.3" stroke-width="1"/>
<polygon points="594.0,901.1 597.8,893.3 597.9,886.1 592.4,887.6 573.0,898.0 565.5,902.3 560.4,907.7 556.8,920.5 558.0,922.5 561.5,921.0" fill="#c0b25c" stroke="#000" stroke-opacity="0.3" stroke-width="1"/>
<polygon points="856.3,706.5 850.8,708.5 846.3,721.7 851.8,721.6 866.6,709.0" fill="#72c8ac" stroke="#000" stroke-opacity="0.3" stroke-width="1"/>
<polygon points="633.7,760.3 589.4,779.9 603.1,790.1 617.8,788.1 646.6,761.3" fill="#5a24c8" stroke="#000" stroke-opacity="0.3" stroke-width="1"/>
<polygon points="499.7,936.4 505.6,935.4 514.3,929.4 530.2,910.6 528.1,904.3 516.7,909.8 494.1,932.8" fill="#5a24c8" stroke="#000" stroke-opacity="0.3" stroke-width="1"/>
<polygon points="486.6,542.7 486.4,543.1 485.5,564.2 490.1,562.1 490.1,551.2 500.4,537.5" fill="#d6745f" stroke="#000" stroke-opacity="0.3" stroke-width="1"/>
<polygon points="597.0,904.3 594.0,901.1 561.5,921.0 579.9,922.3 588.2,915.7" fill="#ac48a2" stroke="#000" stroke-opacity="0.3" stroke-width="1"/>
<polygon points="378.2,700.8 394.3,683.5 387.1,678.0 374.2,682.2 363.6,694.0 366.6,700.4" fill="#ac48a2" stroke="#000" stroke-opacity="0.3" stroke-width="1"/>
<polygon points="699.1,830.8 706.5,832.1 706.5,823.9" fill="#e8846c" stroke="#000" stroke-opacity="0.3" stroke-width="1"/>
<polygon points="426.9,516.0 432.2,513.9 426.4,510.8" fill="#5a24c8" stroke="#000" stroke-opacity="0.3" stroke-width="1"/>
<polygon points="507.1,1025.7 507.4,1023.7 506.9,1020.3 501.1,1020.6 488.0,1025.8 475.9,1052.2 476.5,1051.8" fill="#d6745f" stroke="#000" stroke-opacity="0.3" stroke-width="1"/>
<polygon points="374.3,676.4 376.9,666.7 348.8,675.0 341.8,680.8 340.1,682.6 348.2,689.8" fill="#d6745f" stroke="#000" stroke-opacity="0.3" stroke-width="1"/>
<polygon points="676.5,844.4 669.6,844.0 643.5,863.4 630.5,877.0 628.2,883.1 628.6,883.9 634.3,886.4 649.6,883.7 661.8,855.2 676.4,845.0" fill="#c0b25c" stroke="#000" stroke-opacity="0.3" stroke-width="1"/>
<polygon points="528.1,904.3 530.2,910.6 535.5,914.6 560.4,907.7 565.5,902.3 559.5,882.0 544.3,889.5" fill="#ac48a2" stroke="#000" stroke-opacity="0.3" stroke-width="1"/>
<polygon points="648.0,760.8 646.6,761.3 617.8,788.1 626.2,793.9 642.3,789.1 647.8,785.4 656.5,760.4" fill="#ac48a2" stroke="#000" stroke-opacity="0.3" stroke-width="1"/>
<polygon points="420.1,986.5 427.9,990.0 447.9,972.6 450.7,968.9 446.1,960.0 428.3,971.0" fill="#5a24c8" stroke="#000" stroke-opacity="0.3" stroke-width="1"/>
<polygon points="353.6,837.4 350.3,836.6 331.0,840.4 327.6,843.5 337.8,850.3 337.7,852.1" fill="#c0b25c" stroke="#000" stroke-opacity="0.3" stroke-width="1"/>
<polygon points="806.6,710.5 803.2,711.2 772.1,730.4 756.3,745.4 771.0,752.7 772.7,752.5 805.4,725.7" fill="#4296dc" stroke="#000" stroke-opacity="0.3" stroke-width="1"/>
<polygon points="831.2,697.3 849.3,688.9 871.3,667.4 871.0,667.4 849.1,672.0 831.1,697.3" fill="#e8846c" stroke="#000" stroke-opacity="0.3" stroke-width="1"/>
<polygon points="584.3,820.4 603.1,790.1 589.4,779.9 586.7,780.0 585.7,781.5 567.8,826.3" fill="#ac48a2" stroke="#000" stroke-opacity="0.3" stroke-width="1"/>
<polygon points="371.0,751.4 393.6,738.2 413.3,715.8 386.8,711.3 384.2,712.4 376.3,718.6 364.6,731.9 364.4,740.6" fill="#5a24c8" stroke="#000" stroke-opacity="0.3" stroke-width="1"/>
<polygon points="374.9,934.6 364.8,957.7 402.5,941.3 402.5,941.3 390.2,925.4 385.1,927.5" fill="#c0b25c" stroke="#000" stroke-opacity="0.3" stroke-width="1"/>
<polygon points="343.2,706.0 350.8,699.8 347.3,696.8 319.7,702.6 319.8,718.7 328.7,714.9" fill="#d6745f" stroke="#000" stroke-opacity="0.3" stroke-width="1"/>
<polygon points="628.6,883.9 622.0,888.6 634.3,886.4" fill="#56ac92" stroke="#000" stroke-opacity="0.3" stroke-width="1"/>
<polygon points="664.6,838.6 650.9,842.4 624.8,856.3 618.9,860.0 616.6,864.2 629.7,867.3 643.5,863.4 669.6,844.0" fill="#ac48a2" stroke="#000" stroke-opacity="0.3" stroke-width="1"/>
<polygon points="681.4,841.5 682.1,841.0 682.2,841.0 699.1,830.8 706.5,823.9 706.5,822.7 698.1,799.2 685.6,806.8 684.1,808.0 664.6,838.6 669.6,844.0 676.5,844.4" fill="#56ac92" stroke="#000" stroke-opacity="0.3" stroke-width="1"/>
<polygon points="454.0,705.6 452.5,702.1 419.4,733.2 420.9,738.2 431.8,731.3 452.3,709.7" fill="#ac48a2" stroke="#000" stroke-opacity="0.3" stroke-width="1"/>
<polygon points="688.6,715.3 692.9,704.6 682.8,706.2 682.4,716.8" fill="#d6745f" stroke="#000" stroke-opacity="0.3" stroke-width="1"/>
<polygon points="356.9,902.7 359.9,897.8 341.5,901.9 341.9,903.1 343.4,910.3" fill="#d6745f" stroke="#000" stroke-opacity="0.3" stroke-width="1"/>
<polygon points="433.9,686.0 431.3,706.4 452.5,701.3 462.3,692.4 464.9,687.7 461.3,669.4 456.9,665.6 451.9,667.9" fill="#ac48a2" stroke="#000" stroke-opacity="0.3" stroke-width="1"/>
<polygon points="448.8,630.9 424.2,644.7 420.3,662.0 442.4,653.0 458.3,637.8" fill="#5a24c8" stroke="#000" stroke-opacity="0.3" stroke-width="1"/>
<polygon points="778.3,712.0 772.1,730.4 803.2,711.2 792.1,701.0 784.8,704.6" fill="#6a2ee0" stroke="#000" stroke-opacity="0.3" stroke-width="1"/>
<polygon points="443.2,1006.4 424.8,1014.7 406.7,1040.1 407.0,1046.4 428.7,1038.5" fill="#56ac92" stroke="#000" stroke-opacity="0.3" stroke-width="1"/>
<polygon points="280.8,778.4 293.1,778.1 312.1,760.4 320.0,750.2 319.9,750.0 290.5,766.1 287.0,773.1 278.8,773.9" fill="#c0b25c" stroke="#000" stroke-opacity="0.3" stroke-width="1"/>
<polygon points="432.1,922.7 427.1,926.7 440.9,935.6 445.7,933.6 457.6,919.2 456.0,914.0" fill="#d6745f" stroke="#000" stroke-opacity="0.3" stroke-width="1"/>
<polygon points="821.3,732.7 825.8,731.9 850.1,708.2 846.3,706.3 833.4,712.4 821.5,721.5" fill="#d862c8" stroke="#000" stroke-opacity="0.3" stroke-width="1"/>
<polygon points="707.8,736.1 708.7,734.1 705.7,727.5 692.0,720.9 673.9,733.2 666.1,754.4 687.7,744.9 690.0,738.0 700.0,738.0 702.5,738.4" fill="#5a24c8" stroke="#000" stroke-opacity="0.3" stroke-width="1"/>
<polygon points="458.1,1052.2 473.6,1053.9 475.9,1052.2 488.0,1025.8 486.3,1025.6 463.3,1033.9 463.3,1034.0" fill="#5a24c8" stroke="#000" stroke-opacity="0.3" stroke-width="1"/>
<polygon points="376.7,610.0 378.4,620.3 370.5,629.3 397.2,618.9 404.8,600.5 404.1,598.4 382.1,603.1 377.9,606.8" fill="#3686c8" stroke="#000" stroke-opacity="0.3" stroke-width="1"/>
<polygon points="558.0,922.5 556.8,920.5 526.7,931.3 523.1,935.0 519.9,949.0 540.7,944.0 548.4,935.8" fill="#c0b25c" stroke="#000" stroke-opacity="0.3" stroke-width="1"/>
<polygon points="291.2,787.2 293.1,778.1 280.8,778.4 251.1,801.6 263.2,806.9" fill="#5a24c8" stroke="#000" stroke-opacity="0.3" stroke-width="1"/>
<polygon points="490.1,583.4 490.1,576.3 474.9,575.9 459.0,586.2 454.3,594.7 455.0,603.0" fill="#5a24c8" stroke="#000" stroke-opacity="0.3" stroke-width="1"/>
<polygon points="310.7,727.7 282.0,740.6 297.0,752.6 316.1,743.4" fill="#ac48a2" stroke="#000" stroke-opacity="0.3" stroke-width="1"/>
<polygon points="464.4,529.1 486.2,513.3 484.0,512.6 470.5,515.1" fill="#56ac92" stroke="#000" stroke-opacity="0.3" stroke-width="1"/>
<polygon points="459.0,806.8 502.0,771.1 498.9,768.5 441.8,798.4" fill="#ac48a2" stroke="#000" stroke-opacity="0.3" stroke-width="1"/>
<polygon points="461.4,1127.7 456.0,1123.7 434.1,1134.4 442.7,1145.4 454.2,1141.6 459.3,1135.5" fill="#3686c8" stroke="#000" stroke-opacity="0.3" stroke-width="1"/>
<polygon points="419.2,976.9 410.4,989.4 420.1,986.5 428.3,971.0 424.1,973.1" fill="#3686c8" stroke="#000" stroke-opacity="0.3" stroke-width="1"/>
<polygon points="253.7,819.8 253.2,820.7 264.6,836.6 280.8,826.1 283.7,823.6 284.0,817.1 259.8,815.8 256.4,817.7" fill="#ac48a2" stroke="#000" stroke-opacity="0.3" stroke-width="1"/>
<polygon points="856.3,706.5 872.8,696.2 874.7,683.7 851.9,699.4 846.3,706.3 850.1,708.2 850.8,708.5" fill="#e8846c" stroke="#000" stroke-opacity="0.3" stroke-width="1"/>
<polygon points="384.2,712.4 386.8,711.3 394.1,704.8 403.8,679.8 397.6,682.0 394.3,683.5 378.2,700.8" fill="#c0b25c" stroke="#000" stroke-opacity="0.3" stroke-width="1"/>
<polygon points="421.7,569.5 453.6,542.1 452.6,540.2 445.8,540.0 413.8,560.1 419.3,569.5" fill="#56ac92" stroke="#000" stroke-opacity="0.3" stroke-width="1"/>
<polygon points="335.2,750.2 324.2,772.7 324.2,773.6 329.5,773.1 330.9,772.7 331.7,772.3 342.0,757.1" fill="#d6745f" stroke="#000" stroke-opacity="0.3" stroke-width="1"/>
<polygon points="458.0,943.8 448.6,955.3 446.1,960.0 450.7,968.9 471.8,962.1 490.4,934.7" fill="#ac48a2" stroke="#000" stroke-opacity="0.3" stroke-width="1"/>
<polygon points="805.4,747.2 821.3,732.7 821.5,721.5 805.4,725.7 772.7,752.5 775.3,756.6 787.0,758.4" fill="#72c8ac" stroke="#000" stroke-opacity="0.3" stroke-width="1"/>
<polygon points="409.2,765.1 377.2,776.4 381.8,787.6 410.2,771.8 412.5,768.4" fill="#5a24c8" stroke="#000" stroke-opacity="0.3" stroke-width="1"/>
<polygon points="580.1,715.8 580.2,715.9 596.3,706.9 586.7,705.0 584.8,704.6" fill="#3686c8" stroke="#000" stroke-opacity="0.3" stroke-width="1"/>
<polygon points="770.6,797.9 768.4,798.0 764.8,799.0 759.4,801.5 762.7,808.8 768.1,805.3" fill="#e8846c" stroke="#000" stroke-opacity="0.3" stroke-width="1"/>
<polygon points="341.8,680.8 348.8,675.0 355.8,653.8 346.7,656.3 326.3,678.5" fill="#56ac92" stroke="#000" stroke-opacity="0.3" stroke-width="1"/>
<polygon points="516.7,909.8 508.9,909.4 475.7,927.1 458.1,943.4 458.0,943.8 490.4,934.7 494.1,932.8" fill="#5a24c8" stroke="#000" stroke-opacity="0.3" stroke-width="1"/>
<polygon points="666.1,754.4 656.5,760.4 647.8,785.4 672.1,778.3 694.2,765.4 702.4,755.7 686.2,749.6 687.7,744.9" fill="#5a24c8" stroke="#000" stroke-opacity="0.3" stroke-width="1"/>
<polygon points="707.8,736.1 702.5,738.4 709.2,739.6" fill="#5a24c8" stroke="#000" stroke-opacity="0.3" stroke-width="1"/>
<polygon points="374.6,560.3 356.7,573.0 360.1,579.7 360.3,579.8" fill="#5a24c8" stroke="#000" stroke-opacity="0.3" stroke-width="1"/>
<polygon points="728.0,717.7 713.0,718.0 705.7,727.5 708.7,734.1" fill="#d862c8" stroke="#000" stroke-opacity="0.3" stroke-width="1"/>
<polygon points="522.1,738.7 499.6,757.3 499.4,757.8 498.9,768.5 502.0,771.1 502.2,771.1 512.6,768.5 528.0,763.3 541.7,755.7 546.2,749.1 546.8,742.1 535.4,739.5" fill="#ac48a2" stroke="#000" stroke-opacity="0.3" stroke-width="1"/>
<polygon points="461.4,1127.7 459.3,1135.5 467.9,1125.2" fill="#5a24c8" stroke="#000" stroke-opacity="0.3" stroke-width="1"/>
<polygon points="502.8,858.4 516.9,827.8 502.0,831.5 495.6,838.8 495.2,857.9" fill="#c0b25c" stroke="#000" stroke-opacity="0.3" stroke-width="1"/>
<polygon points="452.7,874.0 461.9,872.9 495.2,857.9 495.6,838.8 457.6,865.2 453.1,870.7" fill="#5a24c8" stroke="#000" stroke-opacity="0.3" stroke-width="1"/>
<polygon points="819.3,675.6 792.1,701.0 803.2,711.2 806.6,710.5 818.0,701.8 829.2,672.8" fill="#d862c8" stroke="#000" stroke-opacity="0.3" stroke-width="1"/>
<polygon points="464.4,529.1 452.6,540.2 453.6,542.1 454.3,542.5 484.4,538.2 501.3,517.8 486.2,513.3" fill="#ac48a2" stroke="#000" stroke-opacity="0.3" stroke-width="1"/>
<polygon points="764.8,799.0 764.9,782.4 761.7,783.1 755.5,787.6 755.0,792.0 759.4,801.5" fill="#d862c8" stroke="#000" stroke-opacity="0.3" stroke-width="1"/>
<polygon points="299.5,846.9 313.0,832.4 310.5,830.5 303.6,829.1 276.5,848.6 280.9,852.3 288.1,854.1" fill="#5a24c8" stroke="#000" stroke-opacity="0.3" stroke-width="1"/>
<polygon points="241.9,796.5 244.6,800.2 246.8,802.1 251.1,801.6 280.8,778.4 278.8,773.9 264.3,775.4" fill="#5a24c8" stroke="#000" stroke-opacity="0.3" stroke-width="1"/>
<polygon points="533.0,815.9 533.1,803.7 520.0,803.7 511.3,813.6 500.7,826.7 502.0,831.5 516.9,827.8 522.3,825.9" fill="#ac48a2" stroke="#000" stroke-opacity="0.3" stroke-width="1"/>
<polygon points="348.1,518.8 346.2,512.2 339.8,516.7 344.8,521.7" fill="#5a24c8" stroke="#000" stroke-opacity="0.3" stroke-width="1"/>
<polygon points="421.5,677.0 410.7,692.2 433.9,686.0 451.9,667.9 437.6,667.4" fill="#3686c8" stroke="#000" stroke-opacity="0.3" stroke-width="1"/>
<polygon points="430.6,742.4 431.8,731.3 420.9,738.2 415.3,748.0" fill="#3686c8" stroke="#000" stroke-opacity="0.3" stroke-width="1"/>
<polygon points="722.8,751.0 724.6,754.0 743.0,755.4 747.9,747.7" fill="#d862c8" stroke="#000" stroke-opacity="0.3" stroke-width="1"/>
<polygon points="871.7,667.2 873.3,665.5 873.2,665.2 870.0,663.0 871.0,667.4 871.3,667.4" fill="#d862c8" stroke="#000" stroke-opacity="0.3" stroke-width="1"/>
<polygon points="391.7,796.7 380.6,791.3 378.2,808.0" fill="#ac48a2" stroke="#000" stroke-opacity="0.3" stroke-width="1"/>
<polygon points="490.4,934.7 471.8,962.1 473.2,962.1 485.1,958.7 486.5,957.8 499.7,936.4 494.1,932.8" fill="#3686c8" stroke="#000" stroke-opacity="0.3" stroke-width="1"/>
<polygon points="357.9,941.4 374.9,934.6 385.1,927.5 378.3,907.1 361.5,913.3 346.9,927.6 349.0,937.5" fill="#d6745f" stroke="#000" stroke-opacity="0.3" stroke-width="1"/>
<polygon points="357.9,941.4 349.0,937.5 351.0,947.6" fill="#c0b25c" stroke="#000" stroke-opacity="0.3" stroke-width="1"/>
<polygon points="400.1,668.7 387.0,657.9 376.9,666.7 374.3,676.4 374.2,682.2 387.1,678.0" fill="#d6745f" stroke="#000" stroke-opacity="0.3" stroke-width="1"/>
<polygon points="581.9,873.2 573.0,898.0 592.4,887.6" fill="#3686c8" stroke="#000" stroke-opacity="0.3" stroke-width="1"/>
<polygon points="580.2,715.9 584.0,723.3 594.7,720.5 606.0,708.8 596.3,706.9" fill="#56ac92" stroke="#000" stroke-opacity="0.3" stroke-width="1"/>
<polygon points="488.6,902.5 475.7,927.1 508.9,909.4 496.7,896.2" fill="#d6745f" stroke="#000" stroke-opacity="0.3" stroke-width="1"/>
<polygon points="833.4,712.4 846.3,706.3 851.9,699.4 849.3,688.9 831.2,697.3" fill="#d862c8" stroke="#000" stroke-opacity="0.3" stroke-width="1"/>
<polygon points="378.2,552.1 377.2,551.9 353.8,565.8 354.0,567.5 356.7,573.0 374.6,560.3 378.2,556.1 378.5,555.2" fill="#3686c8" stroke="#000" stroke-opacity="0.3" stroke-width="1"/>
<polygon points="335.0,730.2 354.9,722.2 356.0,710.3 345.3,717.0 338.7,723.5" fill="#3686c8" stroke="#000" stroke-opacity="0.3" stroke-width="1"/>
<polygon points="548.4,935.8 540.7,944.0 540.6,951.1 547.1,950.9 549.3,949.5 569.3,931.1" fill="#5a24c8" stroke="#000" stroke-opacity="0.3" stroke-width="1"/>
<polygon points="435.9,909.5 423.8,918.0 417.9,930.4 427.1,926.7 432.1,922.7 440.2,911.9" fill="#c0b25c" stroke="#000" stroke-opacity="0.3" stroke-width="1"/>
<polygon points="264.3,775.4 246.4,777.2 238.3,791.4 241.9,796.5" fill="#d6745f" stroke="#000" stroke-opacity="0.3" stroke-width="1"/>
<polygon points="389.5,584.5 396.0,567.3 378.2,556.1 374.6,560.3 360.3,579.8 374.3,587.8 385.0,591.4" fill="#c0b25c" stroke="#000" stroke-opacity="0.3" stroke-width="1"/>
<polygon points="429.4,756.1 441.3,740.2 430.6,742.4 415.3,748.0 407.9,752.9 409.2,765.1 412.5,768.4" fill="#3686c8" stroke="#000" stroke-opacity="0.3" stroke-width="1"/>
<polygon points="341.8,680.8 326.3,678.5 325.6,679.2 304.0,687.2 302.1,705.9 318.6,700.6 340.1,682.6" fill="#56ac92" stroke="#000" stroke-opacity="0.3" stroke-width="1"/>
<polygon points="770.8,701.0 766.5,702.5 765.7,709.6 772.0,703.1" fill="#e8846c" stroke="#000" stroke-opacity="0.3" stroke-width="1"/>
<polygon points="719.1,744.6 722.1,749.6 743.6,732.6 758.5,717.1 747.7,717.3" fill="#e8846c" stroke="#000" stroke-opacity="0.3" stroke-width="1"/>
<polygon points="433.4,1042.2 422.3,1060.0 462.2,1034.5" fill="#3686c8" stroke="#000" stroke-opacity="0.3" stroke-width="1"/>
<polygon points="305.9,783.2 324.2,773.6 324.2,772.7 312.1,760.4 293.1,778.1 291.2,787.2 294.5,787.3" fill="#56ac92" stroke="#000" stroke-opacity="0.3" stroke-width="1"/>
<polygon points="280.8,826.1 264.6,836.6 268.7,842.2 274.6,847.1" fill="#c0b25c" stroke="#000" stroke-opacity="0.3" stroke-width="1"/>
<polygon points="394.1,704.8 410.7,692.2 421.5,677.0 412.9,674.3 403.8,679.8" fill="#c0b25c" stroke="#000" stroke-opacity="0.3" stroke-width="1"/>
<polygon points="503.5,1043.5 504.6,1042.0 507.1,1025.7 476.5,1051.8" fill="#c0b25c" stroke="#000" stroke-opacity="0.3" stroke-width="1"/>
<polygon points="827.1,778.4 824.6,779.3 820.4,786.4 823.0,786.4 827.2,778.4" fill="#4296dc" stroke="#000" stroke-opacity="0.3" stroke-width="1"/>
<polygon points="473.6,1053.9 458.1,1052.2 415.4,1076.4 410.2,1082.6 412.5,1090.1 440.2,1087.8 452.7,1082.3 453.5,1081.9 459.2,1077.3 463.7,1072.9" fill="#56ac92" stroke="#000" stroke-opacity="0.3" stroke-width="1"/>
<polygon points="680.4,795.5 685.6,806.8 698.1,799.2 696.3,794.3 698.4,782.1 691.9,772.4" fill="#5a24c8" stroke="#000" stroke-opacity="0.3" stroke-width="1"/>
<polygon points="355.8,653.8 362.7,648.6 367.1,633.1 362.2,638.6 350.0,652.8 346.7,656.3" fill="#ac48a2" stroke="#000" stroke-opacity="0.3" stroke-width="1"/>
<polygon points="584.3,820.4 591.7,821.0 594.6,819.6 626.2,793.9 617.8,788.1 603.1,790.1" fill="#5a24c8" stroke="#000" stroke-opacity="0.3" stroke-width="1"/>
<polygon points="770.8,701.0 774.6,696.1 767.0,697.0 766.5,702.5" fill="#6a2ee0" stroke="#000" stroke-opacity="0.3" stroke-width="1"/>
<polygon points="545.3,729.3 543.2,729.4 541.8,731.9" fill="#c0b25c" stroke="#000" stroke-opacity="0.3" stroke-width="1"/>
<polygon points="483.4,805.7 491.5,804.7 495.9,802.5 512.6,768.5 502.2,771.1" fill="#ac48a2" stroke="#000" stroke-opacity="0.3" stroke-width="1"/>
<polygon points="370.6,968.8 370.3,968.3 362.7,970.2 361.2,972.4 366.7,985.2" fill="#3686c8" stroke="#000" stroke-opacity="0.3" stroke-width="1"/>
<polygon points="684.1,808.0 650.1,817.3 643.4,820.3 637.5,824.5 650.9,842.4 664.6,838.6" fill="#d6745f" stroke="#000" stroke-opacity="0.3" stroke-width="1"/>
<polygon points="688.6,715.3 682.4,716.8 682.1,725.3 664.8,728.7 660.4,737.0 664.2,737.1 673.9,733.2 692.0,720.9 692.8,717.9" fill="#c0b25c" stroke="#000" stroke-opacity="0.3" stroke-width="1"/>
<polygon points="503.1,678.4 482.1,704.9 486.6,707.8 508.3,702.2 521.8,689.6 525.4,685.9 523.0,683.9 516.8,680.0" fill="#5a24c8" stroke="#000" stroke-opacity="0.3" stroke-width="1"/>
<polygon points="469.0,758.7 497.0,756.0 501.9,723.6 501.4,723.5 468.8,757.8" fill="#d6745f" stroke="#000" stroke-opacity="0.3" stroke-width="1"/>
<polygon points="775.3,756.6 772.7,752.5 771.0,752.7 765.1,757.0 774.3,757.7" fill="#d8cc6c" stroke="#000" stroke-opacity="0.3" stroke-width="1"/>
<polygon points="456.9,665.6 461.3,669.4 497.4,653.2 489.7,644.6 460.8,661.7" fill="#56ac92" stroke="#000" stroke-opacity="0.3" stroke-width="1"/>
<polygon points="543.2,729.4 532.9,722.9 522.1,738.7 535.4,739.5 541.8,731.9" fill="#d6745f" stroke="#000" stroke-opacity="0.3" stroke-width="1"/>
<polygon points="546.8,742.1 546.2,749.1 584.0,723.3 580.2,715.9 580.1,715.8 556.8,727.5" fill="#5a24c8" stroke="#000" stroke-opacity="0.3" stroke-width="1"/>
<polygon points="461.2,901.5 461.2,900.2 449.2,896.6 440.9,898.4 435.9,909.5 440.2,911.9 458.4,904.8" fill="#3686c8" stroke="#000" stroke-opacity="0.3" stroke-width="1"/>
<polygon points="452.8,610.1 458.3,614.2 472.9,607.1 471.8,597.9 490.1,587.8 490.1,583.4 455.0,603.0" fill="#d6745f" stroke="#000" stroke-opacity="0.3" stroke-width="1"/>
<polygon points="788.3,819.1 787.4,812.7 784.6,814.0 786.1,822.2" fill="#d8cc6c" stroke="#000" stroke-opacity="0.3" stroke-width="1"/>
<polygon points="520.7,801.9 568.4,763.2 560.1,762.2 511.0,793.3 507.0,798.0" fill="#ac48a2" stroke="#000" stroke-opacity="0.3" stroke-width="1"/>
<polygon points="463.7,1072.9 459.2,1077.3 486.5,1081.6 497.9,1073.3 497.9,1071.2 500.8,1059.7" fill="#3686c8" stroke="#000" stroke-opacity="0.3" stroke-width="1"/>
<polygon points="489.7,644.6 497.4,653.2 499.1,653.8 511.7,648.9 514.0,647.7 517.5,640.2 498.5,631.2" fill="#d6745f" stroke="#000" stroke-opacity="0.3" stroke-width="1"/>
<polygon points="415.3,748.0 420.9,738.2 419.4,733.2 400.5,741.4 400.7,754.8 407.9,752.9" fill="#56ac92" stroke="#000" stroke-opacity="0.3" stroke-width="1"/>
<polygon points="523.1,935.0 526.7,931.3 527.1,929.6 514.3,929.4 505.6,935.4 510.3,939.8" fill="#ac48a2" stroke="#000" stroke-opacity="0.3" stroke-width="1"/>
<polygon points="474.2,1016.2 476.4,1001.6 445.3,1028.5 445.3,1028.6 465.9,1025.7" fill="#c0b25c" stroke="#000" stroke-opacity="0.3" stroke-width="1"/>
<polygon points="457.6,919.2 445.7,933.6 458.1,943.4 475.7,927.1 488.6,902.5" fill="#56ac92" stroke="#000" stroke-opacity="0.3" stroke-width="1"/>
<polygon points="469.1,634.6 460.8,661.7 489.7,644.6 498.5,631.2 485.9,625.2" fill="#56ac92" stroke="#000" stroke-opacity="0.3" stroke-width="1"/>
<polygon points="379.4,790.6 380.6,791.3 391.7,796.7 404.1,791.7 412.8,777.1 410.2,771.8 381.8,787.6" fill="#ac48a2" stroke="#000" stroke-opacity="0.3" stroke-width="1"/>
<polygon points="519.1,862.0 518.2,869.6 530.1,869.4 576.2,848.0 576.7,847.4 552.2,835.7 536.9,843.7" fill="#d6745f" stroke="#000" stroke-opacity="0.3" stroke-width="1"/>
<polygon points="692.9,704.6 688.6,715.3 692.8,717.9 702.8,709.4 702.0,698.0 700.4,695.4" fill="#5a24c8" stroke="#000" stroke-opacity="0.3" stroke-width="1"/>
<polygon points="448.6,955.3 458.0,943.8 458.1,943.4 445.7,933.6 440.9,935.6 418.3,949.6 407.9,963.6" fill="#5a24c8" stroke="#000" stroke-opacity="0.3" stroke-width="1"/>
<polygon points="361.6,961.7 356.9,962.3 359.4,968.1" fill="#56ac92" stroke="#000" stroke-opacity="0.3" stroke-width="1"/>
<polygon points="494.8,982.7 504.2,992.0 505.5,978.2" fill="#5a24c8" stroke="#000" stroke-opacity="0.3" stroke-width="1"/>
<polygon points="499.4,757.8 499.6,757.3 497.0,756.0 469.0,758.7 461.2,769.5 477.3,769.5" fill="#56ac92" stroke="#000" stroke-opacity="0.3" stroke-width="1"/>
<polygon points="620.8,820.0 594.6,819.6 591.7,821.0 578.2,845.7 612.9,827.6 620.5,822.8" fill="#56ac92" stroke="#000" stroke-opacity="0.3" stroke-width="1"/>
<polygon points="348.6,824.8 331.2,839.1 331.0,840.4 350.3,836.6 353.2,826.0" fill="#ac48a2" stroke="#000" stroke-opacity="0.3" stroke-width="1"/>
<polygon points="458.3,614.2 452.8,610.1 425.9,624.9 421.2,645.3 424.2,644.7 448.8,630.9" fill="#ac48a2" stroke="#000" stroke-opacity="0.3" stroke-width="1"/>
<polygon points="772.0,703.1 765.7,709.6 765.0,717.0 758.5,717.1 743.6,732.6 778.3,712.0 784.8,704.6" fill="#4296dc" stroke="#000" stroke-opacity="0.3" stroke-width="1"/>
<polygon points="771.0,752.7 756.3,745.4 747.9,747.7 743.0,755.4 765.1,757.0" fill="#d862c8" stroke="#000" stroke-opacity="0.3" stroke-width="1"/>
<polygon points="511.0,793.3 560.1,762.2 541.7,755.7 528.0,763.3" fill="#3686c8" stroke="#000" stroke-opacity="0.3" stroke-width="1"/>
<polygon points="495.6,838.8 502.0,831.5 500.7,826.7 476.4,831.7 461.1,840.4 457.6,865.2" fill="#3686c8" stroke="#000" stroke-opacity="0.3" stroke-width="1"/>
<polygon points="391.5,499.2 399.5,494.3 394.7,488.3 378.4,487.3 362.0,491.6 379.2,503.9 380.9,504.0" fill="#d6745f" stroke="#000" stroke-opacity="0.3" stroke-width="1"/>
<polygon points="331.7,772.3 361.0,762.8 371.0,751.4 364.4,740.6 342.0,757.1" fill="#ac48a2" stroke="#000" stroke-opacity="0.3" stroke-width="1"/>
<polygon points="419.3,569.5 413.8,560.1 396.0,567.3 389.5,584.5" fill="#ac48a2" stroke="#000" stroke-opacity="0.3" stroke-width="1"/>
<polygon points="401.5,944.5 418.3,949.6 440.9,935.6 427.1,926.7 417.9,930.4 402.5,941.3 402.5,941.3" fill="#56ac92" stroke="#000" stroke-opacity="0.3" stroke-width="1"/>
<polygon points="385.1,1022.6 385.7,1023.7 387.1,1026.9 413.7,1007.2 413.3,1006.3 389.9,1008.0 388.2,1008.5" fill="#c0b25c" stroke="#000" stroke-opacity="0.3" stroke-width="1"/>
<polygon points="494.1,954.6 501.1,954.3 518.1,950.2 519.9,949.0 523.1,935.0 510.3,939.8" fill="#56ac92" stroke="#000" stroke-opacity="0.3" stroke-width="1"/>
<polygon points="346.3,818.3 326.3,827.0 331.2,839.1 348.6,824.8 349.2,822.8" fill="#56ac92" stroke="#000" stroke-opacity="0.3" stroke-width="1"/>
<polygon points="448.8,735.1 452.3,709.7 431.8,731.3 430.6,742.4 441.3,740.2" fill="#56ac92" stroke="#000" stroke-opacity="0.3" stroke-width="1"/>
<polygon points="787.0,760.6 787.0,758.4 775.3,756.6 774.3,757.7 784.0,758.4 778.4,761.7 767.0,775.0 758.3,781.3 761.7,783.1 764.9,782.4" fill="#d862c8" stroke="#000" stroke-opacity="0.3" stroke-width="1"/>
<polygon points="360.0,777.6 374.0,773.8 400.7,754.8 400.5,741.4 393.6,738.2 371.0,751.4 361.0,762.8" fill="#ac48a2" stroke="#000" stroke-opacity="0.3" stroke-width="1"/>
<polygon points="514.3,929.4 527.1,929.6 535.5,914.6 530.2,910.6" fill="#c0b25c" stroke="#000" stroke-opacity="0.3" stroke-width="1"/>
<polygon points="399.0,985.9 395.9,990.5 387.9,1008.6 388.2,1008.5 389.9,1008.0 410.4,989.4 419.2,976.9" fill="#5a24c8" stroke="#000" stroke-opacity="0.3" stroke-width="1"/>
<polygon points="346.2,512.2 360.8,492.0 343.9,496.4 331.7,508.6 339.8,516.7" fill="#d6745f" stroke="#000" stroke-opacity="0.3" stroke-width="1"/>
<polygon points="344.8,876.9 336.6,870.3 335.8,882.8 336.1,883.9" fill="#d6745f" stroke="#000" stroke-opacity="0.3" stroke-width="1"/>
<polygon points="585.7,781.5 586.7,780.0 586.7,780.0 583.5,781.9 556.6,801.2 543.3,818.1 555.9,815.2" fill="#5a24c8" stroke="#000" stroke-opacity="0.3" stroke-width="1"/>
<polygon points="307.4,796.9 323.3,793.2 330.9,772.7 329.5,773.1" fill="#5a24c8" stroke="#000" stroke-opacity="0.3" stroke-width="1"/>
<polygon points="378.8,837.6 426.9,806.2 427.6,805.4 390.3,811.4 376.5,821.5 370.4,831.2 376.4,836.8" fill="#56ac92" stroke="#000" stroke-opacity="0.3" stroke-width="1"/>
<polygon points="770.6,797.9 768.1,805.3 771.7,803.0 778.9,794.0" fill="#d8cc6c" stroke="#000" stroke-opacity="0.3" stroke-width="1"/>
<polygon points="823.2,779.6 813.4,778.0 780.8,793.2 784.6,814.0 787.4,812.7 805.1,796.3 807.5,786.4 815.9,786.4" fill="#d8cc6c" stroke="#000" stroke-opacity="0.3" stroke-width="1"/>
<polygon points="330.9,772.7 323.3,793.2 328.1,796.7 348.9,787.7 360.0,777.6 361.0,762.8 331.7,772.3" fill="#56ac92" stroke="#000" stroke-opacity="0.3" stroke-width="1"/>
<polygon points="633.7,760.3 646.6,761.3 648.0,760.8 664.2,737.1 660.4,737.0 647.2,742.3" fill="#5a24c8" stroke="#000" stroke-opacity="0.3" stroke-width="1"/>
<polygon points="485.5,564.2 474.9,575.9 490.1,576.3 490.1,562.1" fill="#ac48a2" stroke="#000" stroke-opacity="0.3" stroke-width="1"/>
<polygon points="518.8,647.0 514.0,647.7 511.7,648.9 492.5,680.0 502.5,677.8 505.8,674.4 506.8,672.9 504.3,671.0 518.3,649.3" fill="#3686c8" stroke="#000" stroke-opacity="0.3" stroke-width="1"/>
<polygon points="747.9,747.7 756.3,745.4 772.1,730.4 778.3,712.0 743.6,732.6 722.1,749.6 722.8,751.0" fill="#e8846c" stroke="#000" stroke-opacity="0.3" stroke-width="1"/>
<polygon points="369.4,812.5 363.5,805.1 346.3,818.3 349.2,822.8" fill="#56ac92" stroke="#000" stroke-opacity="0.3" stroke-width="1"/>
<polygon points="410.2,771.8 412.8,777.1 439.0,768.5 442.5,765.8 448.7,760.4 449.1,758.5 429.4,756.1 412.5,768.4" fill="#ac48a2" stroke="#000" stroke-opacity="0.3" stroke-width="1"/>
<polygon points="787.0,760.6 788.7,763.5 814.6,766.5 826.0,750.8 825.8,748.6 805.4,747.2 787.0,758.4" fill="#72c8ac" stroke="#000" stroke-opacity="0.3" stroke-width="1"/>
<polygon points="597.8,893.3 628.2,883.1 630.5,877.0 620.1,877.1 601.0,883.3 597.9,886.1" fill="#c0b25c" stroke="#000" stroke-opacity="0.3" stroke-width="1"/>
<polygon points="871.7,667.2 874.3,668.3 873.3,665.5" fill="#4296dc" stroke="#000" stroke-opacity="0.3" stroke-width="1"/>
<polygon points="449.1,758.5 464.4,738.3 455.8,733.3 448.8,735.1 441.3,740.2 429.4,756.1" fill="#5a24c8" stroke="#000" stroke-opacity="0.3" stroke-width="1"/>
<polygon points="573.0,898.0 581.9,873.2 579.0,867.7 559.5,882.0 565.5,902.3" fill="#56ac92" stroke="#000" stroke-opacity="0.3" stroke-width="1"/>
<polygon points="532.9,722.9 532.9,722.8 515.0,720.5 501.9,723.6 497.0,756.0 499.6,757.3 522.1,738.7" fill="#c0b25c" stroke="#000" stroke-opacity="0.3" stroke-width="1"/>
<polygon points="456.0,1123.7 471.9,1104.7 470.8,1101.1 455.1,1100.5 453.3,1102.0 432.1,1131.7 434.1,1134.4" fill="#d6745f" stroke="#000" stroke-opacity="0.3" stroke-width="1"/>
<polygon points="424.7,791.3 439.0,768.5 412.8,777.1 404.1,791.7 406.2,794.1" fill="#d6745f" stroke="#000" stroke-opacity="0.3" stroke-width="1"/>
<polygon points="851.9,699.4 874.7,683.7 876.3,682.1 876.0,682.0 877.4,676.4 874.3,668.3 871.7,667.2 871.3,667.4 849.3,688.9" fill="#72c8ac" stroke="#000" stroke-opacity="0.3" stroke-width="1"/>
<polygon points="476.4,831.7 500.7,826.7 511.3,813.6 486.5,815.1" fill="#5a24c8" stroke="#000" stroke-opacity="0.3" stroke-width="1"/>
<polygon points="401.5,944.5 402.5,941.3 364.8,957.7 361.6,961.7 359.4,968.1 359.9,969.4 362.7,970.2 370.3,968.3 390.9,954.5" fill="#56ac92" stroke="#000" stroke-opacity="0.3" stroke-width="1"/>
<polygon points="319.7,702.6 318.6,700.6 302.1,705.9 278.0,724.1 272.4,730.0 276.9,736.6 282.0,740.6 310.7,727.7 319.8,718.7" fill="#5a24c8" stroke="#000" stroke-opacity="0.3" stroke-width="1"/>
<polygon points="374.2,682.2 374.3,676.4 348.2,689.8 347.3,696.8 350.8,699.8 363.6,694.0" fill="#d6745f" stroke="#000" stroke-opacity="0.3" stroke-width="1"/>
<polygon points="415.4,1076.4 419.0,1063.4 401.1,1058.7 406.6,1071.2 410.2,1082.6" fill="#5a24c8" stroke="#000" stroke-opacity="0.3" stroke-width="1"/>
<polygon points="390.2,925.4 402.9,915.9 414.7,904.9 403.5,886.2 378.3,907.1 385.1,927.5" fill="#5a24c8" stroke="#000" stroke-opacity="0.3" stroke-width="1"/>
<polygon points="692.8,717.9 692.0,720.9 705.7,727.5 713.0,718.0 711.0,718.0 703.0,712.0 702.8,709.4" fill="#56ac92" stroke="#000" stroke-opacity="0.3" stroke-width="1"/>
<polygon points="272.9,709.7 278.0,724.1 302.1,705.9 304.0,687.2 287.0,693.4 274.7,704.6" fill="#3686c8" stroke="#000" stroke-opacity="0.3" stroke-width="1"/>
<polygon points="397.6,682.0 405.4,667.6 400.9,668.2 400.1,668.7 387.1,678.0 394.3,683.5" fill="#56ac92" stroke="#000" stroke-opacity="0.3" stroke-width="1"/>
<polygon points="404.8,600.5 423.8,600.3 445.2,586.7 432.8,577.9 426.0,581.2 404.1,598.4" fill="#ac48a2" stroke="#000" stroke-opacity="0.3" stroke-width="1"/>
<polygon points="501.9,723.6 515.0,720.5 540.0,700.3 521.8,689.6 508.3,702.2 501.3,723.3 501.4,723.5" fill="#56ac92" stroke="#000" stroke-opacity="0.3" stroke-width="1"/>
<polygon points="404.8,600.5 397.2,618.9 399.4,626.0 408.7,623.6 420.5,612.8 423.8,600.3" fill="#56ac92" stroke="#000" stroke-opacity="0.3" stroke-width="1"/>
<polygon points="761.7,783.1 758.3,781.3 756.0,783.0 755.5,787.6" fill="#4296dc" stroke="#000" stroke-opacity="0.3" stroke-width="1"/>
<polygon points="497.4,653.2 461.3,669.4 464.9,687.7 499.1,653.8" fill="#ac48a2" stroke="#000" stroke-opacity="0.3" stroke-width="1"/>
<polygon points="377.2,843.3 378.8,837.6 376.4,836.8 337.1,861.1 336.6,870.3 344.8,876.9 368.9,864.7" fill="#d6745f" stroke="#000" stroke-opacity="0.3" stroke-width="1"/>
<polygon points="403.8,679.8 412.9,674.3 418.1,664.0 405.4,667.6 397.6,682.0" fill="#d6745f" stroke="#000" stroke-opacity="0.3" stroke-width="1"/>
<polygon points="535.4,739.5 546.8,742.1 556.8,727.5 556.8,725.7 545.3,729.3 541.8,731.9" fill="#c0b25c" stroke="#000" stroke-opacity="0.3" stroke-width="1"/>
<polygon points="421.4,571.3 421.7,569.5 419.3,569.5 389.5,584.5 385.0,591.4 389.3,592.8" fill="#d6745f" stroke="#000" stroke-opacity="0.3" stroke-width="1"/>
<polygon points="429.6,1112.6 424.6,1106.0 420.1,1109.7 426.2,1121.9 427.0,1121.0" fill="#d6745f" stroke="#000" stroke-opacity="0.3" stroke-width="1"/>
<polygon points="354.9,722.2 376.3,718.6 384.2,712.4 378.2,700.8 366.6,700.4 356.0,710.3" fill="#ac48a2" stroke="#000" stroke-opacity="0.3" stroke-width="1"/>
<polygon points="397.1,972.4 401.5,969.3 407.9,963.6 418.3,949.6 401.5,944.5 390.9,954.5 391.8,973.0" fill="#3686c8" stroke="#000" stroke-opacity="0.3" stroke-width="1"/>
<polygon points="328.2,810.1 347.1,794.3 348.9,787.7 328.1,796.7 314.9,807.8 322.9,813.1" fill="#3686c8" stroke="#000" stroke-opacity="0.3" stroke-width="1"/>
<polygon points="543.5,698.2 540.0,700.3 515.0,720.5 532.9,722.8 561.6,705.8 567.4,700.8 547.3,696.4" fill="#5a24c8" stroke="#000" stroke-opacity="0.3" stroke-width="1"/>
<polygon points="819.3,675.6 829.2,672.8 833.6,670.4 839.2,664.8 834.0,663.8 820.0,669.4 813.6,672.9" fill="#6a2ee0" stroke="#000" stroke-opacity="0.3" stroke-width="1"/>
<polygon points="477.3,769.5 461.2,769.5 450.4,782.0 441.0,794.4" fill="#5a24c8" stroke="#000" stroke-opacity="0.3" stroke-width="1"/>
<polygon points="432.8,1110.1 452.7,1082.3 440.2,1087.8 424.6,1106.0 429.6,1112.6" fill="#5a24c8" stroke="#000" stroke-opacity="0.3" stroke-width="1"/>
<polygon points="482.1,704.9 503.1,678.4 502.5,677.8 492.5,680.0 462.3,692.4 452.5,701.3 452.5,702.1 454.0,705.6" fill="#3686c8" stroke="#000" stroke-opacity="0.3" stroke-width="1"/>
<polygon points="305.9,783.2 307.2,797.0 307.4,796.9 329.5,773.1 324.2,773.6" fill="#d6745f" stroke="#000" stroke-opacity="0.3" stroke-width="1"/>
<polygon points="594.7,720.5 599.0,731.8 623.8,717.4 607.0,709.0 606.0,708.8" fill="#5a24c8" stroke="#000" stroke-opacity="0.3" stroke-width="1"/>
<polygon points="672.1,778.3 665.6,789.8 668.4,798.6 680.4,795.5 691.9,772.4 690.3,770.0 694.2,765.4" fill="#ac48a2" stroke="#000" stroke-opacity="0.3" stroke-width="1"/>
<polygon points="455.1,1100.5 454.2,1097.2 432.8,1110.1 429.6,1112.6 427.0,1121.0 453.3,1102.0" fill="#56ac92" stroke="#000" stroke-opacity="0.3" stroke-width="1"/>
<polygon points="599.0,731.8 576.4,760.9 588.0,766.6 630.6,726.7 634.5,721.4 627.3,719.2 623.8,717.4" fill="#ac48a2" stroke="#000" stroke-opacity="0.3" stroke-width="1"/>
<polygon points="792.1,701.0 819.3,675.6 813.6,672.9 800.8,680.0 793.0,690.0 778.4,695.7 774.6,696.1 770.8,701.0 772.0,703.1 784.8,704.6" fill="#d8cc6c" stroke="#000" stroke-opacity="0.3" stroke-width="1"/>
<polygon points="581.4,865.4 599.9,856.7 629.8,827.5 620.5,822.8 612.9,827.6 580.9,861.3" fill="#d6745f" stroke="#000" stroke-opacity="0.3" stroke-width="1"/>
<polygon points="375.6,878.9 379.9,866.2 368.9,864.7 344.8,876.9 336.1,883.9 340.5,898.3 371.3,883.6" fill="#3686c8" stroke="#000" stroke-opacity="0.3" stroke-width="1"/>
<polygon points="618.9,860.0 624.8,856.3 637.3,824.6 629.8,827.5 599.9,856.7" fill="#d6745f" stroke="#000" stroke-opacity="0.3" stroke-width="1"/>
<polygon points="612.9,827.6 578.2,845.7 576.7,847.4 576.2,848.0 580.9,861.3" fill="#5a24c8" stroke="#000" stroke-opacity="0.3" stroke-width="1"/>
<polygon points="503.5,1043.5 476.5,1051.8 475.9,1052.2 473.6,1053.9 463.7,1072.9 500.8,1059.7 503.6,1048.4 504.3,1043.7" fill="#56ac92" stroke="#000" stroke-opacity="0.3" stroke-width="1"/>
<polygon points="407.9,752.9 400.7,754.8 374.0,773.8 377.2,776.4 409.2,765.1" fill="#56ac92" stroke="#000" stroke-opacity="0.3" stroke-width="1"/>
<polygon points="453.5,999.9 479.2,989.9 479.8,989.5 485.1,958.7 473.2,962.1" fill="#ac48a2" stroke="#000" stroke-opacity="0.3" stroke-width="1"/>
<polygon points="699.1,830.8 682.2,841.0 706.5,839.0 706.5,832.1" fill="#d6745f" stroke="#000" stroke-opacity="0.3" stroke-width="1"/>
<polygon points="388.2,1008.5 387.9,1008.6 380.2,1012.7 385.1,1022.6" fill="#5a24c8" stroke="#000" stroke-opacity="0.3" stroke-width="1"/>
<polygon points="821.5,721.5 833.4,712.4 831.2,697.3 831.1,697.3 818.0,701.8 806.6,710.5 805.4,725.7" fill="#d8cc6c" stroke="#000" stroke-opacity="0.3" stroke-width="1"/>
<polygon points="543.5,698.2 547.3,696.4 542.0,695.2" fill="#5a24c8" stroke="#000" stroke-opacity="0.3" stroke-width="1"/>
<polygon points="335.2,750.2 335.5,747.1 320.0,750.2 312.1,760.4 324.2,772.7" fill="#3686c8" stroke="#000" stroke-opacity="0.3" stroke-width="1"/>
<polygon points="576.2,848.0 530.1,869.4 544.3,889.5 559.5,882.0 579.0,867.7 581.4,865.4 580.9,861.3" fill="#d6745f" stroke="#000" stroke-opacity="0.3" stroke-width="1"/>
<polygon points="707.8,736.1 709.2,739.6 717.0,741.0 719.1,744.6 747.7,717.3 728.0,717.7 708.7,734.1" fill="#72c8ac" stroke="#000" stroke-opacity="0.3" stroke-width="1"/>
<polygon points="290.1,809.8 307.2,797.0 305.9,783.2 294.5,787.3" fill="#ac48a2" stroke="#000" stroke-opacity="0.3" stroke-width="1"/>
<polygon points="435.2,892.9 440.9,898.4 449.2,896.6 470.9,882.2 461.9,872.9 452.7,874.0" fill="#3686c8" stroke="#000" stroke-opacity="0.3" stroke-width="1"/>
<polygon points="401.2,854.2 437.9,843.4 438.1,843.3 453.4,821.7 422.2,826.3 408.9,842.5" fill="#3686c8" stroke="#000" stroke-opacity="0.3" stroke-width="1"/>
<polygon points="322.9,813.1 314.9,807.8 295.9,820.6 303.6,829.1 310.5,830.5" fill="#3686c8" stroke="#000" stroke-opacity="0.3" stroke-width="1"/>
<polygon points="514.0,647.7 518.8,647.0 520.2,646.3 522.6,642.6 517.5,640.2" fill="#5a24c8" stroke="#000" stroke-opacity="0.3" stroke-width="1"/>
<polygon points="383.4,530.3 371.8,546.9 377.2,551.9 378.2,552.1 426.9,516.0 426.4,510.8 410.9,502.7" fill="#c0b25c" stroke="#000" stroke-opacity="0.3" stroke-width="1"/>
<polygon points="560.4,907.7 535.5,914.6 527.1,929.6 526.7,931.3 556.8,920.5" fill="#c0b25c" stroke="#000" stroke-opacity="0.3" stroke-width="1"/>
<polygon points="449.2,896.6 461.2,900.2 473.4,882.3 470.9,882.2" fill="#5a24c8" stroke="#000" stroke-opacity="0.3" stroke-width="1"/>
<polygon points="630.6,726.7 588.0,766.6 588.4,767.3 632.2,741.5 637.3,734.0" fill="#c0b25c" stroke="#000" stroke-opacity="0.3" stroke-width="1"/>
<polygon points="404.6,884.8 417.2,875.4 437.9,843.4 401.2,854.2 379.9,866.2 375.6,878.9" fill="#3686c8" stroke="#000" stroke-opacity="0.3" stroke-width="1"/>
<polygon points="453.3,1102.0 427.0,1121.0 426.2,1121.9 429.4,1128.3 432.1,1131.7" fill="#5a24c8" stroke="#000" stroke-opacity="0.3" stroke-width="1"/>
<polygon points="373.1,996.9 395.9,990.5 399.0,985.9 395.1,976.4" fill="#3686c8" stroke="#000" stroke-opacity="0.3" stroke-width="1"/>
<polygon points="497.2,1007.5 486.3,1025.6 488.0,1025.8 501.1,1020.6 502.3,1016.6 497.6,1007.3" fill="#d6745f" stroke="#000" stroke-opacity="0.3" stroke-width="1"/>
<polygon points="420.3,662.0 418.1,664.0 412.9,674.3 421.5,677.0 437.6,667.4 442.4,653.0" fill="#ac48a2" stroke="#000" stroke-opacity="0.3" stroke-width="1"/>
<polygon points="407.0,1046.4 406.7,1040.1 394.9,1044.5 400.1,1056.4" fill="#56ac92" stroke="#000" stroke-opacity="0.3" stroke-width="1"/>
<polygon points="637.3,824.6 637.5,824.5 643.4,820.3 651.4,805.1 634.3,803.3 620.8,820.0 620.5,822.8 629.8,827.5" fill="#3686c8" stroke="#000" stroke-opacity="0.3" stroke-width="1"/>
<polygon points="440.2,911.9 432.1,922.7 456.0,914.0 458.4,904.8" fill="#ac48a2" stroke="#000" stroke-opacity="0.3" stroke-width="1"/>
<polygon points="665.6,789.8 672.1,778.3 647.8,785.4 642.3,789.1 634.3,803.3 651.4,805.1" fill="#d6745f" stroke="#000" stroke-opacity="0.3" stroke-width="1"/>
<polygon points="478.8,994.5 503.8,1000.4 503.6,998.9 504.2,992.0 494.8,982.7 486.1,985.7 484.4,986.7 479.8,989.5 479.2,989.9" fill="#d6745f" stroke="#000" stroke-opacity="0.3" stroke-width="1"/>
<polygon points="498.9,768.5 499.4,757.8 477.3,769.5 441.0,794.4 437.0,798.7 441.8,798.4" fill="#d6745f" stroke="#000" stroke-opacity="0.3" stroke-width="1"/>
<polygon points="511.3,813.6 520.0,803.7 520.7,801.9 507.0,798.0 495.9,802.5 491.5,804.7 486.5,815.1" fill="#56ac92" stroke="#000" stroke-opacity="0.3" stroke-width="1"/>
<polygon points="458.3,614.2 448.8,630.9 458.3,637.8 469.1,634.6 485.9,625.2 484.0,624.3 473.9,616.2 472.9,607.1" fill="#ac48a2" stroke="#000" stroke-opacity="0.3" stroke-width="1"/>
<polygon points="545.3,729.3 556.8,725.7 561.6,705.8 532.9,722.8 532.9,722.9 543.2,729.4" fill="#3686c8" stroke="#000" stroke-opacity="0.3" stroke-width="1"/>
<polygon points="458.6,816.2 483.4,805.7 502.2,771.1 502.0,771.1 459.0,806.8" fill="#5a24c8" stroke="#000" stroke-opacity="0.3" stroke-width="1"/>
<polygon points="486.1,985.7 494.8,982.7 505.5,978.2 505.5,978.0 524.2,966.2 540.6,951.1 540.7,944.0 519.9,949.0 518.1,950.2" fill="#56ac92" stroke="#000" stroke-opacity="0.3" stroke-width="1"/>
<polygon points="778.9,794.0 780.6,792.0 780.8,793.2 813.4,778.0 814.6,766.5 788.7,763.5 768.4,798.0 770.6,797.9" fill="#d8cc6c" stroke="#000" stroke-opacity="0.3" stroke-width="1"/>
<polygon points="348.8,675.0 376.9,666.7 387.0,657.9 387.2,657.7 378.0,642.3 362.7,648.6 355.8,653.8" fill="#c0b25c" stroke="#000" stroke-opacity="0.3" stroke-width="1"/>
<polygon points="377.2,843.3 368.9,864.7 379.9,866.2 401.2,854.2 408.9,842.5 405.8,833.5" fill="#5a24c8" stroke="#000" stroke-opacity="0.3" stroke-width="1"/>
<polygon points="461.1,840.4 476.4,831.7 486.5,815.1 491.5,804.7 483.4,805.7 458.6,816.2 453.4,821.7 438.1,843.3" fill="#d6745f" stroke="#000" stroke-opacity="0.3" stroke-width="1"/>
<polygon points="445.3,1028.6 445.3,1028.5 445.6,1005.2 443.2,1006.4 428.7,1038.5 433.6,1037.6" fill="#ac48a2" stroke="#000" stroke-opacity="0.3" stroke-width="1"/>
<polygon points="421.2,645.3 425.9,624.9 413.3,628.1 395.1,653.0 412.4,649.4" fill="#5a24c8" stroke="#000" stroke-opacity="0.3" stroke-width="1"/>
<polygon points="464.9,687.7 462.3,692.4 492.5,680.0 511.7,648.9 499.1,653.8" fill="#3686c8" stroke="#000" stroke-opacity="0.3" stroke-width="1"/>
<polygon points="620.1,877.1 629.7,867.3 616.6,864.2 601.0,883.3" fill="#5a24c8" stroke="#000" stroke-opacity="0.3" stroke-width="1"/>
<polygon points="391.8,973.0 390.9,954.5 370.3,968.3 370.6,968.8 390.3,973.6" fill="#d6745f" stroke="#000" stroke-opacity="0.3" stroke-width="1"/>
<polygon points="453.5,999.9 453.4,1000.0 445.6,1005.2 445.3,1028.5 476.4,1001.6 478.8,994.5 479.2,989.9" fill="#d6745f" stroke="#000" stroke-opacity="0.3" stroke-width="1"/>
<polygon points="637.3,734.0 632.2,741.5 644.4,739.2 655.7,727.6 647.9,725.4 646.4,725.7" fill="#5a24c8" stroke="#000" stroke-opacity="0.3" stroke-width="1"/>
<polygon points="363.5,805.1 365.5,801.6 347.6,801.1 327.2,824.4 325.3,827.0 326.3,827.0 346.3,818.3" fill="#ac48a2" stroke="#000" stroke-opacity="0.3" stroke-width="1"/>
<polygon points="362.7,970.2 359.9,969.4 361.2,972.4" fill="#3686c8" stroke="#000" stroke-opacity="0.3" stroke-width="1"/>
<polygon points="408.9,842.5 422.2,826.3 425.4,810.3 405.8,833.5" fill="#5a24c8" stroke="#000" stroke-opacity="0.3" stroke-width="1"/>
<polygon points="890.2,691.5 884.3,696.5 880.5,703.0 881.2,709.3 885.8,707.1 881.7,701.6 894.3,698.8 894.3,690.5" fill="#e8846c" stroke="#000" stroke-opacity="0.3" stroke-width="1"/>
<polygon points="463.3,1033.9 465.9,1025.7 445.3,1028.6 433.6,1037.6 433.4,1042.2 462.2,1034.5 463.3,1034.0" fill="#5a24c8" stroke="#000" stroke-opacity="0.3" stroke-width="1"/>
<polygon points="376.4,836.8 370.4,831.2 353.6,837.4 337.7,852.1 337.1,861.1" fill="#ac48a2" stroke="#000" stroke-opacity="0.3" stroke-width="1"/>
<polygon points="462.2,1034.5 422.3,1060.0 419.0,1063.4 415.4,1076.4 458.1,1052.2 463.3,1034.0" fill="#ac48a2" stroke="#000" stroke-opacity="0.3" stroke-width="1"/>
<polygon points="508.6,879.3 496.7,896.2 508.9,909.4 516.7,909.8 528.1,904.3 544.3,889.5 530.1,869.4 518.2,869.6" fill="#ac48a2" stroke="#000" stroke-opacity="0.3" stroke-width="1"/>
<polygon points="345.3,717.0 356.0,710.3 366.6,700.4 363.6,694.0 350.8,699.8 343.2,706.0" fill="#3686c8" stroke="#000" stroke-opacity="0.3" stroke-width="1"/>
<polygon points="378.2,808.0 380.6,791.3 379.4,790.6 365.5,801.6 363.5,805.1 369.4,812.5 369.5,812.5 373.3,812.3" fill="#3686c8" stroke="#000" stroke-opacity="0.3" stroke-width="1"/>
<polygon points="370.4,831.2 376.5,821.5 373.3,812.3 369.5,812.5 353.2,826.0 350.3,836.6 353.6,837.4" fill="#5a24c8" stroke="#000" stroke-opacity="0.3" stroke-width="1"/>
<polygon points="673.9,733.2 664.2,737.1 648.0,760.8 656.5,760.4 666.1,754.4" fill="#d6745f" stroke="#000" stroke-opacity="0.3" stroke-width="1"/>
<polygon points="417.2,875.4 453.1,870.7 457.6,865.2 461.1,840.4 438.1,843.3 437.9,843.4" fill="#d6745f" stroke="#000" stroke-opacity="0.3" stroke-width="1"/>
<polygon points="272.9,709.7 274.7,704.6 263.8,714.6" fill="#d6745f" stroke="#000" stroke-opacity="0.3" stroke-width="1"/>
<polygon points="421.4,1014.3 413.7,1007.2 387.1,1026.9 390.0,1033.4" fill="#56ac92" stroke="#000" stroke-opacity="0.3" stroke-width="1"/>
<polygon points="316.1,743.4 297.0,752.6 297.2,752.8 290.5,766.1 319.9,750.0 319.1,743.5" fill="#c0b25c" stroke="#000" stroke-opacity="0.3" stroke-width="1"/>
<polygon points="359.9,897.8 356.9,902.7 361.5,913.3 378.3,907.1 403.5,886.2 404.6,884.8 375.6,878.9 371.3,883.6" fill="#56ac92" stroke="#000" stroke-opacity="0.3" stroke-width="1"/>
<polygon points="479.8,989.5 484.4,986.7 501.1,954.3 494.1,954.6 486.5,957.8 485.1,958.7" fill="#56ac92" stroke="#000" stroke-opacity="0.3" stroke-width="1"/>
<polygon points="426.9,516.0 378.2,552.1 378.5,555.2 442.8,534.4 446.8,523.5 444.8,518.4 441.4,518.7 432.2,513.9" fill="#d6745f" stroke="#000" stroke-opacity="0.3" stroke-width="1"/>
<polygon points="352.1,518.4 348.1,518.8 344.8,521.7 349.9,526.8" fill="#ac48a2" stroke="#000" stroke-opacity="0.3" stroke-width="1"/>
<polygon points="850.1,708.2 825.8,731.9 831.7,731.0 846.3,721.7 850.8,708.5" fill="#6a2ee0" stroke="#000" stroke-opacity="0.3" stroke-width="1"/>
<polygon points="459.0,586.2 455.8,585.1 445.2,586.7 423.8,600.3 420.5,612.8 454.3,594.7" fill="#ac48a2" stroke="#000" stroke-opacity="0.3" stroke-width="1"/>
<polygon points="425.4,810.3 426.9,806.2 378.8,837.6 377.2,843.3 405.8,833.5" fill="#5a24c8" stroke="#000" stroke-opacity="0.3" stroke-width="1"/>
<polygon points="561.5,921.0 558.0,922.5 548.4,935.8 569.3,931.1 572.1,928.5 579.9,922.3" fill="#3686c8" stroke="#000" stroke-opacity="0.3" stroke-width="1"/>
<polygon points="283.7,823.6 295.9,820.6 314.9,807.8 328.1,796.7 323.3,793.2 307.4,796.9 307.2,797.0 290.1,809.8 284.0,817.1" fill="#ac48a2" stroke="#000" stroke-opacity="0.3" stroke-width="1"/>
<polygon points="357.9,941.4 351.0,947.6 351.4,949.5 356.9,962.3 361.6,961.7 364.8,957.7 374.9,934.6" fill="#d6745f" stroke="#000" stroke-opacity="0.3" stroke-width="1"/>
<polygon points="348.2,689.8 340.1,682.6 318.6,700.6 319.7,702.6 347.3,696.8" fill="#d6745f" stroke="#000" stroke-opacity="0.3" stroke-width="1"/>
<polygon points="555.9,815.2 543.3,818.1 528.5,828.8 537.0,842.7" fill="#ac48a2" stroke="#000" stroke-opacity="0.3" stroke-width="1"/>
<polygon points="263.2,806.9 251.1,801.6 246.8,802.1 246.3,802.7 248.4,805.6 262.5,808.2" fill="#3686c8" stroke="#000" stroke-opacity="0.3" stroke-width="1"/>
<polygon points="387.9,1008.6 395.9,990.5 373.1,996.9 372.5,997.4 380.2,1012.7" fill="#3686c8" stroke="#000" stroke-opacity="0.3" stroke-width="1"/>
<polygon points="579.0,867.7 581.9,873.2 592.4,887.6 597.9,886.1 601.0,883.3 616.6,864.2 618.9,860.0 599.9,856.7 581.4,865.4" fill="#3686c8" stroke="#000" stroke-opacity="0.3" stroke-width="1"/>
<polygon points="461.9,872.9 470.9,882.2 473.4,882.3 516.7,862.3 502.8,858.4 495.2,857.9" fill="#3686c8" stroke="#000" stroke-opacity="0.3" stroke-width="1"/>
<polygon points="576.7,847.4 578.2,845.7 591.7,821.0 584.3,820.4 567.8,826.3 552.2,835.7" fill="#d6745f" stroke="#000" stroke-opacity="0.3" stroke-width="1"/>
<polygon points="389.9,1008.0 413.3,1006.3 427.9,990.0 420.1,986.5 410.4,989.4" fill="#ac48a2" stroke="#000" stroke-opacity="0.3" stroke-width="1"/>
<polygon points="692.2,691.8 688.0,692.0 685.3,696.4" fill="#5a24c8" stroke="#000" stroke-opacity="0.3" stroke-width="1"/>
<polygon points="313.0,832.4 325.3,827.0 327.2,824.4 328.2,810.1 322.9,813.1 310.5,830.5" fill="#d6745f" stroke="#000" stroke-opacity="0.3" stroke-width="1"/>
<polygon points="404.1,598.4 426.0,581.2 421.4,571.3 389.3,592.8 392.6,593.9 382.1,603.1" fill="#56ac92" stroke="#000" stroke-opacity="0.3" stroke-width="1"/>
<polygon points="395.1,976.4 399.0,985.9 419.2,976.9 424.1,973.1 401.5,969.3 397.1,972.4" fill="#3686c8" stroke="#000" stroke-opacity="0.3" stroke-width="1"/>
<polygon points="433.5,800.3 437.0,798.7 441.0,794.4 450.4,782.0 442.5,765.8 439.0,768.5 424.7,791.3" fill="#56ac92" stroke="#000" stroke-opacity="0.3" stroke-width="1"/>
<polygon points="788.3,819.1 786.1,822.2 787.3,829.0 791.5,830.7 796.8,827.1 799.6,818.4 799.2,817.0" fill="#d862c8" stroke="#000" stroke-opacity="0.3" stroke-width="1"/>
<polygon points="600.7,903.7 597.0,904.3 588.2,915.7 592.8,912.1 601.1,903.8" fill="#ac48a2" stroke="#000" stroke-opacity="0.3" stroke-width="1"/>
<polygon points="508.3,702.2 486.6,707.8 455.8,733.3 464.4,738.3 501.3,723.3" fill="#3686c8" stroke="#000" stroke-opacity="0.3" stroke-width="1"/>
<polygon points="486.6,542.7 484.4,538.2 454.3,542.5 438.8,572.7 463.8,561.6 486.4,543.1" fill="#5a24c8" stroke="#000" stroke-opacity="0.3" stroke-width="1"/>
<polygon points="406.2,794.1 404.1,791.7 391.7,796.7 378.2,808.0 373.3,812.3 376.5,821.5 390.3,811.4" fill="#ac48a2" stroke="#000" stroke-opacity="0.3" stroke-width="1"/>
<polygon points="890.2,691.5 894.3,690.5 894.3,686.2 893.5,686.0" fill="#e8846c" stroke="#000" stroke-opacity="0.3" stroke-width="1"/>
<polygon points="319.8,718.7 310.7,727.7 316.1,743.4 319.1,743.5 335.0,730.2 338.7,723.5 328.7,714.9" fill="#d6745f" stroke="#000" stroke-opacity="0.3" stroke-width="1"/>
<polygon points="335.0,730.2 319.1,743.5 319.9,750.0 320.0,750.2 335.5,747.1 364.6,731.9 376.3,718.6 354.9,722.2" fill="#5a24c8" stroke="#000" stroke-opacity="0.3" stroke-width="1"/>
<polygon points="440.2,1087.8 412.5,1090.1 416.1,1101.7 420.1,1109.7 424.6,1106.0" fill="#ac48a2" stroke="#000" stroke-opacity="0.3" stroke-width="1"/>
<polygon points="406.7,1040.1 424.8,1014.7 421.4,1014.3 390.0,1033.4 394.9,1044.5" fill="#d6745f" stroke="#000" stroke-opacity="0.3" stroke-width="1"/>
<polygon points="643.5,863.4 629.7,867.3 620.1,877.1 630.5,877.0" fill="#56ac92" stroke="#000" stroke-opacity="0.3" stroke-width="1"/>
<polygon points="502.3,1016.6 501.1,1020.6 506.9,1020.3 505.6,1011.9" fill="#c0b25c" stroke="#000" stroke-opacity="0.3" stroke-width="1"/>
<polygon points="692.9,704.6 700.4,695.4 698.0,691.5 692.2,691.8 685.3,696.4 683.0,700.0 682.8,706.2" fill="#56ac92" stroke="#000" stroke-opacity="0.3" stroke-width="1"/>
<polygon points="478.8,994.5 476.4,1001.6 474.2,1016.2 497.2,1007.5 497.6,1007.3 504.1,1002.2 503.8,1000.4" fill="#d6745f" stroke="#000" stroke-opacity="0.3" stroke-width="1"/>
<polygon points="583.5,781.9 533.1,803.7 533.0,815.9 556.6,801.2" fill="#ac48a2" stroke="#000" stroke-opacity="0.3" stroke-width="1"/>
<polygon points="851.8,721.6 852.6,722.7 859.2,715.6 878.8,710.0 880.5,710.4 881.2,709.3 880.5,703.0 866.6,709.0" fill="#d862c8" stroke="#000" stroke-opacity="0.3" stroke-width="1"/>
<polygon points="371.8,546.9 383.4,530.3 391.5,499.2 380.9,504.0 358.2,531.4 362.2,533.0 353.0,545.8" fill="#d6745f" stroke="#000" stroke-opacity="0.3" stroke-width="1"/>
<polygon points="423.8,918.0 435.9,909.5 440.9,898.4 435.2,892.9 414.7,904.9 402.9,915.9" fill="#5a24c8" stroke="#000" stroke-opacity="0.3" stroke-width="1"/>
<polygon points="561.6,705.8 556.8,725.7 556.8,727.5 580.1,715.8 584.8,704.6 567.4,700.8" fill="#3686c8" stroke="#000" stroke-opacity="0.3" stroke-width="1"/>
<polygon points="428.3,971.0 446.1,960.0 448.6,955.3 407.9,963.6 401.5,969.3 424.1,973.1" fill="#d6745f" stroke="#000" stroke-opacity="0.3" stroke-width="1"/>
<polygon points="325.3,827.0 313.0,832.4 299.5,846.9 309.8,854.8 325.6,842.2 327.6,843.5 331.0,840.4 331.2,839.1 326.3,827.0" fill="#5a24c8" stroke="#000" stroke-opacity="0.3" stroke-width="1"/>
<polygon points="369.4,812.5 349.2,822.8 348.6,824.8 353.2,826.0 369.5,812.5" fill="#5a24c8" stroke="#000" stroke-opacity="0.3" stroke-width="1"/>
<polygon points="278.0,724.1 272.9,709.7 263.8,714.6 262.6,715.7 272.4,730.0" fill="#c0b25c" stroke="#000" stroke-opacity="0.3" stroke-width="1"/>
<polygon points="426.0,581.2 432.8,577.9 438.8,572.7 454.3,542.5 453.6,542.1 421.7,569.5 421.4,571.3" fill="#ac48a2" stroke="#000" stroke-opacity="0.3" stroke-width="1"/>
<polygon points="486.6,542.7 500.4,537.5 508.4,526.9 504.3,518.7 501.3,517.8 484.4,538.2" fill="#d6745f" stroke="#000" stroke-opacity="0.3" stroke-width="1"/>
<polygon points="818.0,701.8 831.1,697.3 849.1,672.0 833.6,670.4 829.2,672.8" fill="#4296dc" stroke="#000" stroke-opacity="0.3" stroke-width="1"/>
<polygon points="486.3,1025.6 497.2,1007.5 474.2,1016.2 465.9,1025.7 463.3,1033.9" fill="#3686c8" stroke="#000" stroke-opacity="0.3" stroke-width="1"/>
<polygon points="284.0,817.1 290.1,809.8 294.5,787.3 291.2,787.2 263.2,806.9 262.5,808.2 270.8,809.7 259.8,815.8" fill="#5a24c8" stroke="#000" stroke-opacity="0.3" stroke-width="1"/>
<polygon points="602.7,902.2 615.1,889.8 622.0,888.6 628.6,883.9 628.2,883.1 597.8,893.3 594.0,901.1 597.0,904.3 600.7,903.7" fill="#5a24c8" stroke="#000" stroke-opacity="0.3" stroke-width="1"/>
<polygon points="497.6,1007.3 502.3,1016.6 505.6,1011.9 504.1,1002.2" fill="#5a24c8" stroke="#000" stroke-opacity="0.3" stroke-width="1"/>
<polygon points="764.8,799.0 768.4,798.0 788.7,763.5 787.0,760.6 764.9,782.4" fill="#d862c8" stroke="#000" stroke-opacity="0.3" stroke-width="1"/>
<polygon points="377.2,551.9 371.8,546.9 353.0,545.8 352.0,547.2 353.8,565.8" fill="#3686c8" stroke="#000" stroke-opacity="0.3" stroke-width="1"/>
<polygon points="680.4,795.5 668.4,798.6 650.1,817.3 684.1,808.0 685.6,806.8" fill="#d6745f" stroke="#000" stroke-opacity="0.3" stroke-width="1"/>
<polygon points="831.7,738.4 825.8,748.6 826.0,750.8 833.8,746.4 840.0,736.0 843.2,732.6" fill="#4296dc" stroke="#000" stroke-opacity="0.3" stroke-width="1"/>
<polygon points="454.3,594.7 420.5,612.8 408.7,623.6 413.3,628.1 425.9,624.9 452.8,610.1 455.0,603.0" fill="#d6745f" stroke="#000" stroke-opacity="0.3" stroke-width="1"/>
<polygon points="501.1,954.3 484.4,986.7 486.1,985.7 518.1,950.2" fill="#d6745f" stroke="#000" stroke-opacity="0.3" stroke-width="1"/>
<polygon points="881.2,709.3 880.5,710.4 890.0,712.8 885.8,707.1" fill="#e8846c" stroke="#000" stroke-opacity="0.3" stroke-width="1"/>
<polygon points="448.7,760.4 468.8,757.8 501.4,723.5 501.3,723.3 464.4,738.3 449.1,758.5" fill="#ac48a2" stroke="#000" stroke-opacity="0.3" stroke-width="1"/>
<polygon points="435.2,892.9 452.7,874.0 453.1,870.7 417.2,875.4 404.6,884.8 403.5,886.2 414.7,904.9" fill="#ac48a2" stroke="#000" stroke-opacity="0.3" stroke-width="1"/>
<polygon points="447.9,972.6 427.9,990.0 413.3,1006.3 413.7,1007.2 421.4,1014.3 424.8,1014.7 443.2,1006.4 445.6,1005.2 453.4,1000.0" fill="#56ac92" stroke="#000" stroke-opacity="0.3" stroke-width="1"/>
<polygon points="634.3,803.3 642.3,789.1 626.2,793.9 594.6,819.6 620.8,820.0" fill="#d6745f" stroke="#000" stroke-opacity="0.3" stroke-width="1"/>
<polygon points="486.5,1081.6 459.2,1077.3 453.5,1081.9 454.2,1097.2 455.1,1100.5 470.8,1101.1" fill="#d6745f" stroke="#000" stroke-opacity="0.3" stroke-width="1"/>
<polygon points="402.5,941.3 417.9,930.4 423.8,918.0 402.9,915.9 390.2,925.4" fill="#56ac92" stroke="#000" stroke-opacity="0.3" stroke-width="1"/>
<polygon points="405.4,667.6 418.1,664.0 420.3,662.0 424.2,644.7 421.2,645.3 412.4,649.4 400.9,668.2" fill="#56ac92" stroke="#000" stroke-opacity="0.3" stroke-width="1"/>
<polygon points="303.6,829.1 295.9,820.6 283.7,823.6 280.8,826.1 274.6,847.1 276.5,848.6" fill="#56ac92" stroke="#000" stroke-opacity="0.3" stroke-width="1"/>
<polygon points="452.5,701.3 431.3,706.4 413.3,715.8 393.6,738.2 400.5,741.4 419.4,733.2 452.5,702.1" fill="#56ac92" stroke="#000" stroke-opacity="0.3" stroke-width="1"/>
<polygon points="540.6,951.1 524.2,966.2 526.5,964.7 547.1,950.9" fill="#56ac92" stroke="#000" stroke-opacity="0.3" stroke-width="1"/>
<polygon points="340.5,898.3 341.5,901.9 359.9,897.8 371.3,883.6" fill="#3686c8" stroke="#000" stroke-opacity="0.3" stroke-width="1"/>
<polygon points="413.3,628.1 408.7,623.6 399.4,626.0 378.0,642.3 387.2,657.7 395.1,653.0" fill="#c0b25c" stroke="#000" stroke-opacity="0.3" stroke-width="1"/>
<polygon points="637.3,824.6 624.8,856.3 650.9,842.4 637.5,824.5" fill="#d6745f" stroke="#000" stroke-opacity="0.3" stroke-width="1"/>
<polygon points="446.8,523.5 442.8,534.4 445.8,540.0 452.6,540.2 464.4,529.1 470.5,515.1 461.7,516.7 458.2,517.0" fill="#d6745f" stroke="#000" stroke-opacity="0.3" stroke-width="1"/>
<polygon points="787.4,812.7 788.3,819.1 799.2,817.0 800.3,816.0 800.8,814.4 805.1,796.3" fill="#d8cc6c" stroke="#000" stroke-opacity="0.3" stroke-width="1"/>
<polygon points="824.6,779.3 823.2,779.6 815.9,786.4 820.4,786.4" fill="#d8cc6c" stroke="#000" stroke-opacity="0.3" stroke-width="1"/>
<polygon points="540.0,700.3 543.5,698.2 542.0,695.2 540.0,694.8 525.7,685.7 525.4,685.9 521.8,689.6" fill="#d6745f" stroke="#000" stroke-opacity="0.3" stroke-width="1"/>
<polygon points="630.6,726.7 637.3,734.0 646.4,725.7 646.4,725.0 634.5,721.4" fill="#3686c8" stroke="#000" stroke-opacity="0.3" stroke-width="1"/>
<polygon points="505.8,674.4 502.5,677.8 503.1,678.4 516.8,680.0 512.4,677.2 507.4,673.3" fill="#ac48a2" stroke="#000" stroke-opacity="0.3" stroke-width="1"/>
<polygon points="447.0,1138.0 438.0,1118.0 428.0,1096.0 418.0,1068.0 399.0,1030.0 382.0,1000.0 366.0,968.0 356.0,935.0 350.0,882.0 337.0,880.0 335.8,882.8 341.9,903.1 351.4,949.5 368.5,989.4 385.7,1023.7 406.6,1071.2 416.1,1101.7 429.4,1128.3 442.7,1145.4" fill="#d24cc4"/>
<g clip-path="url(#indm)"><rect x="233" y="482" width="666" height="668" fill="url(#tex)"/></g>
<g clip-path="url(#indn)"><rect x="700" y="640" width="200" height="200" fill="url(#tex2)"/></g>
<path d="M797,1020 L794,1035 L791,1055 L787,1080" stroke="#a040a0" stroke-width="3" fill="none" opacity="0.8" stroke-dasharray="4 2"/>
</svg>
<svg class="a" style="left:0;top:0" width="1892" height="1428">
<defs><linearGradient id="lg" x1="0" y1="0" x2="0" y2="1"><stop offset="0" stop-color="#9db52a"/><stop offset="1" stop-color="#5c9b3a"/></linearGradient><clipPath id="lic"><rect x="756.5" y="1127.3" width="122.2" height="65.1"/></clipPath></defs>
<g clip-path="url(#lic)">
<rect x="756.5" y="1127.3" width="122.2" height="65.1" fill="#000"/>
<rect x="745" y="1128" width="140" height="56.3" fill="url(#lg)"/>
<rect x="745" y="1130.5" width="67" height="51.5" fill="#000"/>
<circle cx="794" cy="1155.5" r="24" fill="#8aae2e"/><circle cx="789" cy="1155" r="14.5" fill="#000"/>
<path d="M781,1152 L787,1151 L813,1177 L806,1182 Z" fill="#000"/>
<path d="M782,1152 L786,1152 L791,1158 L786,1161 Z" fill="#f08a20"/><path d="M786,1161 L791,1158 L795,1162 L790,1165 Z" fill="#f8e860"/><path d="M790,1165 L795,1162 L810,1177 L806,1181 Z" fill="#7ab040"/>
<rect x="745" y="1181" width="140" height="3.3" fill="#5c9b3a"/>
<text x="826" y="1142" font-family="Liberation Sans" font-weight="bold" font-size="17" fill="#000">made</text>
<text x="838" y="1159.5" font-family="Liberation Sans" font-weight="bold" font-size="17" fill="#000">with</text>
<text x="814" y="1182" font-family="Liberation Sans" font-weight="bold" font-size="25" fill="#000">QGIS</text>
<rect x="745" y="1147.5" width="32" height="2.5" fill="#7aa838"/><rect x="745" y="1170.3" width="32" height="2.5" fill="#6aa038"/><rect x="858" y="1147.5" width="30" height="2.5" fill="#7aa838"/><rect x="858" y="1170.3" width="30" height="2.5" fill="#6aa038"/>
</g>
<rect x="757" y="1127.8" width="121.2" height="64.1" fill="none" stroke="#5a0030" stroke-width="1.2"/>
<rect x="757" y="1127.8" width="121.2" height="64.1" fill="none" stroke="#30a0f0" stroke-width="1.2" stroke-dasharray="3 3"/>
<rect x="757.1" y="1127.9" width="18.7" height="18.7" fill="#fff" stroke="#3a9ae8" stroke-width="1.2"/>
<rect x="808.1" y="1127.9" width="18.9" height="18.7" fill="#fff" stroke="#3a9ae8" stroke-width="1.2"/>
<rect x="859.2" y="1127.9" width="18.9" height="18.7" fill="#fff" stroke="#3a9ae8" stroke-width="1.2"/>
<rect x="757.1" y="1151.0" width="18.7" height="18.7" fill="#fff" stroke="#3a9ae8" stroke-width="1.2"/>
<rect x="859.2" y="1151.0" width="18.9" height="18.7" fill="#fff" stroke="#3a9ae8" stroke-width="1.2"/>
<rect x="757.1" y="1172.9" width="18.7" height="18.9" fill="#fff" stroke="#3a9ae8" stroke-width="1.2"/>
<rect x="808.1" y="1172.9" width="18.9" height="18.9" fill="#fff" stroke="#3a9ae8" stroke-width="1.2"/>
<rect x="859.2" y="1172.9" width="18.9" height="18.9" fill="#fff" stroke="#3a9ae8" stroke-width="1.2"/>
</svg>
<svg class="a" style="left:0;top:0" width="1892" height="1428">
<rect x="101.9" y="285" width="2" height="7" fill="#262626"/>
<rect x="118.4" y="281" width="2" height="11" fill="#262626"/>
<rect x="134.9" y="285" width="2" height="7" fill="#262626"/>
<rect x="151.5" y="285" width="2" height="7" fill="#262626"/>
<rect x="168.0" y="285" width="2" height="7" fill="#262626"/>
<rect x="184.5" y="285" width="2" height="7" fill="#262626"/>
<rect x="201.0" y="262" width="2" height="30" fill="#262626"/>
<rect x="217.5" y="285" width="2" height="7" fill="#262626"/>
<rect x="234.0" y="285" width="2" height="7" fill="#262626"/>
<rect x="250.5" y="285" width="2" height="7" fill="#262626"/>
<rect x="267.1" y="285" width="2" height="7" fill="#262626"/>
<rect x="283.6" y="281" width="2" height="11" fill="#262626"/>
<rect x="300.1" y="285" width="2" height="7" fill="#262626"/>
<rect x="316.6" y="285" width="2" height="7" fill="#262626"/>
<rect x="333.1" y="285" width="2" height="7" fill="#262626"/>
<rect x="349.6" y="285" width="2" height="7" fill="#262626"/>
<rect x="366.1" y="262" width="2" height="30" fill="#262626"/>
<rect x="382.7" y="285" width="2" height="7" fill="#262626"/>
<rect x="399.2" y="285" width="2" height="7" fill="#262626"/>
<rect x="415.7" y="285" width="2" height="7" fill="#262626"/>
<rect x="432.2" y="285" width="2" height="7" fill="#262626"/>
<rect x="448.7" y="281" width="2" height="11" fill="#262626"/>
<rect x="465.2" y="285" width="2" height="7" fill="#262626"/>
<rect x="481.8" y="285" width="2" height="7" fill="#262626"/>
<rect x="498.3" y="285" width="2" height="7" fill="#262626"/>
<rect x="514.8" y="285" width="2" height="7" fill="#262626"/>
<rect x="531.3" y="262" width="2" height="30" fill="#262626"/>
<rect x="547.8" y="285" width="2" height="7" fill="#262626"/>
<rect x="564.3" y="285" width="2" height="7" fill="#262626"/>
<rect x="580.8" y="285" width="2" height="7" fill="#262626"/>
<rect x="597.4" y="285" width="2" height="7" fill="#262626"/>
<rect x="613.9" y="281" width="2" height="11" fill="#262626"/>
<rect x="630.4" y="285" width="2" height="7" fill="#262626"/>
<rect x="646.9" y="285" width="2" height="7" fill="#262626"/>
<rect x="663.4" y="285" width="2" height="7" fill="#262626"/>
<rect x="679.9" y="285" width="2" height="7" fill="#262626"/>
<rect x="696.5" y="262" width="2" height="30" fill="#262626"/>
<rect x="713.0" y="285" width="2" height="7" fill="#262626"/>
<rect x="729.5" y="285" width="2" height="7" fill="#262626"/>
<rect x="746.0" y="285" width="2" height="7" fill="#262626"/>
<rect x="762.5" y="285" width="2" height="7" fill="#262626"/>
<rect x="779.0" y="281" width="2" height="11" fill="#262626"/>
<rect x="795.5" y="285" width="2" height="7" fill="#262626"/>
<rect x="812.1" y="285" width="2" height="7" fill="#262626"/>
<rect x="828.6" y="285" width="2" height="7" fill="#262626"/>
<rect x="845.1" y="285" width="2" height="7" fill="#262626"/>
<rect x="861.6" y="262" width="2" height="30" fill="#262626"/>
<rect x="878.1" y="285" width="2" height="7" fill="#262626"/>
<rect x="894.6" y="285" width="2" height="7" fill="#262626"/>
<rect x="911.1" y="285" width="2" height="7" fill="#262626"/>
<rect x="927.7" y="285" width="2" height="7" fill="#262626"/>
<rect x="944.2" y="281" width="2" height="11" fill="#262626"/>
<rect x="960.7" y="285" width="2" height="7" fill="#262626"/>
<rect x="977.2" y="285" width="2" height="7" fill="#262626"/>
<rect x="993.7" y="285" width="2" height="7" fill="#262626"/>
<rect x="1010.2" y="285" width="2" height="7" fill="#262626"/>
<rect x="97" y="304.0" width="7" height="2" fill="#262626"/>
<rect x="97" y="320.5" width="7" height="2" fill="#262626"/>
<rect x="74" y="337.0" width="30" height="2" fill="#262626"/>
<rect x="97" y="353.5" width="7" height="2" fill="#262626"/>
<rect x="97" y="370.0" width="7" height="2" fill="#262626"/>
<rect x="97" y="386.5" width="7" height="2" fill="#262626"/>
<rect x="97" y="403.1" width="7" height="2" fill="#262626"/>
<rect x="93" y="419.6" width="11" height="2" fill="#262626"/>
<rect x="97" y="436.1" width="7" height="2" fill="#262626"/>
<rect x="97" y="452.6" width="7" height="2" fill="#262626"/>
<rect x="97" y="469.1" width="7" height="2" fill="#262626"/>
<rect x="97" y="485.6" width="7" height="2" fill="#262626"/>
<rect x="74" y="502.1" width="30" height="2" fill="#262626"/>
<rect x="97" y="518.7" width="7" height="2" fill="#262626"/>
<rect x="97" y="535.2" width="7" height="2" fill="#262626"/>
<rect x="97" y="551.7" width="7" height="2" fill="#262626"/>
<rect x="97" y="568.2" width="7" height="2" fill="#262626"/>
<rect x="93" y="584.7" width="11" height="2" fill="#262626"/>
<rect x="97" y="601.2" width="7" height="2" fill="#262626"/>
<rect x="97" y="617.8" width="7" height="2" fill="#262626"/>
<rect x="97" y="634.3" width="7" height="2" fill="#262626"/>
<rect x="97" y="650.8" width="7" height="2" fill="#262626"/>
<rect x="74" y="667.3" width="30" height="2" fill="#262626"/>
<rect x="97" y="683.8" width="7" height="2" fill="#262626"/>
<rect x="97" y="700.3" width="7" height="2" fill="#262626"/>
<rect x="97" y="716.8" width="7" height="2" fill="#262626"/>
<rect x="97" y="733.4" width="7" height="2" fill="#262626"/>
<rect x="93" y="749.9" width="11" height="2" fill="#262626"/>
<rect x="97" y="766.4" width="7" height="2" fill="#262626"/>
<rect x="97" y="782.9" width="7" height="2" fill="#262626"/>
<rect x="97" y="799.4" width="7" height="2" fill="#262626"/>
<rect x="97" y="815.9" width="7" height="2" fill="#262626"/>
<rect x="74" y="832.5" width="30" height="2" fill="#262626"/>
<rect x="97" y="849.0" width="7" height="2" fill="#262626"/>
<rect x="97" y="865.5" width="7" height="2" fill="#262626"/>
<rect x="97" y="882.0" width="7" height="2" fill="#262626"/>
<rect x="97" y="898.5" width="7" height="2" fill="#262626"/>
<rect x="93" y="915.0" width="11" height="2" fill="#262626"/>
<rect x="97" y="931.5" width="7" height="2" fill="#262626"/>
<rect x="97" y="948.1" width="7" height="2" fill="#262626"/>
<rect x="97" y="964.6" width="7" height="2" fill="#262626"/>
<rect x="97" y="981.1" width="7" height="2" fill="#262626"/>
<rect x="74" y="997.6" width="30" height="2" fill="#262626"/>
<rect x="97" y="1014.1" width="7" height="2" fill="#262626"/>
<rect x="97" y="1030.6" width="7" height="2" fill="#262626"/>
<rect x="97" y="1047.1" width="7" height="2" fill="#262626"/>
<rect x="97" y="1063.7" width="7" height="2" fill="#262626"/>
<rect x="93" y="1080.2" width="11" height="2" fill="#262626"/>
<rect x="97" y="1096.7" width="7" height="2" fill="#262626"/>
<rect x="97" y="1113.2" width="7" height="2" fill="#262626"/>
<rect x="97" y="1129.7" width="7" height="2" fill="#262626"/>
<rect x="97" y="1146.2" width="7" height="2" fill="#262626"/>
<rect x="74" y="1162.8" width="30" height="2" fill="#262626"/>
<rect x="97" y="1179.3" width="7" height="2" fill="#262626"/>
<rect x="97" y="1195.8" width="7" height="2" fill="#262626"/>
<rect x="97" y="1212.3" width="7" height="2" fill="#262626"/>
<rect x="97" y="1228.8" width="7" height="2" fill="#262626"/>
<rect x="93" y="1245.3" width="11" height="2" fill="#262626"/>
<rect x="97" y="1261.8" width="7" height="2" fill="#262626"/>
<rect x="97" y="1278.4" width="7" height="2" fill="#262626"/>
<rect x="97" y="1294.9" width="7" height="2" fill="#262626"/>
<rect x="97" y="1311.4" width="7" height="2" fill="#262626"/>
<rect x="74" y="1327.9" width="30" height="2" fill="#262626"/>
<rect x="97" y="1344.4" width="7" height="2" fill="#262626"/>
<rect x="97" y="1360.9" width="7" height="2" fill="#262626"/>
<rect x="74" y="291" width="30" height="2" fill="#e01010"/>
<rect x="426" y="262" width="2" height="30" fill="#e01010"/>
</svg>
<div class="t" style="left:204.5px;top:264.6px;font-size:17px;color:#303030;font-weight:normal;">0</div>
<div class="t" style="left:369.6px;top:264.6px;font-size:17px;color:#303030;font-weight:normal;">50</div>
<div class="t" style="left:534.8px;top:264.6px;font-size:17px;color:#303030;font-weight:normal;">100</div>
<div class="t" style="left:700.0px;top:264.6px;font-size:17px;color:#303030;font-weight:normal;">150</div>
<div class="t" style="left:865.1px;top:264.6px;font-size:17px;color:#303030;font-weight:normal;">200</div>
<div class="t" style="left:80.3px;top:340.7px;width:9.4px;height:16px;font-size:17px;line-height:16px;color:#303030;transform:rotate(-90deg);transform-origin:50% 50%;text-align:center;">0</div>
<div class="t" style="left:75.5px;top:510.6px;width:18.9px;height:16px;font-size:17px;line-height:16px;color:#303030;transform:rotate(-90deg);transform-origin:50% 50%;text-align:center;">50</div>
<div class="t" style="left:70.8px;top:680.5px;width:28.3px;height:16px;font-size:17px;line-height:16px;color:#303030;transform:rotate(-90deg);transform-origin:50% 50%;text-align:center;">100</div>
<div class="t" style="left:70.8px;top:845.6px;width:28.3px;height:16px;font-size:17px;line-height:16px;color:#303030;transform:rotate(-90deg);transform-origin:50% 50%;text-align:center;">150</div>
<div class="t" style="left:70.8px;top:1010.8px;width:28.3px;height:16px;font-size:17px;line-height:16px;color:#303030;transform:rotate(-90deg);transform-origin:50% 50%;text-align:center;">200</div>
<div class="t" style="left:70.8px;top:1175.9px;width:28.3px;height:16px;font-size:17px;line-height:16px;color:#303030;transform:rotate(-90deg);transform-origin:50% 50%;text-align:center;">250</div>
<div class="t" style="left:70.8px;top:1341.1px;width:28.3px;height:16px;font-size:17px;line-height:16px;color:#303030;transform:rotate(-90deg);transform-origin:50% 50%;text-align:center;">300</div>
<div class="a" style="left:1027px;top:263px;width:242.5px;height:50px;border:2px solid #3c3c3c;border-bottom:none;box-sizing:border-box;"></div>
<div class="a" style="left:1268px;top:273px;width:117.5px;height:40px;border:2px solid #3c3c3c;border-bottom:none;border-left:none;box-sizing:border-box;"></div>
<div class="t" style="left:1055.5px;top:277.5px;font-size:27px;color:#111;font-weight:normal;">Item Properties</div>
<div class="t" style="left:1297.0px;top:282.0px;font-size:27px;color:#111;font-weight:normal;">Atlas</div>
<div class="t" style="left:1356.6px;top:320.8px;font-size:23.5px;color:#111;font-weight:normal;letter-spacing:0.05px;">Item Properties</div>
<div class="a" style="left:1871.5px;top:319.5px;width:20px;height:20px;border:2px solid #343434;border-radius:5px;box-sizing:border-box;background:#7a7a76;"></div>
<svg class="a" style="left:1871.5px;top:319.5px" width="20" height="20"><path d="M5,4.5 L14.5,14 M14.5,4.5 L5,14" stroke="#333" stroke-width="3" stroke-linecap="round"/></svg>
<div class="a" style="left:1030px;top:366px;width:862px;height:44px;background:#cbcbcb;"></div>
<div class="t" style="left:1043.4px;top:376.0px;font-size:27px;color:#111;font-weight:bold;">Picture</div>
<div class="a" style="left:1056.5px;top:440.5px;width:25px;height:25px;border-radius:50%;background:#bdbdbd;border:1px solid #353535;box-sizing:border-box;"></div>
<div class="t" style="left:1097.3px;top:441.5px;font-size:27px;color:#111;font-weight:normal;letter-spacing:-0.2px;">Raster image</div>
<div class="a" style="left:1270.5px;top:440.5px;width:25px;height:25px;border-radius:50%;background:#cdcdcd;border:1px solid #353535;box-sizing:border-box;"></div>
<div class="a" style="left:1276.8px;top:446.8px;width:12.4px;height:12.4px;border-radius:50%;background:#363636;"></div>
<div class="t" style="left:1311.0px;top:441.5px;font-size:27px;color:#111;font-weight:normal;letter-spacing:-0.55px;">SVG image</div>
<div class="a" style="left:1262px;top:423.5px;width:197px;height:65px;border:5.5px solid #f5306e;border-radius:3px;box-sizing:border-box;"></div>
<svg class="a" style="left:1058px;top:496px" width="26" height="20"><path d="M2,2 L22,2 L12,16 Z" fill="#565656" stroke="#1c1c1c" stroke-width="1.6" stroke-linejoin="round"/></svg>
<div class="t" style="left:1098.6px;top:492.0px;font-size:27px;color:#111;font-weight:bold;letter-spacing:-0.35px;">SVG browser</div>
<div class="t" style="left:1085.0px;top:549.9px;font-size:24px;color:#111;font-weight:normal;letter-spacing:0.9px;">SVG Groups</div>
<div class="a" style="left:1076.5px;top:582.5px;width:399px;height:430px;background:#b4b4b4;border:2px solid #363636;border-radius:4px;box-sizing:border-box;"></div>
<div class="a" style="left:1080px;top:837.7px;width:372.5px;height:36.2px;background:#efefef;"></div>
<svg class="a" style="left:0;top:0" width="1892" height="1428"><defs><clipPath id="lc"><rect x="1079" y="585" width="380" height="425"/></clipPath></defs><g clip-path="url(#lc)"><path d="M1168.8,593.0 L1183,593.0 L1186,597.2 L1195.2,597.2 L1195.2,617.4000000000001 L1168.8,617.4000000000001 Z" fill="#f0f0f0" stroke="#8c8c84" stroke-width="1.6"/><text x="1211" y="612.2" font-family="Liberation Sans" font-size="27" fill="#0e0e0e">crosses</text><path d="M1168.8,629.05 L1183,629.05 L1186,633.25 L1195.2,633.25 L1195.2,653.45 L1168.8,653.45 Z" fill="#f0f0f0" stroke="#8c8c84" stroke-width="1.6"/><text x="1211" y="648.2" font-family="Liberation Sans" font-size="27" fill="#0e0e0e">emergency</text><path d="M1168.8,665.1 L1183,665.1 L1186,669.3000000000001 L1195.2,669.3000000000001 L1195.2,689.5000000000001 L1168.8,689.5000000000001 Z" fill="#f0f0f0" stroke="#8c8c84" stroke-width="1.6"/><text x="1211" y="684.3" font-family="Liberation Sans" font-size="27" fill="#0e0e0e">entertainment</text><path d="M1168.8,701.15 L1183,701.15 L1186,705.35 L1195.2,705.35 L1195.2,725.5500000000001 L1168.8,725.5500000000001 Z" fill="#f0f0f0" stroke="#8c8c84" stroke-width="1.6"/><text x="1211" y="720.4" font-family="Liberation Sans" font-size="27" fill="#0e0e0e">food</text><path d="M1168.8,737.2 L1183,737.2 L1186,741.4000000000001 L1195.2,741.4000000000001 L1195.2,761.6000000000001 L1168.8,761.6000000000001 Z" fill="#f0f0f0" stroke="#8c8c84" stroke-width="1.6"/><text x="1211" y="756.4" font-family="Liberation Sans" font-size="27" fill="#0e0e0e">gpsicons</text><path d="M1168.8,773.25 L1183,773.25 L1186,777.45 L1195.2,777.45 L1195.2,797.6500000000001 L1168.8,797.6500000000001 Z" fill="#f0f0f0" stroke="#8c8c84" stroke-width="1.6"/><text x="1211" y="792.5" font-family="Liberation Sans" font-size="27" fill="#0e0e0e">health</text><path d="M1168.8,809.3 L1183,809.3 L1186,813.5 L1195.2,813.5 L1195.2,833.7 L1168.8,833.7 Z" fill="#f0f0f0" stroke="#8c8c84" stroke-width="1.6"/><text x="1211" y="828.5" font-family="Liberation Sans" font-size="27" fill="#0e0e0e">landmark</text><path d="M1168.8,845.3499999999999 L1183,845.3499999999999 L1186,849.55 L1195.2,849.55 L1195.2,869.75 L1168.8,869.75 Z" fill="#f0f0f0" stroke="#8c8c84" stroke-width="1.6"/><text x="1211" y="864.5" font-family="Liberation Sans" font-size="27" fill="#0e0e0e">logos</text><path d="M1168.8,881.4 L1183,881.4 L1186,885.6 L1195.2,885.6 L1195.2,905.8000000000001 L1168.8,905.8000000000001 Z" fill="#f0f0f0" stroke="#8c8c84" stroke-width="1.6"/><text x="1211" y="900.6" font-family="Liberation Sans" font-size="27" fill="#0e0e0e">money</text><path d="M1168.8,917.45 L1183,917.45 L1186,921.6500000000001 L1195.2,921.6500000000001 L1195.2,941.8500000000001 L1168.8,941.8500000000001 Z" fill="#f0f0f0" stroke="#8c8c84" stroke-width="1.6"/><text x="1211" y="936.7" font-family="Liberation Sans" font-size="27" fill="#0e0e0e">religion</text><path d="M1168.8,953.5 L1183,953.5 L1186,957.7 L1195.2,957.7 L1195.2,977.9000000000001 L1168.8,977.9000000000001 Z" fill="#f0f0f0" stroke="#8c8c84" stroke-width="1.6"/><text x="1211" y="972.7" font-family="Liberation Sans" font-size="27" fill="#0e0e0e">services</text><path d="M1168.8,989.55 L1183,989.55 L1186,993.75 L1195.2,993.75 L1195.2,1013.95 L1168.8,1013.95 Z" fill="#f0f0f0" stroke="#8c8c84" stroke-width="1.6"/><text x="1211" y="1008.8" font-family="Liberation Sans" font-size="27" fill="#0e0e0e">shopping</text></g></svg>
<div class="a" style="left:1456px;top:586px;width:16px;height:424px;background:#363636;border-radius:6px;"></div>
<div class="a" style="left:1458px;top:642px;width:12px;height:94px;background:#7c7c7c;border-radius:4px;"></div>
<div class="a" style="left:1150.5px;top:819px;width:173px;height:74px;border:5.5px solid #f5306e;border-radius:3px;box-sizing:border-box;"></div>
<svg class="a" style="left:1479px;top:762px" width="6" height="36"><rect x="1.5" y="2" width="3" height="3" fill="#a4a4a4"/><rect x="1.5" y="8" width="3" height="3" fill="#a4a4a4"/><rect x="1.5" y="14" width="3" height="3" fill="#a4a4a4"/><rect x="1.5" y="20" width="3" height="3" fill="#a4a4a4"/><rect x="1.5" y="26" width="3" height="3" fill="#a4a4a4"/><rect x="1.5" y="32" width="3" height="3" fill="#a4a4a4"/></svg>
<div class="t" style="left:1493.4px;top:549.9px;font-size:24px;color:#111;font-weight:normal;letter-spacing:0.9px;">SVG Images</div>
<div class="a" style="left:1485.2px;top:582.8px;width:430px;height:378px;background:#b3b3b3;border:2px solid #363636;border-radius:4px;box-sizing:border-box;"></div>
<div class="a" style="left:1485.2px;top:967px;width:430px;height:45.5px;background:#b3b3b3;border:2px solid #363636;border-radius:4px;box-sizing:border-box;"></div>
<svg class="a" style="left:1500px;top:976px" width="30" height="30"><circle cx="11" cy="11" r="8" fill="none" stroke="#8e8e8e" stroke-width="2.2"/><path d="M17,17 L24,24" stroke="#8e8e8e" stroke-width="2.8" stroke-linecap="round"/></svg>
<svg class="a" style="left:0;top:0" width="1892" height="1428">
<circle cx="1503.5" cy="599" r="6.5" fill="none" stroke="#1d5a5a" stroke-width="2" stroke-dasharray="5 2"/><circle cx="1503.5" cy="599" r="2.3" fill="#3a8a6a"/>
<text x="1515" y="604.5" font-family="Liberation Sans" font-weight="bold" font-size="11" fill="#56b08a" letter-spacing="-0.2">OS</text><text x="1529.5" y="604.5" font-family="Liberation Sans" font-weight="bold" font-size="11" fill="#1d4a5a" letter-spacing="-0.2">Geo</text>
<circle cx="1596" cy="617" r="21.5" fill="none" stroke="#5e9b3a" stroke-width="12"/>
<path d="M1588,620 L1598,610 L1626,636 L1626,648 L1613,648 Z" fill="#5e9b3a"/><path d="M1603,629 L1610,622 L1616,628 L1609,635 Z" fill="#b3b3b3"/>
<defs><linearGradient id="mg" x1="0" y1="0" x2="0" y2="1"><stop offset="0" stop-color="#8cb82a"/><stop offset="1" stop-color="#4e9a32"/></linearGradient></defs>
<rect x="1632" y="586" width="72" height="35.6" fill="#efefef"/>
<rect x="1638" y="590" width="2.2" height="26" fill="#7ab040"/>
<circle cx="1652" cy="603" r="9.5" fill="none" stroke="#68a832" stroke-width="5"/><circle cx="1652.5" cy="602.5" r="2.6" fill="#f08a28"/><circle cx="1655" cy="605" r="1.5" fill="#f0e060"/>
<path d="M1656,607 L1660,604 L1668,613 L1668,616 L1664,616 Z" fill="#5a9e38"/>
<rect x="1665" y="590" width="33" height="26" fill="url(#mg)"/>
<text x="1697" y="597.5" text-anchor="end" font-family="Liberation Sans" font-weight="bold" font-size="8" fill="#e6f0d0">made</text>
<text x="1697" y="605" text-anchor="end" font-family="Liberation Sans" font-weight="bold" font-size="8" fill="#e6f0d0">with</text>
<text x="1697" y="614.5" text-anchor="end" font-family="Liberation Sans" font-weight="bold" font-size="10" fill="#d8ecc0" letter-spacing="-0.3">QGIS</text>
<rect x="1710" y="590" width="60" height="26" fill="#c6c6c6"/><rect x="1710" y="590" width="2" height="26" fill="#d6d6d6"/>
<circle cx="1724" cy="603" r="9" fill="none" stroke="#d4d4d4" stroke-width="4.5"/>
<rect x="1737" y="590" width="33" height="26" fill="#d0d0d0"/>
<text x="1769" y="597.5" text-anchor="end" font-family="Liberation Sans" font-weight="bold" font-size="8" fill="#bcbcbc">made</text><text x="1769" y="605" text-anchor="end" font-family="Liberation Sans" font-weight="bold" font-size="8" fill="#bcbcbc">with</text><text x="1769" y="614.5" text-anchor="end" font-family="Liberation Sans" font-weight="bold" font-size="10" fill="#bcbcbc" letter-spacing="-0.3">QGIS</text>
<text x="1781" y="605" font-family="Liberation Sans" font-weight="bold" font-size="23" fill="#7aab3e" letter-spacing="0.5">QGIS</text>
<circle cx="1790" cy="597" r="2.5" fill="#f08030"/>
</svg>
<div class="a" style="left:1606.5px;top:564.5px;width:117.5px;height:76px;border:5.8px solid #f5306e;border-radius:3px;box-sizing:border-box;"></div>
<svg class="a" style="left:1058px;top:1058px" width="26" height="20"><path d="M2,2 L22,2 L12,16 Z" fill="#565656" stroke="#1c1c1c" stroke-width="1.6" stroke-linejoin="round"/></svg>
<div class="t" style="left:1098.8px;top:1054.3px;font-size:27px;color:#111;font-weight:bold;letter-spacing:0.2px;">Dynamic SVG parameters</div>
<div class="a" style="left:1074.5px;top:1103.3px;width:830px;height:84px;background:#b3b3b3;border:2px solid #363636;border-radius:4px;box-sizing:border-box;"></div>
<div class="a" style="left:1080px;top:1108.4px;width:812px;height:35px;background:#727272;border-bottom:2px solid #363636;box-sizing:border-box;"></div>
<div class="a" style="left:1164px;top:1109px;width:2px;height:33px;background:#3a3a3a;"></div>
<div class="t" style="left:1087.0px;top:1113.0px;font-size:22.5px;color:#111;font-weight:normal;">Name</div>
<div class="t" style="left:1172.7px;top:1113.0px;font-size:22.5px;color:#111;font-weight:normal;">Expression</div>
<div class="a" style="left:1055px;top:1285px;width:850px;height:45.5px;background:#b4b4b4;border:2px solid #363636;border-radius:4px;box-sizing:border-box;overflow:hidden;"></div>
<div class="a" style="left:1057px;top:1287px;width:835px;height:41px;overflow:hidden;"><div class="t" style="right:12px;top:8px;font-size:27px;letter-spacing:0.3px;color:#111;">Contents/MacOS/../Resources/svg//logos/qgis-logo-made-with-color.svg</div></div>
<div class="a" style="left:1028px;top:1356.5px;width:864px;height:14.5px;background:#363636;border-radius:4px 0 0 4px;"></div>
<div class="a" style="left:1028px;top:1356.5px;width:672px;height:14.5px;background:#767676;border:2px solid #3a3a3a;border-radius:5px;box-sizing:border-box;"></div>
<div class="t" style="left:799.0px;top:1392.8px;font-size:26px;color:#111;font-weight:normal;letter-spacing:0.75px;">x: 68 mm</div>
<div class="t" style="left:1011.0px;top:1392.8px;font-size:26px;color:#111;font-weight:normal;letter-spacing:0.75px;">y: 0 mm</div>
<div class="t" style="left:1223.5px;top:1392.8px;font-size:26px;color:#111;font-weight:normal;">page: 1</div>
<div class="a" style="left:1427px;top:1381.5px;width:240px;height:46px;background:#b9b9b9;border:2px solid #363636;border-radius:5px;box-sizing:border-box;"></div>
<div class="a" style="left:1637.5px;top:1384px;width:27px;height:41px;background:#3c3c3c;border-radius:0 3px 3px 0;"></div>
<svg class="a" style="left:1644px;top:1398px" width="14" height="12"><path d="M2,2 L12,2 L7,10 Z" fill="#d6d6d6"/></svg>
<div class="t" style="left:1437.0px;top:1391.0px;font-size:27px;color:#111;font-weight:normal;">66.4%</div>
<div class="a" style="left:1683.5px;top:1394px;width:195px;height:16.5px;background:#363636;border-radius:8px;"></div>
<div class="a" style="left:1684px;top:1393.5px;width:12px;height:17px;background:#9a9a9a;border:1.5px solid #333;border-radius:4px;box-sizing:border-box;"></div>
<div class="a" style="left:1690.5px;top:1393px;width:44px;height:18.5px;background:linear-gradient(#c8c8c8,#9c9c9c);border:1.5px solid #333;border-radius:5px;box-sizing:border-box;"></div>
<svg class="a" style="left:0;top:0" width="75" height="1428">
<rect x="25" y="270" width="18" height="2.4" rx="1" fill="#a9a9a9"/>
<path d="M21,300 C18,296 20,292 24,293 C26,294 27,297 27.5,300 L27.5,285 C27.5,280.5 33.5,280.5 33.5,285 L33.5,287.5 C33.5,283.5 39.5,283.5 39.5,287.5 L39.5,291 C39.5,287 45.5,287 45.5,291 L45.5,294 C45.5,290 52,290 52,294.5 L52,308 C52,314 50,320 48,327 L31,327 C30,322 28,318 26,314 C24,310 22,304 21,300 Z" fill="#b0b0b0" transform="translate(-1.8,1.8)"/>
<path d="M21,300 C18,296 20,292 24,293 C26,294 27,297 27.5,300 L27.5,285 C27.5,280.5 33.5,280.5 33.5,285 L33.5,287.5 C33.5,283.5 39.5,283.5 39.5,287.5 L39.5,291 C39.5,287 45.5,287 45.5,291 L45.5,294 C45.5,290 52,290 52,294.5 L52,308 C52,314 50,320 48,327 L31,327 C30,322 28,318 26,314 C24,310 22,304 21,300 Z" fill="#fff" stroke="#000" stroke-width="2" stroke-linejoin="round"/>
<path d="M33.5,286 L33.5,298.5 M39.5,289.5 L39.5,298.5 M45.5,292.5 L45.5,300.5 M27.5,299 L27.5,304" stroke="#000" stroke-width="1.8"/>
<rect x="12" y="353" width="22" height="24" fill="none" stroke="#111" stroke-width="2" stroke-dasharray="4 3"/>
<line x1="24" y1="382" x2="13" y2="395" stroke="#444" stroke-width="6.5" stroke-linecap="round"/><line x1="23" y1="383" x2="13.5" y2="394.5" stroke="#f0d040" stroke-width="3.2" stroke-linecap="round"/><circle cx="26" cy="381" r="2.6" fill="#111"/>
<circle cx="41" cy="366.5" r="15.5" fill="#d2d2d2" stroke="#666" stroke-width="2"/><path d="M30,367 A11,11 0 0 1 40,356" stroke="#f4f4f4" stroke-width="3" fill="none"/>
<rect x="3" y="411.5" width="64" height="63" rx="6" fill="none" stroke="#f2f2f2" stroke-width="2.4"/>
<rect x="16" y="424.5" width="4" height="4" fill="#e8e8e8"/>
<rect x="44" y="424.5" width="4" height="4" fill="#e8e8e8"/>
<rect x="16" y="452.5" width="4" height="4" fill="#e8e8e8"/>
<rect x="44" y="452.5" width="4" height="4" fill="#e8e8e8"/>
<path d="M21,422 L49,447 L37,448 L44,462 L39,465 L32,451 L24,459 Z" fill="#fff" stroke="#111" stroke-width="2.2" stroke-linejoin="round"/>
<rect x="19" y="491" width="35" height="39" fill="#ececec" stroke="#a8a8a8" stroke-width="1.5"/>
<path d="M15,493 C15,489 23,489 23,493 L23,526 L15,530 Z" fill="#dcdcdc" stroke="#a8a8a8" stroke-width="1.5"/><path d="M15,526 C15,532 24,532 25,527" fill="#cfcfcf" stroke="#a8a8a8" stroke-width="1.5"/>
<path d="M40,493 L50,503 L44,503 L44,511 L36,511 L36,503 L30,503 Z" fill="#6597d2" stroke="#3d6797" stroke-width="1.2"/>
<path d="M24,505 L24,517 L28,517 L28,521 L32,511 L28,501 L28,505 Z" fill="#6597d2" stroke="#3d6797" stroke-width="1.2" transform="rotate(180 28 511)"/>
<rect x="48" y="508" width="6" height="7" fill="#6597d2" stroke="#3d6797" stroke-width="1.2"/><rect x="36" y="522" width="8" height="7" fill="#6597d2" stroke="#3d6797" stroke-width="1.2"/>
<path d="M27,560 L51,571 M27,560 L17,594 M17,594 L40,582" stroke="#111" stroke-width="2.2" fill="none"/><path d="M17,594 L40,582" stroke="#111" stroke-width="2.2" stroke-dasharray="2.5 2.5"/>
<path d="M32,597 L46,576" stroke="#b88a10" stroke-width="7" stroke-linecap="round"/><path d="M33,596 L45,578" stroke="#f0c830" stroke-width="4"/>
<path d="M38,577 L52,592" stroke="#b07a10" stroke-width="6" stroke-linecap="round"/><path d="M35,574 L47,566 L49,569 L38,578 Z" fill="#d8d8d8" stroke="#777" stroke-width="1"/><line x1="45" y1="578" x2="55" y2="567" stroke="#ddd" stroke-width="1.2"/>
<circle cx="27" cy="560" r="4.8" fill="#3a8ef0" stroke="#1a5ab8" stroke-width="1"/><circle cx="51" cy="571" r="4.8" fill="#3a8ef0" stroke="#1a5ab8" stroke-width="1"/><circle cx="17" cy="594" r="4.8" fill="#3a8ef0" stroke="#1a5ab8" stroke-width="1"/>
<rect x="19" y="626" width="35" height="39" fill="#ececec" stroke="#a8a8a8" stroke-width="1.5"/><path d="M14,628 C14,624 22,624 22,628 L22,661 L14,665 Z" fill="#dcdcdc" stroke="#a8a8a8" stroke-width="1.5"/><path d="M14,661 C14,667 23,667 24,662" fill="#cfcfcf" stroke="#a8a8a8" stroke-width="1.5"/>
<rect x="39.7" y="651.5" width="18.5" height="18.5" rx="3.5" fill="#5e8e5a" stroke="#4e7a4a" stroke-width="1"/><rect x="40.7" y="652.5" width="16.5" height="8.25" rx="3" fill="#7aa476" opacity="0.6"/><path d="M48.95,655.0 L48.95,666.5 M43.2,660.75 L54.7,660.75" stroke="#fff" stroke-width="3.6"/>
<path d="M12,720 L24,700 L54,698 L53,716 L42,726 Z" fill="#d0d0d0" stroke="#a8a8a8" stroke-width="1.5"/><path d="M20,708 L50,706 M16,715 L46,716 M30,700 L26,724 M40,699 L36,724 M48,700 L48,720" stroke="#999" stroke-width="1"/>
<rect x="39.7" y="719.5" width="18.5" height="18.5" rx="3.5" fill="#5e8e5a" stroke="#4e7a4a" stroke-width="1"/><rect x="40.7" y="720.5" width="16.5" height="8.25" rx="3" fill="#7aa476" opacity="0.6"/><path d="M48.95,723.0 L48.95,734.5 M43.2,728.75 L54.7,728.75" stroke="#fff" stroke-width="3.6"/>
<rect x="15" y="768.5" width="38.5" height="28" fill="#55aee8" stroke="#8a8a8a" stroke-width="1.8"/><path d="M16,790 L30,776 L52,787 L52,795.5 L16,795.5 Z" fill="#c8b45c"/>
<rect x="39.7" y="788" width="18.5" height="18.5" rx="3.5" fill="#5e8e5a" stroke="#4e7a4a" stroke-width="1"/><rect x="40.7" y="789" width="16.5" height="8.25" rx="3" fill="#7aa476" opacity="0.6"/><path d="M48.95,791.5 L48.95,803.0 M43.2,797.25 L54.7,797.25" stroke="#fff" stroke-width="3.6"/>
<rect x="15" y="836.5" width="38.5" height="27.5" fill="#eeeeee" stroke="#9a9a9a" stroke-width="1.8"/><path d="M26,842 L42,842 M34,842 L34,858 M30,858 L38,858 M26,842 L26,845 M42,842 L42,845" stroke="#222" stroke-width="1.8"/>
<rect x="39.7" y="856" width="18.5" height="18.5" rx="3.5" fill="#5e8e5a" stroke="#4e7a4a" stroke-width="1"/><rect x="40.7" y="857" width="16.5" height="8.25" rx="3" fill="#7aa476" opacity="0.6"/><path d="M48.95,859.5 L48.95,871.0 M43.2,865.25 L54.7,865.25" stroke="#fff" stroke-width="3.6"/>
<rect x="16.5" y="900.5" width="8.5" height="8.5" fill="#ffd000" stroke="#e08000" stroke-width="1.5"/><rect x="16.5" y="912.5" width="8.5" height="8.5" fill="#ff3800" stroke="#a02000" stroke-width="1.5"/><rect x="16.5" y="924.5" width="8.5" height="8.5" fill="#10c050" stroke="#0a5a30" stroke-width="1.5"/>
<rect x="28" y="904" width="11" height="3" fill="#9a9a9a"/><rect x="28" y="916" width="18" height="3" fill="#9a9a9a"/><rect x="28" y="928" width="8" height="3" fill="#9a9a9a"/>
<rect x="39.7" y="924" width="18.5" height="18.5" rx="3.5" fill="#5e8e5a" stroke="#4e7a4a" stroke-width="1"/><rect x="40.7" y="925" width="16.5" height="8.25" rx="3" fill="#7aa476" opacity="0.6"/><path d="M48.95,927.5 L48.95,939.0 M43.2,933.25 L54.7,933.25" stroke="#fff" stroke-width="3.6"/>
<rect x="13" y="980.5" width="42" height="6.5" fill="#8a8a8a" stroke="#333" stroke-width="1.6"/><rect x="23" y="982" width="9" height="3.5" fill="#bdbdbd"/><rect x="40" y="982" width="9" height="3.5" fill="#bdbdbd"/>
<rect x="39.7" y="992" width="18.5" height="18.5" rx="3.5" fill="#5e8e5a" stroke="#4e7a4a" stroke-width="1"/><rect x="40.7" y="993" width="16.5" height="8.25" rx="3" fill="#7aa476" opacity="0.6"/><path d="M48.95,995.5 L48.95,1007.0 M43.2,1001.25 L54.7,1001.25" stroke="#fff" stroke-width="3.6"/>
<path d="M33,1033 L45,1068 L33,1057 L19,1074 Z" fill="#5e88c0" stroke="#3a5a88" stroke-width="1.6" stroke-linejoin="round"/><text x="28" y="1062" font-family="Liberation Sans" font-weight="bold" font-size="13" fill="#fff">N</text>
<rect x="39.5" y="1058" width="18.5" height="18.5" rx="3.5" fill="#5e8e5a" stroke="#4e7a4a" stroke-width="1"/><rect x="40.5" y="1059" width="16.5" height="8.25" rx="3" fill="#7aa476" opacity="0.6"/><path d="M48.75,1061.5 L48.75,1073.0 M43.0,1067.25 L54.5,1067.25" stroke="#fff" stroke-width="3.6"/>
<rect x="14.5" y="1117" width="30" height="20" fill="#c8e4f8" stroke="#8aa8c0" stroke-width="1.6"/><circle cx="44" cy="1122" r="10.5" fill="#f5a8a8" stroke="#c87070" stroke-width="1.6"/><path d="M31,1100 L44,1121 L18,1121 Z" fill="#c0f0b8" stroke="#5a9a50" stroke-width="1.8" stroke-linejoin="round"/>
<rect x="40" y="1127.5" width="18.5" height="18.5" rx="3.5" fill="#5e8e5a" stroke="#4e7a4a" stroke-width="1"/><rect x="41" y="1128.5" width="16.5" height="8.25" rx="3" fill="#7aa476" opacity="0.6"/><path d="M49.25,1131.0 L49.25,1142.5 M43.5,1136.75 L55.0,1136.75" stroke="#fff" stroke-width="3.6"/>
<path d="M55,1136 L62,1136 L58.5,1142 Z" fill="#a8a8a8"/>
<path d="M33.5,1170 L39,1184 L54.5,1184.5 L42.5,1194 L47,1209 L33.5,1200 L20,1209 L24.5,1194 L12.5,1184.5 L28,1184 Z" fill="#f8e6a8" stroke="#d89a5a" stroke-width="1.8" stroke-linejoin="round"/>
<rect x="39.7" y="1195" width="18.5" height="18.5" rx="3.5" fill="#5e8e5a" stroke="#4e7a4a" stroke-width="1"/><rect x="40.7" y="1196" width="16.5" height="8.25" rx="3" fill="#7aa476" opacity="0.6"/><path d="M48.95,1198.5 L48.95,1210.0 M43.2,1204.25 L54.7,1204.25" stroke="#fff" stroke-width="3.6"/>
<line x1="17" y1="1273" x2="46" y2="1245" stroke="#333" stroke-width="2"/><rect x="13" y="1270" width="6" height="6" fill="#333"/><path d="M54,1237 L49,1253 L40,1244 Z" fill="#e8e8e8" stroke="#333" stroke-width="1.6" stroke-linejoin="round"/>
<rect x="39.7" y="1263" width="18.5" height="18.5" rx="3.5" fill="#5e8e5a" stroke="#4e7a4a" stroke-width="1"/><rect x="40.7" y="1264" width="16.5" height="8.25" rx="3" fill="#7aa476" opacity="0.6"/><path d="M48.95,1266.5 L48.95,1278.0 M43.2,1272.25 L54.7,1272.25" stroke="#fff" stroke-width="3.6"/>
<path d="M30,1352 L33.5,1355 L37,1352 M30,1357 L33.5,1360 L37,1357" stroke="#222" stroke-width="1.4" fill="none"/>
</svg>
</body></html>
